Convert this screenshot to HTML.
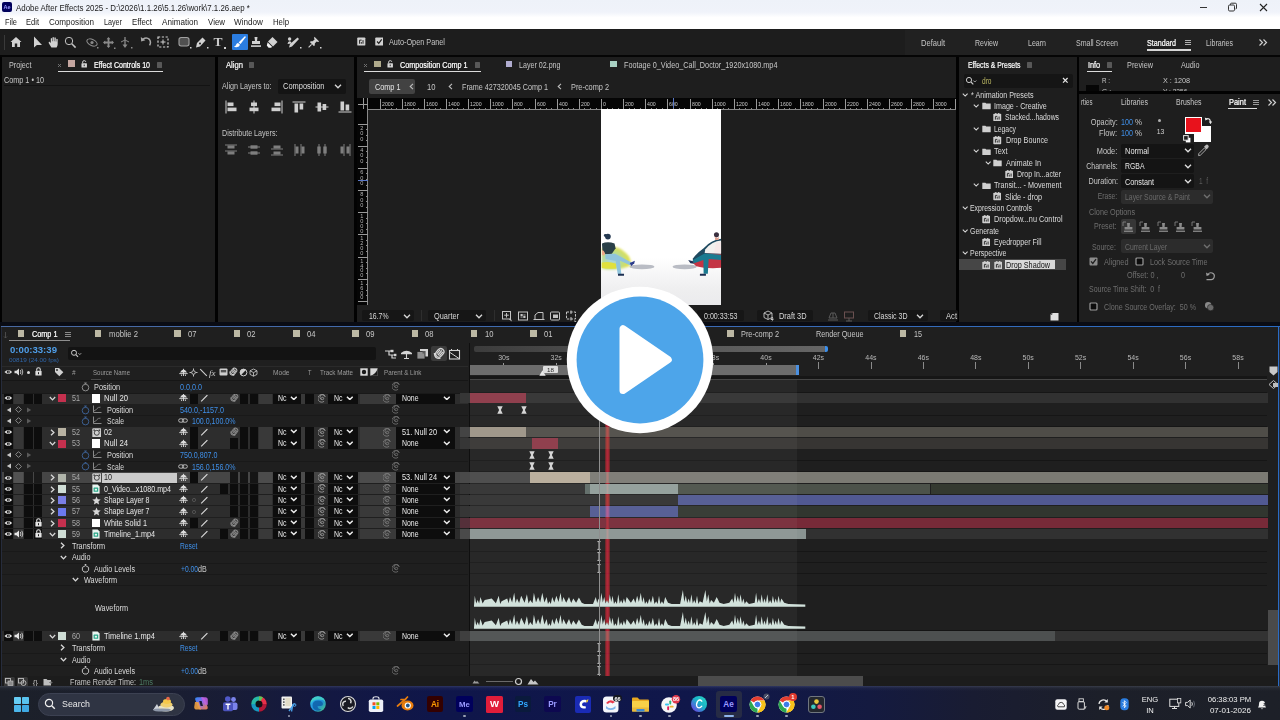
<!DOCTYPE html>
<html lang="en"><head><meta charset="utf-8"><title>Adobe After Effects 2025</title>
<style>
html,body{margin:0;padding:0;}
body{width:1280px;height:720px;overflow:hidden;position:relative;background:#121212;font-family:"Liberation Sans", sans-serif;}
#root{position:absolute;left:0;top:0;width:1280px;height:720px;overflow:hidden;}
#root div,#root svg,#root span{position:absolute;}
#root div{box-sizing:border-box;}
.t{white-space:pre;}

</style></head><body><div id="root">
<div style="left:0px;top:0px;width:1280px;height:29px;background:linear-gradient(#eef2f9 0px,#f0f3fa 12px,#ffffff 17.5px,#ffffff 29px);"></div>
<div style="left:2px;top:2px;width:10px;height:10px;background:#00005b;border-radius:2px;"></div>
<span class="t" style="left:3.48px;top:4px;font-size:5.5px;line-height:7.15px;color:#9999ff;font-weight:700;">Ae</span>
<span class="t" style="left:16px;top:3px;font-size:8.6px;line-height:11.18px;color:#1a1a1a;transform:scaleX(0.919);transform-origin:0 50%;">Adobe After Effects 2025 - D:\2026\1.1.26\5.1.26\work\7.1.26.aep *</span>
<span class="t" style="left:5px;top:17px;font-size:8.6px;line-height:11.18px;color:#1a1a1a;transform:scaleX(0.866);transform-origin:0 50%;">File</span>
<span class="t" style="left:26px;top:17px;font-size:8.6px;line-height:11.18px;color:#1a1a1a;transform:scaleX(0.878);transform-origin:0 50%;">Edit</span>
<span class="t" style="left:49px;top:17px;font-size:8.6px;line-height:11.18px;color:#1a1a1a;transform:scaleX(0.942);transform-origin:0 50%;">Composition</span>
<span class="t" style="left:104px;top:17px;font-size:8.6px;line-height:11.18px;color:#1a1a1a;transform:scaleX(0.837);transform-origin:0 50%;">Layer</span>
<span class="t" style="left:132px;top:17px;font-size:8.6px;line-height:11.18px;color:#1a1a1a;transform:scaleX(0.916);transform-origin:0 50%;">Effect</span>
<span class="t" style="left:162px;top:17px;font-size:8.6px;line-height:11.18px;color:#1a1a1a;transform:scaleX(0.942);transform-origin:0 50%;">Animation</span>
<span class="t" style="left:208px;top:17px;font-size:8.6px;line-height:11.18px;color:#1a1a1a;transform:scaleX(0.920);transform-origin:0 50%;">View</span>
<span class="t" style="left:234px;top:17px;font-size:8.6px;line-height:11.18px;color:#1a1a1a;transform:scaleX(0.948);transform-origin:0 50%;">Window</span>
<span class="t" style="left:273px;top:17px;font-size:8.6px;line-height:11.18px;color:#1a1a1a;transform:scaleX(0.905);transform-origin:0 50%;">Help</span>
<div style="left:1200px;top:7px;width:7px;height:1px;background:#333;"></div>
<svg style="left:1227px;top:2px;" width="11" height="11" viewBox="0 0 11 11"><rect x="1.5" y="3" width="6" height="6" rx="1.2" fill="none" stroke="#333" stroke-width="1"/><path d="M3.5 3 V2.2 Q3.5 1.2 4.5 1.2 H8.3 Q9.5 1.2 9.5 2.4 V6 Q9.5 7 8.6 7" fill="none" stroke="#333" stroke-width="1"/></svg>
<svg style="left:1258px;top:2px;" width="11" height="11" viewBox="0 0 11 11"><path d="M2 2 L9 9 M9 2 L2 9" stroke="#222" stroke-width="1.1" fill="none"/></svg>
<div style="left:0px;top:28.7px;width:1280px;height:27.3px;background:#1d1d1d;"></div>
<div style="left:0px;top:55.2px;width:1280px;height:1.6px;background:#050505;"></div>
<div style="left:905px;top:30px;width:375px;height:25px;background:#212121;"></div>
<div style="left:4px;top:35px;width:1px;height:15px;background:#3a3a3a;"></div>
<svg style="left:10px;top:36px;" width="12" height="12" viewBox="0 0 12 12"><path d="M6 1 L0.5 6 H2 V11 H4.8 V7.5 H7.2 V11 H10 V6 H11.5 Z" fill="#d2d2d2"/></svg>
<svg style="left:32.5px;top:36px;" width="10" height="13" viewBox="0 0 10 13"><path d="M1 0.6 L1 11.6 L3.9 8.9 L9 8.9 Z" fill="#d2d2d2"/></svg>
<svg style="left:48px;top:36px;" width="12" height="12" viewBox="0 0 12 12"><path d="M3.4 11.4 L0.8 7.2 Q0.2 5.6 1.6 5.8 L2.8 7 V2.6 Q3.4 1.6 4 2.6 V5.2 H4.5 V1.4 Q5.2 0.4 5.9 1.4 V5.2 H6.4 V1.8 Q7.1 0.9 7.8 1.9 V5.4 H8.3 V3.2 Q9 2.4 9.7 3.3 V8 Q9.7 10 8.6 11.4 Z" fill="#d2d2d2"/></svg>
<svg style="left:64px;top:36px;" width="13" height="13" viewBox="0 0 13 13"><circle cx="5" cy="5" r="3.7" fill="none" stroke="#c4c4c4" stroke-width="1"/><path d="M7.8 7.8 L11.6 11.6" stroke="#c4c4c4" stroke-width="1.5"/></svg>
<svg style="left:85px;top:36px;" width="14" height="13" viewBox="0 0 14 13"><ellipse cx="7" cy="6.5" rx="5.5" ry="3" fill="none" stroke="#8a8a8a" stroke-width="1.1" transform="rotate(25 7 6.5)"/><circle cx="7" cy="6.5" r="1.6" fill="#8a8a8a"/><rect x="12" y="11" width="1.5" height="1.5" fill="#8a8a8a"/></svg>
<svg style="left:103px;top:36.5px;" width="14" height="13" viewBox="0 0 14 13"><path d="M5.5 1.5 V9.5 M1.5 5.5 H9.5" stroke="#8a8a8a" stroke-width="1.8"/><path d="M5.5 0 L3.6 2.2 H7.4Z M5.5 11 L3.6 8.8 H7.4Z M0 5.5 L2.2 3.6 V7.4Z M11 5.5 L8.8 3.6 V7.4Z" fill="#8a8a8a"/><rect x="11" y="10.5" width="1.5" height="1.5" fill="#8a8a8a"/></svg>
<svg style="left:119px;top:36px;" width="14" height="13" viewBox="0 0 14 13"><path d="M6 1 V10" stroke="#8a8a8a" stroke-width="1.3"/><path d="M6 12 L3.5 8.5 H8.5Z" fill="#8a8a8a"/><path d="M2 6 L6 4 L10 6" stroke="#8a8a8a" fill="none" stroke-width="1"/><rect x="12" y="11" width="1.5" height="1.5" fill="#8a8a8a"/></svg>
<svg style="left:140px;top:36px;" width="13" height="13" viewBox="0 0 13 13"><path d="M3 3.2 Q6.5 0.6 9.4 3.4 Q11.4 6.4 9.6 9.4" fill="none" stroke="#a8a8a8" stroke-width="1.5"/><path d="M0.8 1 L1.2 5.6 L5.4 4.2 Z" fill="#a8a8a8"/></svg>
<svg style="left:157px;top:36px;" width="13" height="13" viewBox="0 0 13 13"><rect x="1" y="1" width="10" height="10" fill="none" stroke="#d2d2d2" stroke-width="1.2" stroke-dasharray="2.2 1.6"/><path d="M6 3.5 V8.5 M3.5 6 H8.5" stroke="#d2d2d2" stroke-width="1"/></svg>
<svg style="left:178px;top:36px;" width="14" height="13" viewBox="0 0 14 13"><rect x="1" y="1.5" width="10" height="8.5" rx="2.2" fill="#505050" stroke="#a2a2a2" stroke-width="1.1"/><rect x="12" y="11" width="1.5" height="1.5" fill="#d2d2d2"/></svg>
<svg style="left:195px;top:36px;" width="14" height="13" viewBox="0 0 14 13"><path d="M1 11.5 L2 7 L7.5 1.5 L10.5 4.5 L5 10.5 Z" fill="#d2d2d2"/><circle cx="5" cy="7.5" r="1" fill="#1d1d1d"/><rect x="12" y="11" width="1.5" height="1.5" fill="#d2d2d2"/></svg>
<span class="t" style="left:213.49px;top:33px;font-size:13.5px;line-height:17.55px;color:#cacaca;font-weight:700;font-family:'Liberation Serif', serif;">T</span>
<div style="left:224px;top:47px;width:1.5px;height:1.5px;background:#d2d2d2;"></div>
<div style="left:232px;top:34px;width:15.5px;height:16px;background:#2b7de0;border-radius:1px;"></div>
<svg style="left:233px;top:35px;" width="14" height="14" viewBox="0 0 14 14"><path d="M11.8 1.2 Q13 1 12.6 2.2 L7.6 9 L5.6 7.4 Z" fill="#fff"/><path d="M5 8 L7 9.7 Q6.6 12 3.5 12.3 Q1.6 12.4 1 11.6 Q3 11 3.2 9.6 Q3.6 8.2 5 8Z" fill="#fff"/></svg>
<svg style="left:250px;top:36px;" width="13" height="13" viewBox="0 0 13 13"><path d="M4.5 1 H7.5 L7 5 H10 V8 H2 V5 H5 Z" fill="#d2d2d2"/><rect x="1" y="9.3" width="10" height="1.6" fill="#d2d2d2"/></svg>
<svg style="left:266px;top:36px;" width="13" height="13" viewBox="0 0 13 13"><path d="M6.5 1 L11.5 6 L7 10.5 L2 5.5 Z" fill="#d2d2d2"/><path d="M1.6 6.2 L6.2 10.9 L4.8 11.8 H2.6 L0.8 9.6Z" fill="#f4f4f4"/></svg>
<svg style="left:287px;top:36px;" width="15" height="13" viewBox="0 0 15 13"><path d="M2 11.5 L3 8 L10.5 1.5 L12 3 L5 10.5Z" fill="#d2d2d2"/><circle cx="2.6" cy="3" r="1.7" fill="#d2d2d2"/><path d="M0.5 8 Q1 5.2 2.6 5.2 Q4.4 5.2 4.6 7.4Z" fill="#d2d2d2"/><rect x="13" y="11" width="1.5" height="1.5" fill="#d2d2d2"/></svg>
<svg style="left:308px;top:36px;" width="14" height="13" viewBox="0 0 14 13"><path d="M6.5 0.8 L11.2 5.5 L10 6 L8.6 5.6 L6.8 7.6 L6.8 9.6 L5.8 10 L2 6.2 L2.6 5.2 L4.6 5.2 L6.6 3.4 L6 2 Z" fill="#d2d2d2"/><path d="M3.6 8.4 L0.6 11.4" stroke="#d2d2d2" stroke-width="1.1"/><rect x="12" y="11" width="1.5" height="1.5" fill="#d2d2d2"/></svg>
<svg style="left:357px;top:37.3px;" width="8.6" height="9" viewBox="0 0 10 10"><rect x="0.3" y="0.3" width="9.4" height="9.4" rx="1" fill="#d2d2d2"/><path d="M3 3.4 V7.6 M5 5.6 V7.6 M7 3.4 V7.6 M3 3.4 H5.4" stroke="#1d1d1d" stroke-width="1.1" fill="none"/></svg>
<svg style="left:374.8px;top:37.3px;" width="8.6" height="9" viewBox="0 0 10 10"><rect x="0.3" y="0.3" width="9.4" height="9.4" rx="1" fill="#d2d2d2"/><path d="M2.4 5 L4.4 7.2 L7.8 2.6" stroke="#1d1d1d" stroke-width="1.4" fill="none"/></svg>
<span class="t" style="left:389px;top:37px;font-size:8.4px;line-height:10.92px;color:#c6c6c6;transform:scaleX(0.871);transform-origin:0 50%;">Auto-Open Panel</span>
<span class="t" style="left:921px;top:38px;font-size:8.4px;line-height:10.92px;color:#c6c6c6;transform:scaleX(0.904);transform-origin:0 50%;">Default</span>
<span class="t" style="left:975px;top:38px;font-size:8.4px;line-height:10.92px;color:#c6c6c6;transform:scaleX(0.837);transform-origin:0 50%;">Review</span>
<span class="t" style="left:1028px;top:38px;font-size:8.4px;line-height:10.92px;color:#c6c6c6;transform:scaleX(0.840);transform-origin:0 50%;">Learn</span>
<span class="t" style="left:1076px;top:38px;font-size:8.4px;line-height:10.92px;color:#c6c6c6;transform:scaleX(0.843);transform-origin:0 50%;">Small Screen</span>
<span class="t" style="left:1147px;top:38px;font-size:8.4px;line-height:10.92px;color:#fffffe;transform:scaleX(0.853);transform-origin:0 50%;-webkit-text-stroke:0.22px #fff;">Standard</span>
<span class="t" style="left:1206px;top:38px;font-size:8.4px;line-height:10.92px;color:#c6c6c6;transform:scaleX(0.840);transform-origin:0 50%;">Libraries</span>
<div style="left:1146.8px;top:49.2px;width:44px;height:1.5px;background:#d8d8d8;"></div>
<div style="left:1185px;top:40.2px;width:5.5px;height:1px;background:#b0b0b0;"></div>
<div style="left:1185px;top:42.300000000000004px;width:5.5px;height:1px;background:#b0b0b0;"></div>
<div style="left:1185px;top:44.400000000000006px;width:5.5px;height:1px;background:#b0b0b0;"></div>
<svg style="left:1258px;top:38px;" width="10" height="9" viewBox="0 0 10 9"><path d="M1.5 1.5 L4.5 4.5 L1.5 7.5 M5.5 1.5 L8.5 4.5 L5.5 7.5" fill="none" stroke="#d0d0d0" stroke-width="1.2"/></svg>
<div style="left:0px;top:56.7px;width:1280px;height:270px;background:#020202;"></div>
<div style="left:2px;top:56.8px;width:213px;height:265.4px;background:#1e1e1e;"></div>
<div style="left:218px;top:56.8px;width:136.2px;height:265.4px;background:#1e1e1e;"></div>
<div style="left:357px;top:56.8px;width:599.1px;height:265.4px;background:#1e1e1e;"></div>
<div style="left:958.8px;top:56.8px;width:118.2px;height:265.4px;background:#1e1e1e;"></div>
<div style="left:1079px;top:56.8px;width:201px;height:34.2px;background:#1e1e1e;"></div>
<div style="left:1079px;top:94px;width:201px;height:228.2px;background:#1e1e1e;"></div>
<span class="t" style="left:8.5px;top:60px;font-size:8.4px;line-height:10.92px;color:#c6c6c6;transform:scaleX(0.863);transform-origin:0 50%;">Project</span>
<svg style="left:57.0px;top:63.0px;" width="5.0" height="5.0" viewBox="0 0 5.0 5.0"><path d="M1 1 L4.0 4.0 M4.0 1 L1 4.0" stroke="#777" stroke-width="0.9"/></svg>
<div style="left:68px;top:60px;width:6.8px;height:6.8px;background:#c4a6a0;"></div>
<svg style="left:81.3px;top:59.9px;" width="6.4" height="8.2" viewBox="0 0 7 9"><rect x="0.5" y="3.6" width="6" height="4.6" rx="0.6" fill="#d8d8d8"/><path d="M1.8 3.6 V2.2 Q1.8 0.7 3.5 0.7 Q5.2 0.7 5.2 2" fill="none" stroke="#d8d8d8" stroke-width="1"/><rect x="3" y="5" width="1" height="1.8" fill="#1e1e1e"/></svg>
<span class="t" style="left:93.5px;top:60px;font-size:8.4px;line-height:10.92px;color:#ffffff;transform:scaleX(0.843);transform-origin:0 50%;-webkit-text-stroke:0.22px #fff;">Effect Controls 10</span>
<div style="left:157px;top:62.3px;width:5.2px;height:5.6px;background:#585858;border-radius:0.5px;"></div>
<div style="left:58px;top:71px;width:105px;height:1.2px;background:#dcdcdc;"></div>
<span class="t" style="left:4px;top:75px;font-size:8.4px;line-height:10.92px;color:#c6c6c6;transform:scaleX(0.865);transform-origin:0 50%;">Comp 1 • 10</span>
<div style="left:4px;top:85px;width:206px;height:1px;background:#131313;"></div>
<span class="t" style="left:226px;top:60px;font-size:8.4px;line-height:10.92px;color:#f0f0f0;transform:scaleX(0.913);transform-origin:0 50%;-webkit-text-stroke:0.22px #fff;">Align</span>
<div style="left:249px;top:62.3px;width:5.2px;height:5.6px;background:#585858;border-radius:0.5px;"></div>
<span class="t" style="left:222px;top:81px;font-size:8.4px;line-height:10.92px;color:#c6c6c6;transform:scaleX(0.857);transform-origin:0 50%;">Align Layers to:</span>
<div style="left:278px;top:79px;width:67.5px;height:14.5px;background:#141414;border-radius:2px;"></div>
<span class="t" style="left:282.5px;top:81px;font-size:8.4px;line-height:10.92px;color:#dedede;transform:scaleX(0.891);transform-origin:0 50%;">Composition</span>
<svg style="left:334.0px;top:84.0px;" width="8.0" height="5.0" viewBox="0 0 8 5"><path d="M1 0.8 L4 3.8 L7 0.8" fill="none" stroke="#d8d8d8" stroke-width="1.3"/></svg>
<svg style="left:224px;top:99.8px;" width="14" height="14" viewBox="0 0 14 14"><rect x="1.5" y="0.5" width="1" height="13" fill="#cfcfcf"/><rect x="3.5" y="2.5" width="6" height="3.6" fill="#cfcfcf"/><rect x="3.5" y="7.6" width="9" height="3.6" fill="#cfcfcf"/></svg>
<svg style="left:246.5px;top:99.8px;" width="14" height="14" viewBox="0 0 14 14"><rect x="6.5" y="0.5" width="1" height="13" fill="#cfcfcf"/><rect x="4" y="2.5" width="6" height="3.6" fill="#cfcfcf"/><rect x="2.5" y="7.6" width="9" height="3.6" fill="#cfcfcf"/></svg>
<svg style="left:269.5px;top:99.8px;" width="14" height="14" viewBox="0 0 14 14"><rect x="11.5" y="0.5" width="1" height="13" fill="#cfcfcf"/><rect x="4.5" y="2.5" width="6" height="3.6" fill="#cfcfcf"/><rect x="1.5" y="7.6" width="9" height="3.6" fill="#cfcfcf"/></svg>
<svg style="left:292px;top:99.8px;" width="14" height="14" viewBox="0 0 14 14"><rect x="0.5" y="1.5" width="13" height="1" fill="#cfcfcf"/><rect x="2.5" y="3.5" width="3.6" height="9" fill="#cfcfcf"/><rect x="7.6" y="3.5" width="3.6" height="6" fill="#cfcfcf"/></svg>
<svg style="left:315px;top:99.8px;" width="14" height="14" viewBox="0 0 14 14"><rect x="0.5" y="6.5" width="13" height="1" fill="#cfcfcf"/><rect x="2.5" y="2.5" width="3.6" height="9" fill="#cfcfcf"/><rect x="7.6" y="4" width="3.6" height="6" fill="#cfcfcf"/></svg>
<svg style="left:338px;top:99.8px;" width="14" height="14" viewBox="0 0 14 14"><rect x="0.5" y="11.5" width="13" height="1" fill="#cfcfcf"/><rect x="2.5" y="1.5" width="3.6" height="9" fill="#cfcfcf"/><rect x="7.6" y="4.5" width="3.6" height="6" fill="#cfcfcf"/></svg>
<span class="t" style="left:222px;top:128px;font-size:8.4px;line-height:10.92px;color:#c6c6c6;transform:scaleX(0.852);transform-origin:0 50%;">Distribute Layers:</span>
<svg style="left:224px;top:143px;" width="14" height="14" viewBox="0 0 14 14"><rect x="1" y="1.5" width="12" height="1" fill="#7e7e7e"/><rect x="3.5" y="2.5" width="7" height="3" fill="#7e7e7e"/><rect x="1" y="7.5" width="12" height="1" fill="#7e7e7e"/><rect x="3.5" y="8.5" width="7" height="3" fill="#7e7e7e"/></svg>
<svg style="left:247px;top:143px;" width="14" height="14" viewBox="0 0 14 14"><rect x="1" y="3.5" width="12" height="1" fill="#7e7e7e"/><rect x="3.5" y="2.3" width="7" height="3.4" fill="#7e7e7e"/><rect x="1" y="9.5" width="12" height="1" fill="#7e7e7e"/><rect x="3.5" y="8.3" width="7" height="3.4" fill="#7e7e7e"/></svg>
<svg style="left:269.5px;top:143px;" width="14" height="14" viewBox="0 0 14 14"><rect x="1" y="5.5" width="12" height="1" fill="#7e7e7e"/><rect x="3.5" y="2.5" width="7" height="3" fill="#7e7e7e"/><rect x="1" y="11.5" width="12" height="1" fill="#7e7e7e"/><rect x="3.5" y="8.5" width="7" height="3" fill="#7e7e7e"/></svg>
<svg style="left:292.5px;top:143px;" width="14" height="14" viewBox="0 0 14 14"><rect x="1.5" y="1" width="1" height="12" fill="#7e7e7e"/><rect x="2.5" y="3.5" width="3" height="7" fill="#7e7e7e"/><rect x="7.5" y="1" width="1" height="12" fill="#7e7e7e"/><rect x="8.5" y="3.5" width="3" height="7" fill="#7e7e7e"/></svg>
<svg style="left:315px;top:143px;" width="14" height="14" viewBox="0 0 14 14"><rect x="3.5" y="1" width="1" height="12" fill="#7e7e7e"/><rect x="2.3" y="3.5" width="3.4" height="7" fill="#7e7e7e"/><rect x="9.5" y="1" width="1" height="12" fill="#7e7e7e"/><rect x="8.3" y="3.5" width="3.4" height="7" fill="#7e7e7e"/></svg>
<svg style="left:338px;top:143px;" width="14" height="14" viewBox="0 0 14 14"><rect x="5.5" y="1" width="1" height="12" fill="#7e7e7e"/><rect x="2.5" y="3.5" width="3" height="7" fill="#7e7e7e"/><rect x="11.5" y="1" width="1" height="12" fill="#7e7e7e"/><rect x="8.5" y="3.5" width="3" height="7" fill="#7e7e7e"/></svg>
<svg style="left:363.0px;top:63.0px;" width="5.0" height="5.0" viewBox="0 0 5.0 5.0"><path d="M1 1 L4.0 4.0 M4.0 1 L1 4.0" stroke="#777" stroke-width="0.9"/></svg>
<div style="left:374px;top:60.5px;width:6.8px;height:6.8px;background:#b0ab8c;"></div>
<svg style="left:387.3px;top:59.9px;" width="6.4" height="8.2" viewBox="0 0 7 9"><rect x="0.5" y="3.6" width="6" height="4.6" rx="0.6" fill="#d8d8d8"/><path d="M1.8 3.6 V2.2 Q1.8 0.7 3.5 0.7 Q5.2 0.7 5.2 2" fill="none" stroke="#d8d8d8" stroke-width="1"/><rect x="3" y="5" width="1" height="1.8" fill="#1e1e1e"/></svg>
<span class="t" style="left:399.5px;top:60px;font-size:8.4px;line-height:10.92px;color:#ffffff;transform:scaleX(0.863);transform-origin:0 50%;-webkit-text-stroke:0.22px #fff;">Composition Comp 1</span>
<div style="left:475px;top:62.3px;width:5.2px;height:5.6px;background:#585858;border-radius:0.5px;"></div>
<div style="left:364px;top:71px;width:117px;height:1.2px;background:#dcdcdc;"></div>
<div style="left:505.5px;top:60.5px;width:6.8px;height:6.8px;background:#b0acd0;"></div>
<span class="t" style="left:518.5px;top:60px;font-size:8.4px;line-height:10.92px;color:#c6c6c6;transform:scaleX(0.849);transform-origin:0 50%;">Layer 02.png</span>
<div style="left:610px;top:60.5px;width:6.8px;height:6.8px;background:#a8d0c2;"></div>
<span class="t" style="left:623.5px;top:60px;font-size:8.4px;line-height:10.92px;color:#c6c6c6;transform:scaleX(0.868);transform-origin:0 50%;">Footage 0_Video_Call_Doctor_1920x1080.mp4</span>
<div style="left:369.3px;top:78.8px;width:46.2px;height:15.2px;background:#424242;border-radius:2px;"></div>
<span class="t" style="left:375px;top:82px;font-size:8.4px;line-height:10.92px;color:#e6e6e6;transform:scaleX(0.869);transform-origin:0 50%;">Comp 1</span>
<svg style="left:408.5px;top:83.0px;" width="5" height="7" viewBox="0 0 5 7"><path d="M4 0.8 L1.2 3.5 L4 6.2" fill="none" stroke="#bdbdbd" stroke-width="1.1"/></svg>
<span class="t" style="left:427px;top:82px;font-size:8.4px;line-height:10.92px;color:#c6c6c6;transform:scaleX(0.911);transform-origin:0 50%;">10</span>
<svg style="left:447.5px;top:83.0px;" width="5" height="7" viewBox="0 0 5 7"><path d="M4 0.8 L1.2 3.5 L4 6.2" fill="none" stroke="#bdbdbd" stroke-width="1.1"/></svg>
<span class="t" style="left:462px;top:82px;font-size:8.4px;line-height:10.92px;color:#c6c6c6;transform:scaleX(0.859);transform-origin:0 50%;">Frame 427320045 Comp 1</span>
<svg style="left:557.0px;top:83.0px;" width="5" height="7" viewBox="0 0 5 7"><path d="M4 0.8 L1.2 3.5 L4 6.2" fill="none" stroke="#bdbdbd" stroke-width="1.1"/></svg>
<span class="t" style="left:570.5px;top:82px;font-size:8.4px;line-height:10.92px;color:#c6c6c6;transform:scaleX(0.878);transform-origin:0 50%;">Pre-comp 2</span>
<div style="left:357px;top:98px;width:599.1px;height:11.5px;background:#050505;"></div>
<div style="left:357px;top:98px;width:11px;height:207px;background:#050505;"></div>
<div style="left:379.5px;top:99px;width:0.9px;height:10px;background:#9a9a9a;"></div>
<div style="left:385.0px;top:107.5px;width:0.8px;height:1.8px;background:#8a8a8a;"></div>
<div style="left:390.6px;top:107.5px;width:0.8px;height:1.8px;background:#8a8a8a;"></div>
<div style="left:396.1px;top:107.5px;width:0.8px;height:1.8px;background:#8a8a8a;"></div>
<span class="t" style="left:381.5px;top:100px;font-size:6.2px;line-height:8.06px;color:#c8c8c8;transform:scaleX(0.843);transform-origin:0 50%;">2000</span>
<div style="left:401.6px;top:99px;width:0.9px;height:10px;background:#9a9a9a;"></div>
<div style="left:407.2px;top:107.5px;width:0.8px;height:1.8px;background:#8a8a8a;"></div>
<div style="left:412.7px;top:107.5px;width:0.8px;height:1.8px;background:#8a8a8a;"></div>
<div style="left:418.3px;top:107.5px;width:0.8px;height:1.8px;background:#8a8a8a;"></div>
<span class="t" style="left:403.6px;top:100px;font-size:6.2px;line-height:8.06px;color:#c8c8c8;transform:scaleX(0.843);transform-origin:0 50%;">1800</span>
<div style="left:423.8px;top:99px;width:0.9px;height:10px;background:#9a9a9a;"></div>
<div style="left:429.3px;top:107.5px;width:0.8px;height:1.8px;background:#8a8a8a;"></div>
<div style="left:434.9px;top:107.5px;width:0.8px;height:1.8px;background:#8a8a8a;"></div>
<div style="left:440.4px;top:107.5px;width:0.8px;height:1.8px;background:#8a8a8a;"></div>
<span class="t" style="left:425.8px;top:100px;font-size:6.2px;line-height:8.06px;color:#c8c8c8;transform:scaleX(0.843);transform-origin:0 50%;">1600</span>
<div style="left:446.0px;top:99px;width:0.9px;height:10px;background:#9a9a9a;"></div>
<div style="left:451.5px;top:107.5px;width:0.8px;height:1.8px;background:#8a8a8a;"></div>
<div style="left:457.0px;top:107.5px;width:0.8px;height:1.8px;background:#8a8a8a;"></div>
<div style="left:462.6px;top:107.5px;width:0.8px;height:1.8px;background:#8a8a8a;"></div>
<span class="t" style="left:448.0px;top:100px;font-size:6.2px;line-height:8.06px;color:#c8c8c8;transform:scaleX(0.843);transform-origin:0 50%;">1400</span>
<div style="left:468.1px;top:99px;width:0.9px;height:10px;background:#9a9a9a;"></div>
<div style="left:473.6px;top:107.5px;width:0.8px;height:1.8px;background:#8a8a8a;"></div>
<div style="left:479.2px;top:107.5px;width:0.8px;height:1.8px;background:#8a8a8a;"></div>
<div style="left:484.7px;top:107.5px;width:0.8px;height:1.8px;background:#8a8a8a;"></div>
<span class="t" style="left:470.1px;top:100px;font-size:6.2px;line-height:8.06px;color:#c8c8c8;transform:scaleX(0.843);transform-origin:0 50%;">1200</span>
<div style="left:490.2px;top:99px;width:0.9px;height:10px;background:#9a9a9a;"></div>
<div style="left:495.8px;top:107.5px;width:0.8px;height:1.8px;background:#8a8a8a;"></div>
<div style="left:501.3px;top:107.5px;width:0.8px;height:1.8px;background:#8a8a8a;"></div>
<div style="left:506.9px;top:107.5px;width:0.8px;height:1.8px;background:#8a8a8a;"></div>
<span class="t" style="left:492.2px;top:100px;font-size:6.2px;line-height:8.06px;color:#c8c8c8;transform:scaleX(0.843);transform-origin:0 50%;">1000</span>
<div style="left:512.4px;top:99px;width:0.9px;height:10px;background:#9a9a9a;"></div>
<div style="left:517.9px;top:107.5px;width:0.8px;height:1.8px;background:#8a8a8a;"></div>
<div style="left:523.5px;top:107.5px;width:0.8px;height:1.8px;background:#8a8a8a;"></div>
<div style="left:529.0px;top:107.5px;width:0.8px;height:1.8px;background:#8a8a8a;"></div>
<span class="t" style="left:514.4px;top:100px;font-size:6.2px;line-height:8.06px;color:#c8c8c8;transform:scaleX(0.842);transform-origin:0 50%;">800</span>
<div style="left:534.6px;top:99px;width:0.9px;height:10px;background:#9a9a9a;"></div>
<div style="left:540.1px;top:107.5px;width:0.8px;height:1.8px;background:#8a8a8a;"></div>
<div style="left:545.6px;top:107.5px;width:0.8px;height:1.8px;background:#8a8a8a;"></div>
<div style="left:551.2px;top:107.5px;width:0.8px;height:1.8px;background:#8a8a8a;"></div>
<span class="t" style="left:536.6px;top:100px;font-size:6.2px;line-height:8.06px;color:#c8c8c8;transform:scaleX(0.842);transform-origin:0 50%;">600</span>
<div style="left:556.7px;top:99px;width:0.9px;height:10px;background:#9a9a9a;"></div>
<div style="left:562.2px;top:107.5px;width:0.8px;height:1.8px;background:#8a8a8a;"></div>
<div style="left:567.8px;top:107.5px;width:0.8px;height:1.8px;background:#8a8a8a;"></div>
<div style="left:573.3px;top:107.5px;width:0.8px;height:1.8px;background:#8a8a8a;"></div>
<span class="t" style="left:558.7px;top:100px;font-size:6.2px;line-height:8.06px;color:#c8c8c8;transform:scaleX(0.842);transform-origin:0 50%;">400</span>
<div style="left:578.9px;top:99px;width:0.9px;height:10px;background:#9a9a9a;"></div>
<div style="left:584.4px;top:107.5px;width:0.8px;height:1.8px;background:#8a8a8a;"></div>
<div style="left:589.9px;top:107.5px;width:0.8px;height:1.8px;background:#8a8a8a;"></div>
<div style="left:595.5px;top:107.5px;width:0.8px;height:1.8px;background:#8a8a8a;"></div>
<span class="t" style="left:580.9px;top:100px;font-size:6.2px;line-height:8.06px;color:#c8c8c8;transform:scaleX(0.842);transform-origin:0 50%;">200</span>
<div style="left:601.0px;top:99px;width:0.9px;height:10px;background:#9a9a9a;"></div>
<div style="left:606.5px;top:107.5px;width:0.8px;height:1.8px;background:#8a8a8a;"></div>
<div style="left:612.1px;top:107.5px;width:0.8px;height:1.8px;background:#8a8a8a;"></div>
<div style="left:617.6px;top:107.5px;width:0.8px;height:1.8px;background:#8a8a8a;"></div>
<span class="t" style="left:603.0px;top:100px;font-size:6.2px;line-height:8.06px;color:#c8c8c8;transform:scaleX(0.840);transform-origin:0 50%;">0</span>
<div style="left:623.1px;top:99px;width:0.9px;height:10px;background:#9a9a9a;"></div>
<div style="left:628.7px;top:107.5px;width:0.8px;height:1.8px;background:#8a8a8a;"></div>
<div style="left:634.2px;top:107.5px;width:0.8px;height:1.8px;background:#8a8a8a;"></div>
<div style="left:639.8px;top:107.5px;width:0.8px;height:1.8px;background:#8a8a8a;"></div>
<span class="t" style="left:625.1px;top:100px;font-size:6.2px;line-height:8.06px;color:#c8c8c8;transform:scaleX(0.842);transform-origin:0 50%;">200</span>
<div style="left:645.3px;top:99px;width:0.9px;height:10px;background:#9a9a9a;"></div>
<div style="left:650.8px;top:107.5px;width:0.8px;height:1.8px;background:#8a8a8a;"></div>
<div style="left:656.4px;top:107.5px;width:0.8px;height:1.8px;background:#8a8a8a;"></div>
<div style="left:661.9px;top:107.5px;width:0.8px;height:1.8px;background:#8a8a8a;"></div>
<span class="t" style="left:647.3px;top:100px;font-size:6.2px;line-height:8.06px;color:#c8c8c8;transform:scaleX(0.842);transform-origin:0 50%;">400</span>
<div style="left:667.4px;top:99px;width:0.9px;height:10px;background:#9a9a9a;"></div>
<div style="left:673.0px;top:107.5px;width:0.8px;height:1.8px;background:#8a8a8a;"></div>
<div style="left:678.5px;top:107.5px;width:0.8px;height:1.8px;background:#8a8a8a;"></div>
<div style="left:684.1px;top:107.5px;width:0.8px;height:1.8px;background:#8a8a8a;"></div>
<span class="t" style="left:669.4px;top:100px;font-size:6.2px;line-height:8.06px;color:#c8c8c8;transform:scaleX(0.842);transform-origin:0 50%;">600</span>
<div style="left:689.6px;top:99px;width:0.9px;height:10px;background:#9a9a9a;"></div>
<div style="left:695.1px;top:107.5px;width:0.8px;height:1.8px;background:#8a8a8a;"></div>
<div style="left:700.7px;top:107.5px;width:0.8px;height:1.8px;background:#8a8a8a;"></div>
<div style="left:706.2px;top:107.5px;width:0.8px;height:1.8px;background:#8a8a8a;"></div>
<span class="t" style="left:691.6px;top:100px;font-size:6.2px;line-height:8.06px;color:#c8c8c8;transform:scaleX(0.842);transform-origin:0 50%;">800</span>
<div style="left:711.8px;top:99px;width:0.9px;height:10px;background:#9a9a9a;"></div>
<div style="left:717.3px;top:107.5px;width:0.8px;height:1.8px;background:#8a8a8a;"></div>
<div style="left:722.8px;top:107.5px;width:0.8px;height:1.8px;background:#8a8a8a;"></div>
<div style="left:728.4px;top:107.5px;width:0.8px;height:1.8px;background:#8a8a8a;"></div>
<span class="t" style="left:713.8px;top:100px;font-size:6.2px;line-height:8.06px;color:#c8c8c8;transform:scaleX(0.843);transform-origin:0 50%;">1000</span>
<div style="left:733.9px;top:99px;width:0.9px;height:10px;background:#9a9a9a;"></div>
<div style="left:739.4px;top:107.5px;width:0.8px;height:1.8px;background:#8a8a8a;"></div>
<div style="left:745.0px;top:107.5px;width:0.8px;height:1.8px;background:#8a8a8a;"></div>
<div style="left:750.5px;top:107.5px;width:0.8px;height:1.8px;background:#8a8a8a;"></div>
<span class="t" style="left:735.9px;top:100px;font-size:6.2px;line-height:8.06px;color:#c8c8c8;transform:scaleX(0.843);transform-origin:0 50%;">1200</span>
<div style="left:756.0px;top:99px;width:0.9px;height:10px;background:#9a9a9a;"></div>
<div style="left:761.6px;top:107.5px;width:0.8px;height:1.8px;background:#8a8a8a;"></div>
<div style="left:767.1px;top:107.5px;width:0.8px;height:1.8px;background:#8a8a8a;"></div>
<div style="left:772.7px;top:107.5px;width:0.8px;height:1.8px;background:#8a8a8a;"></div>
<span class="t" style="left:758.0px;top:100px;font-size:6.2px;line-height:8.06px;color:#c8c8c8;transform:scaleX(0.843);transform-origin:0 50%;">1400</span>
<div style="left:778.2px;top:99px;width:0.9px;height:10px;background:#9a9a9a;"></div>
<div style="left:783.7px;top:107.5px;width:0.8px;height:1.8px;background:#8a8a8a;"></div>
<div style="left:789.3px;top:107.5px;width:0.8px;height:1.8px;background:#8a8a8a;"></div>
<div style="left:794.8px;top:107.5px;width:0.8px;height:1.8px;background:#8a8a8a;"></div>
<span class="t" style="left:780.2px;top:100px;font-size:6.2px;line-height:8.06px;color:#c8c8c8;transform:scaleX(0.843);transform-origin:0 50%;">1600</span>
<div style="left:800.4px;top:99px;width:0.9px;height:10px;background:#9a9a9a;"></div>
<div style="left:805.9px;top:107.5px;width:0.8px;height:1.8px;background:#8a8a8a;"></div>
<div style="left:811.4px;top:107.5px;width:0.8px;height:1.8px;background:#8a8a8a;"></div>
<div style="left:817.0px;top:107.5px;width:0.8px;height:1.8px;background:#8a8a8a;"></div>
<span class="t" style="left:802.4px;top:100px;font-size:6.2px;line-height:8.06px;color:#c8c8c8;transform:scaleX(0.843);transform-origin:0 50%;">1800</span>
<div style="left:822.5px;top:99px;width:0.9px;height:10px;background:#9a9a9a;"></div>
<div style="left:828.0px;top:107.5px;width:0.8px;height:1.8px;background:#8a8a8a;"></div>
<div style="left:833.6px;top:107.5px;width:0.8px;height:1.8px;background:#8a8a8a;"></div>
<div style="left:839.1px;top:107.5px;width:0.8px;height:1.8px;background:#8a8a8a;"></div>
<span class="t" style="left:824.5px;top:100px;font-size:6.2px;line-height:8.06px;color:#c8c8c8;transform:scaleX(0.843);transform-origin:0 50%;">2000</span>
<div style="left:844.6px;top:99px;width:0.9px;height:10px;background:#9a9a9a;"></div>
<div style="left:850.2px;top:107.5px;width:0.8px;height:1.8px;background:#8a8a8a;"></div>
<div style="left:855.7px;top:107.5px;width:0.8px;height:1.8px;background:#8a8a8a;"></div>
<div style="left:861.3px;top:107.5px;width:0.8px;height:1.8px;background:#8a8a8a;"></div>
<span class="t" style="left:846.6px;top:100px;font-size:6.2px;line-height:8.06px;color:#c8c8c8;transform:scaleX(0.843);transform-origin:0 50%;">2200</span>
<div style="left:866.8px;top:99px;width:0.9px;height:10px;background:#9a9a9a;"></div>
<div style="left:872.3px;top:107.5px;width:0.8px;height:1.8px;background:#8a8a8a;"></div>
<div style="left:877.9px;top:107.5px;width:0.8px;height:1.8px;background:#8a8a8a;"></div>
<div style="left:883.4px;top:107.5px;width:0.8px;height:1.8px;background:#8a8a8a;"></div>
<span class="t" style="left:868.8px;top:100px;font-size:6.2px;line-height:8.06px;color:#c8c8c8;transform:scaleX(0.843);transform-origin:0 50%;">2400</span>
<div style="left:888.9px;top:99px;width:0.9px;height:10px;background:#9a9a9a;"></div>
<div style="left:894.5px;top:107.5px;width:0.8px;height:1.8px;background:#8a8a8a;"></div>
<div style="left:900.0px;top:107.5px;width:0.8px;height:1.8px;background:#8a8a8a;"></div>
<div style="left:905.6px;top:107.5px;width:0.8px;height:1.8px;background:#8a8a8a;"></div>
<span class="t" style="left:890.9px;top:100px;font-size:6.2px;line-height:8.06px;color:#c8c8c8;transform:scaleX(0.843);transform-origin:0 50%;">2600</span>
<div style="left:911.1px;top:99px;width:0.9px;height:10px;background:#9a9a9a;"></div>
<div style="left:916.6px;top:107.5px;width:0.8px;height:1.8px;background:#8a8a8a;"></div>
<div style="left:922.2px;top:107.5px;width:0.8px;height:1.8px;background:#8a8a8a;"></div>
<div style="left:927.7px;top:107.5px;width:0.8px;height:1.8px;background:#8a8a8a;"></div>
<span class="t" style="left:913.1px;top:100px;font-size:6.2px;line-height:8.06px;color:#c8c8c8;transform:scaleX(0.843);transform-origin:0 50%;">2800</span>
<div style="left:933.2px;top:99px;width:0.9px;height:10px;background:#9a9a9a;"></div>
<div style="left:938.8px;top:107.5px;width:0.8px;height:1.8px;background:#8a8a8a;"></div>
<div style="left:944.3px;top:107.5px;width:0.8px;height:1.8px;background:#8a8a8a;"></div>
<div style="left:949.9px;top:107.5px;width:0.8px;height:1.8px;background:#8a8a8a;"></div>
<span class="t" style="left:935.2px;top:100px;font-size:6.2px;line-height:8.06px;color:#c8c8c8;transform:scaleX(0.843);transform-origin:0 50%;">3000</span>
<div style="left:955.4px;top:99px;width:0.9px;height:10px;background:#9a9a9a;"></div>
<div style="left:368px;top:108.6px;width:588px;height:0.8px;background:#8a8a8a;"></div>
<div style="left:367.2px;top:98px;width:0.8px;height:207px;background:#8a8a8a;"></div>
<div style="left:362.5px;top:98px;width:0.8px;height:11px;background:#9a9a9a;"></div>
<div style="left:358px;top:103.5px;width:10px;height:0.8px;background:#9a9a9a;"></div>
<div style="left:358px;top:123.6px;width:10px;height:0.9px;background:#9a9a9a;"></div>
<span class="t" style="left:360.24px;top:125px;font-size:5.6px;line-height:7.28px;color:#b4b4b4;">2</span>
<span class="t" style="left:360.24px;top:130px;font-size:5.6px;line-height:7.28px;color:#b4b4b4;">0</span>
<span class="t" style="left:360.24px;top:136px;font-size:5.6px;line-height:7.28px;color:#b4b4b4;">0</span>
<div style="left:366px;top:129.1px;width:1.8px;height:0.8px;background:#8a8a8a;"></div>
<div style="left:366px;top:134.7px;width:1.8px;height:0.8px;background:#8a8a8a;"></div>
<div style="left:366px;top:140.2px;width:1.8px;height:0.8px;background:#8a8a8a;"></div>
<div style="left:358px;top:145.8px;width:10px;height:0.9px;background:#9a9a9a;"></div>
<span class="t" style="left:360.24px;top:147px;font-size:5.6px;line-height:7.28px;color:#b4b4b4;">4</span>
<span class="t" style="left:360.24px;top:152px;font-size:5.6px;line-height:7.28px;color:#b4b4b4;">0</span>
<span class="t" style="left:360.24px;top:158px;font-size:5.6px;line-height:7.28px;color:#b4b4b4;">0</span>
<div style="left:366px;top:151.3px;width:1.8px;height:0.8px;background:#8a8a8a;"></div>
<div style="left:366px;top:156.8px;width:1.8px;height:0.8px;background:#8a8a8a;"></div>
<div style="left:366px;top:162.4px;width:1.8px;height:0.8px;background:#8a8a8a;"></div>
<div style="left:358px;top:167.9px;width:10px;height:0.9px;background:#9a9a9a;"></div>
<span class="t" style="left:360.24px;top:169px;font-size:5.6px;line-height:7.28px;color:#b4b4b4;">6</span>
<span class="t" style="left:360.24px;top:175px;font-size:5.6px;line-height:7.28px;color:#b4b4b4;">0</span>
<span class="t" style="left:360.24px;top:180px;font-size:5.6px;line-height:7.28px;color:#b4b4b4;">0</span>
<div style="left:366px;top:173.4px;width:1.8px;height:0.8px;background:#8a8a8a;"></div>
<div style="left:366px;top:179.0px;width:1.8px;height:0.8px;background:#8a8a8a;"></div>
<div style="left:366px;top:184.5px;width:1.8px;height:0.8px;background:#8a8a8a;"></div>
<div style="left:358px;top:190.0px;width:10px;height:0.9px;background:#9a9a9a;"></div>
<span class="t" style="left:360.24px;top:191px;font-size:5.6px;line-height:7.28px;color:#b4b4b4;">8</span>
<span class="t" style="left:360.24px;top:197px;font-size:5.6px;line-height:7.28px;color:#b4b4b4;">0</span>
<span class="t" style="left:360.24px;top:202px;font-size:5.6px;line-height:7.28px;color:#b4b4b4;">0</span>
<div style="left:366px;top:195.6px;width:1.8px;height:0.8px;background:#8a8a8a;"></div>
<div style="left:366px;top:201.1px;width:1.8px;height:0.8px;background:#8a8a8a;"></div>
<div style="left:366px;top:206.7px;width:1.8px;height:0.8px;background:#8a8a8a;"></div>
<div style="left:358px;top:212.2px;width:10px;height:0.9px;background:#9a9a9a;"></div>
<span class="t" style="left:360.24px;top:213px;font-size:5.6px;line-height:7.28px;color:#b4b4b4;">1</span>
<span class="t" style="left:360.24px;top:218px;font-size:5.6px;line-height:7.28px;color:#b4b4b4;">0</span>
<span class="t" style="left:360.24px;top:223px;font-size:5.6px;line-height:7.28px;color:#b4b4b4;">0</span>
<span class="t" style="left:360.24px;top:228px;font-size:5.6px;line-height:7.28px;color:#b4b4b4;">0</span>
<div style="left:366px;top:217.7px;width:1.8px;height:0.8px;background:#8a8a8a;"></div>
<div style="left:366px;top:223.3px;width:1.8px;height:0.8px;background:#8a8a8a;"></div>
<div style="left:366px;top:228.8px;width:1.8px;height:0.8px;background:#8a8a8a;"></div>
<div style="left:358px;top:234.3px;width:10px;height:0.9px;background:#9a9a9a;"></div>
<span class="t" style="left:360.24px;top:235px;font-size:5.6px;line-height:7.28px;color:#b4b4b4;">1</span>
<span class="t" style="left:360.24px;top:240px;font-size:5.6px;line-height:7.28px;color:#b4b4b4;">2</span>
<span class="t" style="left:360.24px;top:245px;font-size:5.6px;line-height:7.28px;color:#b4b4b4;">0</span>
<span class="t" style="left:360.24px;top:250px;font-size:5.6px;line-height:7.28px;color:#b4b4b4;">0</span>
<div style="left:366px;top:239.9px;width:1.8px;height:0.8px;background:#8a8a8a;"></div>
<div style="left:366px;top:245.4px;width:1.8px;height:0.8px;background:#8a8a8a;"></div>
<div style="left:366px;top:251.0px;width:1.8px;height:0.8px;background:#8a8a8a;"></div>
<div style="left:358px;top:256.5px;width:10px;height:0.9px;background:#9a9a9a;"></div>
<span class="t" style="left:360.24px;top:258px;font-size:5.6px;line-height:7.28px;color:#b4b4b4;">1</span>
<span class="t" style="left:360.24px;top:263px;font-size:5.6px;line-height:7.28px;color:#b4b4b4;">4</span>
<span class="t" style="left:360.24px;top:267px;font-size:5.6px;line-height:7.28px;color:#b4b4b4;">0</span>
<span class="t" style="left:360.24px;top:272px;font-size:5.6px;line-height:7.28px;color:#b4b4b4;">0</span>
<div style="left:366px;top:262.0px;width:1.8px;height:0.8px;background:#8a8a8a;"></div>
<div style="left:366px;top:267.6px;width:1.8px;height:0.8px;background:#8a8a8a;"></div>
<div style="left:366px;top:273.1px;width:1.8px;height:0.8px;background:#8a8a8a;"></div>
<div style="left:358px;top:278.6px;width:10px;height:0.9px;background:#9a9a9a;"></div>
<span class="t" style="left:360.24px;top:280px;font-size:5.6px;line-height:7.28px;color:#b4b4b4;">1</span>
<span class="t" style="left:360.24px;top:285px;font-size:5.6px;line-height:7.28px;color:#b4b4b4;">6</span>
<span class="t" style="left:360.24px;top:290px;font-size:5.6px;line-height:7.28px;color:#b4b4b4;">0</span>
<span class="t" style="left:360.24px;top:294px;font-size:5.6px;line-height:7.28px;color:#b4b4b4;">0</span>
<div style="left:366px;top:284.2px;width:1.8px;height:0.8px;background:#8a8a8a;"></div>
<div style="left:366px;top:289.7px;width:1.8px;height:0.8px;background:#8a8a8a;"></div>
<div style="left:366px;top:295.3px;width:1.8px;height:0.8px;background:#8a8a8a;"></div>
<div style="left:358px;top:300.8px;width:10px;height:0.9px;background:#9a9a9a;"></div>
<div style="left:672.5px;top:98px;width:0.9px;height:10px;background:#5a78c8;"></div>
<div style="left:358px;top:179.5px;width:10px;height:0.9px;background:#5a78c8;"></div>
<div style="left:601.3px;top:109.3px;width:120px;height:195.5px;background:#ffffff;"></div>
<div style="left:601.3px;top:258px;width:120px;height:46.8px;background:linear-gradient(#ffffff,#f6f6f7 35%,#eeeeef 70%,#ebebed);"></div>
<div style="left:357px;top:305px;width:599.1px;height:17.2px;background:#1e1e1e;"></div>
<div style="left:420.5px;top:310px;width:0.8px;height:11px;background:#2e2e2e;"></div>
<div style="left:493.5px;top:310px;width:0.8px;height:11px;background:#2e2e2e;"></div>
<div style="left:362px;top:309.8px;width:52px;height:11.6px;background:#161616;border-radius:2px;"></div>
<span class="t" style="left:369px;top:312px;font-size:8.2px;line-height:10.66px;color:#d8d8d8;transform:scaleX(0.840);transform-origin:0 50%;">16.7%</span>
<svg style="left:402.5px;top:313.8px;" width="8.0" height="5.0" viewBox="0 0 8 5"><path d="M1 0.8 L4 3.8 L7 0.8" fill="none" stroke="#d8d8d8" stroke-width="1.3"/></svg>
<div style="left:428px;top:309.8px;width:58px;height:11.6px;background:#161616;border-radius:2px;"></div>
<span class="t" style="left:434px;top:312px;font-size:8.2px;line-height:10.66px;color:#d8d8d8;transform:scaleX(0.900);transform-origin:0 50%;">Quarter</span>
<svg style="left:474.5px;top:313.8px;" width="8.0" height="5.0" viewBox="0 0 8 5"><path d="M1 0.8 L4 3.8 L7 0.8" fill="none" stroke="#d8d8d8" stroke-width="1.3"/></svg>
<svg style="left:500.5px;top:310px;" width="12" height="12" viewBox="0 0 12 12"><rect x="1.5" y="1.5" width="8" height="7.5" fill="none" stroke="#c4c4c4" stroke-width="1"/><path d="M5.5 3 V7.5 M3.2 5.2 H7.8" stroke="#c4c4c4" stroke-width="1"/><path d="M8 9.5 L11 11.5 L9.5 8Z" fill="#c4c4c4"/></svg>
<svg style="left:516.5px;top:310px;" width="12" height="12" viewBox="0 0 12 12"><rect x="1.5" y="2" width="9" height="8" fill="none" stroke="#c4c4c4" stroke-width="1"/><rect x="3.5" y="4" width="2.2" height="2" fill="#c4c4c4"/><rect x="6.3" y="6" width="2.2" height="2" fill="#c4c4c4"/><rect x="6.3" y="4" width="2.2" height="2" fill="#666"/><rect x="3.5" y="6" width="2.2" height="2" fill="#666"/></svg>
<svg style="left:532.5px;top:310px;" width="12" height="12" viewBox="0 0 12 12"><path d="M2 9.5 V5 L5 2.5 H10 V9.5 Z" fill="none" stroke="#c4c4c4" stroke-width="1"/><path d="M0.5 9.5 H11.5" stroke="#c4c4c4" stroke-width="1"/></svg>
<svg style="left:548.5px;top:310px;" width="12" height="12" viewBox="0 0 12 12"><rect x="1.5" y="2" width="9" height="8" rx="1" fill="none" stroke="#c4c4c4" stroke-width="1"/><rect x="4" y="4.5" width="5" height="3.5" fill="#c4c4c4"/></svg>
<svg style="left:564.5px;top:310px;" width="12" height="12" viewBox="0 0 12 12"><rect x="1.5" y="2" width="9" height="7" fill="none" stroke="#c4c4c4" stroke-width="1" stroke-dasharray="2.5 1.2"/><path d="M6 0.5 V4 M6 7 V10.5" stroke="#c4c4c4" stroke-width="1"/><path d="M9.5 10 L11.5 12 H9.5Z" fill="#c4c4c4"/></svg>
<div style="left:697px;top:309.8px;width:47px;height:11.6px;background:#161616;border-radius:2px;"></div>
<span class="t" style="left:704px;top:312px;font-size:8.2px;line-height:10.66px;color:#d8d8d8;transform:scaleX(0.866);transform-origin:0 50%;">0:00:33:53</span>
<div style="left:757px;top:309.8px;width:56px;height:11.6px;background:#161616;border-radius:2px;"></div>
<svg style="left:763px;top:310px;" width="12" height="12" viewBox="0 0 12 12"><path d="M5 1 L9 3 V7.5 L5 9.5 L1 7.5 V3 Z M1 3 L5 5 L9 3 M5 5 V9.5" fill="none" stroke="#c4c4c4" stroke-width="0.9"/><path d="M9 7 L7.5 10 H9.3 L8.6 12 L11 8.8 H9.4 L10.2 7Z" fill="#c4c4c4"/></svg>
<span class="t" style="left:778.5px;top:312px;font-size:8.2px;line-height:10.66px;color:#d8d8d8;transform:scaleX(0.902);transform-origin:0 50%;">Draft 3D</span>
<svg style="left:827px;top:310px;" width="12" height="12" viewBox="0 0 12 12"><path d="M2 8 L4 3 H8 L10 8 Z M1 10 H11 M6 3 V8" fill="none" stroke="#5a5a5a" stroke-width="1"/></svg>
<svg style="left:843px;top:310px;" width="12" height="12" viewBox="0 0 12 12"><rect x="1.5" y="2" width="9" height="6" fill="none" stroke="#6a5050" stroke-width="1"/><path d="M6 8 V11 M3 11 H9" stroke="#5a5a5a" stroke-width="1"/></svg>
<div style="left:868px;top:309.8px;width:60px;height:11.6px;background:#161616;border-radius:2px;"></div>
<span class="t" style="left:874px;top:312px;font-size:8.2px;line-height:10.66px;color:#d8d8d8;transform:scaleX(0.856);transform-origin:0 50%;">Classic 3D</span>
<svg style="left:915.5px;top:313.8px;" width="8.0" height="5.0" viewBox="0 0 8 5"><path d="M1 0.8 L4 3.8 L7 0.8" fill="none" stroke="#d8d8d8" stroke-width="1.3"/></svg>
<div style="left:940px;top:309.8px;width:18px;height:11.6px;background:#161616;border-radius:2px;"></div>
<span class="t" style="left:946px;top:312px;font-size:8.2px;line-height:10.66px;color:#d8d8d8;transform:scaleX(0.929);transform-origin:0 50%;">Act</span>
<span class="t" style="left:967.5px;top:60px;font-size:8.4px;line-height:10.92px;color:#f0f0f0;transform:scaleX(0.819);transform-origin:0 50%;-webkit-text-stroke:0.22px #fff;">Effects &amp; Presets</span>
<div style="left:1027px;top:62.3px;width:5.2px;height:5.6px;background:#585858;border-radius:0.5px;"></div>
<div style="left:963.5px;top:74px;width:109px;height:13.5px;background:#151515;border-radius:2px;"></div>
<svg style="left:965px;top:76px;" width="12" height="10" viewBox="0 0 12 10"><circle cx="4" cy="4" r="2.6" fill="none" stroke="#c8c8c8" stroke-width="1"/><path d="M6 6 L8.3 8.3" stroke="#c8c8c8" stroke-width="1.2"/><path d="M8.3 4.5 L9.8 6 L11.3 4.5" fill="none" stroke="#c8c8c8" stroke-width="0.8"/></svg>
<span class="t" style="left:981.5px;top:76px;font-size:8.4px;line-height:10.92px;color:#b9b562;transform:scaleX(0.785);transform-origin:0 50%;">dro</span>
<svg style="left:1062.2px;top:76.9px;" width="6.6" height="6.6" viewBox="0 0 6.6 6.6"><path d="M1 1 L5.6 5.6 M5.6 1 L1 5.6" stroke="#e6e6e6" stroke-width="1.2"/></svg>
<svg style="left:962.3px;top:92.99999999999999px;" width="6.4" height="4.0" viewBox="0 0 8 5"><path d="M1 0.8 L4 3.8 L7 0.8" fill="none" stroke="#d8d8d8" stroke-width="1.4"/></svg>
<span class="t" style="left:970.5px;top:90px;font-size:8.4px;line-height:10.92px;color:#dcdcdc;transform:scaleX(0.855);transform-origin:0 50%;">* Animation Presets</span>
<svg style="left:973.3px;top:103.99999999999999px;" width="6.4" height="4.0" viewBox="0 0 8 5"><path d="M1 0.8 L4 3.8 L7 0.8" fill="none" stroke="#d8d8d8" stroke-width="1.4"/></svg>
<svg style="left:981.5px;top:102.19999999999999px;" width="9" height="7.5" viewBox="0 0 9 7.5"><path d="M0.3 0.8 H3.4 L4.2 1.6 H8.7 V7.2 H0.3 Z" fill="#cfcfcf"/></svg>
<span class="t" style="left:994px;top:101px;font-size:8.4px;line-height:10.92px;color:#dcdcdc;transform:scaleX(0.851);transform-origin:0 50%;">Image - Creative</span>
<svg style="left:993.1px;top:112.89999999999999px;" width="8.5" height="8.5" viewBox="0 0 8.5 8.5"><rect x="0.3" y="0.8" width="7.9" height="7.4" rx="0.8" fill="#cfcfcf"/><rect x="2.2" y="0" width="1.2" height="1.6" fill="#cfcfcf"/><rect x="5.1" y="0" width="1.2" height="1.6" fill="#cfcfcf"/><path d="M2.4 3.5 V6.6 M4.25 4.6 V6.6 M6.1 3.5 V6.6 M2.4 3.4 H4.3" stroke="#1e1e1e" stroke-width="0.9" fill="none"/></svg>
<span class="t" style="left:1005.4px;top:112px;font-size:8.4px;line-height:10.92px;color:#dcdcdc;transform:scaleX(0.817);transform-origin:0 50%;">Stacked...hadows</span>
<svg style="left:973.3px;top:127.0px;" width="6.4" height="4.0" viewBox="0 0 8 5"><path d="M1 0.8 L4 3.8 L7 0.8" fill="none" stroke="#d8d8d8" stroke-width="1.4"/></svg>
<svg style="left:981.5px;top:125.19999999999999px;" width="9" height="7.5" viewBox="0 0 9 7.5"><path d="M0.3 0.8 H3.4 L4.2 1.6 H8.7 V7.2 H0.3 Z" fill="#cfcfcf"/></svg>
<span class="t" style="left:994px;top:124px;font-size:8.4px;line-height:10.92px;color:#dcdcdc;transform:scaleX(0.814);transform-origin:0 50%;">Legacy</span>
<svg style="left:993.2px;top:136.0px;" width="8.5" height="8.5" viewBox="0 0 8.5 8.5"><rect x="0.3" y="0.8" width="7.9" height="7.4" rx="0.8" fill="#cfcfcf"/><rect x="2.2" y="0" width="1.2" height="1.6" fill="#cfcfcf"/><rect x="5.1" y="0" width="1.2" height="1.6" fill="#cfcfcf"/><path d="M2.4 3.5 V6.6 M4.25 4.6 V6.6 M6.1 3.5 V6.6 M2.4 3.4 H4.3" stroke="#1e1e1e" stroke-width="0.9" fill="none"/></svg>
<span class="t" style="left:1005.5px;top:135px;font-size:8.4px;line-height:10.92px;color:#dcdcdc;transform:scaleX(0.859);transform-origin:0 50%;">Drop Bounce</span>
<svg style="left:973.3px;top:149.4px;" width="6.4" height="4.0" viewBox="0 0 8 5"><path d="M1 0.8 L4 3.8 L7 0.8" fill="none" stroke="#d8d8d8" stroke-width="1.4"/></svg>
<svg style="left:981.5px;top:147.6px;" width="9" height="7.5" viewBox="0 0 9 7.5"><path d="M0.3 0.8 H3.4 L4.2 1.6 H8.7 V7.2 H0.3 Z" fill="#cfcfcf"/></svg>
<span class="t" style="left:994px;top:146px;font-size:8.4px;line-height:10.92px;color:#dcdcdc;transform:scaleX(0.879);transform-origin:0 50%;">Text</span>
<svg style="left:984.8px;top:160.8px;" width="6.4" height="4.0" viewBox="0 0 8 5"><path d="M1 0.8 L4 3.8 L7 0.8" fill="none" stroke="#d8d8d8" stroke-width="1.4"/></svg>
<svg style="left:993.0px;top:159.0px;" width="9" height="7.5" viewBox="0 0 9 7.5"><path d="M0.3 0.8 H3.4 L4.2 1.6 H8.7 V7.2 H0.3 Z" fill="#cfcfcf"/></svg>
<span class="t" style="left:1005.5px;top:158px;font-size:8.4px;line-height:10.92px;color:#dcdcdc;transform:scaleX(0.874);transform-origin:0 50%;">Animate In</span>
<svg style="left:1004.7px;top:169.79999999999998px;" width="8.5" height="8.5" viewBox="0 0 8.5 8.5"><rect x="0.3" y="0.8" width="7.9" height="7.4" rx="0.8" fill="#cfcfcf"/><rect x="2.2" y="0" width="1.2" height="1.6" fill="#cfcfcf"/><rect x="5.1" y="0" width="1.2" height="1.6" fill="#cfcfcf"/><path d="M2.4 3.5 V6.6 M4.25 4.6 V6.6 M6.1 3.5 V6.6 M2.4 3.4 H4.3" stroke="#1e1e1e" stroke-width="0.9" fill="none"/></svg>
<span class="t" style="left:1017px;top:169px;font-size:8.4px;line-height:10.92px;color:#dcdcdc;transform:scaleX(0.829);transform-origin:0 50%;">Drop In...acter</span>
<svg style="left:973.3px;top:183.3px;" width="6.4" height="4.0" viewBox="0 0 8 5"><path d="M1 0.8 L4 3.8 L7 0.8" fill="none" stroke="#d8d8d8" stroke-width="1.4"/></svg>
<svg style="left:981.5px;top:181.5px;" width="9" height="7.5" viewBox="0 0 9 7.5"><path d="M0.3 0.8 H3.4 L4.2 1.6 H8.7 V7.2 H0.3 Z" fill="#cfcfcf"/></svg>
<span class="t" style="left:994px;top:180px;font-size:8.4px;line-height:10.92px;color:#dcdcdc;transform:scaleX(0.856);transform-origin:0 50%;">Transit... - Movement</span>
<svg style="left:992.7px;top:192.4px;" width="8.5" height="8.5" viewBox="0 0 8.5 8.5"><rect x="0.3" y="0.8" width="7.9" height="7.4" rx="0.8" fill="#cfcfcf"/><rect x="2.2" y="0" width="1.2" height="1.6" fill="#cfcfcf"/><rect x="5.1" y="0" width="1.2" height="1.6" fill="#cfcfcf"/><path d="M2.4 3.5 V6.6 M4.25 4.6 V6.6 M6.1 3.5 V6.6 M2.4 3.4 H4.3" stroke="#1e1e1e" stroke-width="0.9" fill="none"/></svg>
<span class="t" style="left:1005px;top:192px;font-size:8.4px;line-height:10.92px;color:#dcdcdc;transform:scaleX(0.864);transform-origin:0 50%;">Slide - drop</span>
<svg style="left:962.3px;top:205.9px;" width="6.4" height="4.0" viewBox="0 0 8 5"><path d="M1 0.8 L4 3.8 L7 0.8" fill="none" stroke="#d8d8d8" stroke-width="1.4"/></svg>
<span class="t" style="left:969.5px;top:203px;font-size:8.4px;line-height:10.92px;color:#dcdcdc;transform:scaleX(0.827);transform-origin:0 50%;">Expression Controls</span>
<svg style="left:981.7px;top:215.0px;" width="8.5" height="8.5" viewBox="0 0 8.5 8.5"><rect x="0.3" y="0.8" width="7.9" height="7.4" rx="0.8" fill="#cfcfcf"/><rect x="2.2" y="0" width="1.2" height="1.6" fill="#cfcfcf"/><rect x="5.1" y="0" width="1.2" height="1.6" fill="#cfcfcf"/><path d="M2.4 3.5 V6.6 M4.25 4.6 V6.6 M6.1 3.5 V6.6 M2.4 3.4 H4.3" stroke="#1e1e1e" stroke-width="0.9" fill="none"/></svg>
<span class="t" style="left:994px;top:214px;font-size:8.4px;line-height:10.92px;color:#dcdcdc;transform:scaleX(0.871);transform-origin:0 50%;">Dropdow...nu Control</span>
<svg style="left:962.3px;top:228.6px;" width="6.4" height="4.0" viewBox="0 0 8 5"><path d="M1 0.8 L4 3.8 L7 0.8" fill="none" stroke="#d8d8d8" stroke-width="1.4"/></svg>
<span class="t" style="left:969.5px;top:226px;font-size:8.4px;line-height:10.92px;color:#dcdcdc;transform:scaleX(0.830);transform-origin:0 50%;">Generate</span>
<svg style="left:981.7px;top:237.6px;" width="8.5" height="8.5" viewBox="0 0 8.5 8.5"><rect x="0.3" y="0.8" width="7.9" height="7.4" rx="0.8" fill="#cfcfcf"/><rect x="2.2" y="0" width="1.2" height="1.6" fill="#cfcfcf"/><rect x="5.1" y="0" width="1.2" height="1.6" fill="#cfcfcf"/><path d="M2.4 3.5 V6.6 M4.25 4.6 V6.6 M6.1 3.5 V6.6 M2.4 3.4 H4.3" stroke="#1e1e1e" stroke-width="0.9" fill="none"/></svg>
<span class="t" style="left:994px;top:237px;font-size:8.4px;line-height:10.92px;color:#dcdcdc;transform:scaleX(0.843);transform-origin:0 50%;">Eyedropper Fill</span>
<svg style="left:962.3px;top:251.3px;" width="6.4" height="4.0" viewBox="0 0 8 5"><path d="M1 0.8 L4 3.8 L7 0.8" fill="none" stroke="#d8d8d8" stroke-width="1.4"/></svg>
<span class="t" style="left:969.5px;top:248px;font-size:8.4px;line-height:10.92px;color:#dcdcdc;transform:scaleX(0.834);transform-origin:0 50%;">Perspective</span>
<div style="left:959px;top:258.5px;width:107px;height:11.5px;background:#464646;"></div>
<svg style="left:981.5px;top:260.5px;" width="8.5" height="8.5" viewBox="0 0 8.5 8.5"><rect x="0.3" y="0.8" width="7.9" height="7.4" rx="0.8" fill="#cfcfcf"/><rect x="2.2" y="0" width="1.2" height="1.6" fill="#cfcfcf"/><rect x="5.1" y="0" width="1.2" height="1.6" fill="#cfcfcf"/><path d="M2.4 3.5 V6.6 M4.25 4.6 V6.6 M6.1 3.5 V6.6 M2.4 3.4 H4.3" stroke="#1e1e1e" stroke-width="0.9" fill="none"/></svg>
<svg style="left:993.5px;top:260.5px;" width="8.5" height="8.5" viewBox="0 0 8.5 8.5"><rect x="0.3" y="0.8" width="7.9" height="7.4" rx="0.8" fill="#cfcfcf"/><rect x="2.2" y="0" width="1.2" height="1.6" fill="#cfcfcf"/><rect x="5.1" y="0" width="1.2" height="1.6" fill="#cfcfcf"/><path d="M2.4 3.5 V6.6 M4.25 4.6 V6.6 M6.1 3.5 V6.6 M2.4 3.4 H4.3" stroke="#1e1e1e" stroke-width="0.9" fill="none"/></svg>
<div style="left:1004.5px;top:259.5px;width:50px;height:9.5px;background:#d9d9d9;"></div>
<span class="t" style="left:1006px;top:260px;font-size:8.4px;line-height:10.92px;color:#111111;transform:scaleX(0.867);transform-origin:0 50%;">Drop Shadow</span>
<svg style="left:1050px;top:311.5px;" width="9" height="9" viewBox="0 0 9 9"><path d="M2 1 H8.5 V8.5 H0.5 V2.5 Z" fill="#e0e0e0"/><path d="M0.5 2.5 H2 V1" fill="none" stroke="#1e1e1e" stroke-width="0.6"/></svg>
<span class="t" style="left:1087.8px;top:60px;font-size:8.4px;line-height:10.92px;color:#ffffff;transform:scaleX(0.872);transform-origin:0 50%;-webkit-text-stroke:0.22px #fff;">Info</span>
<div style="left:1106.5px;top:62.3px;width:5.2px;height:5.6px;background:#585858;border-radius:0.5px;"></div>
<div style="left:1086.5px;top:70.7px;width:25.5px;height:1.2px;background:#dcdcdc;"></div>
<span class="t" style="left:1127px;top:60px;font-size:8.4px;line-height:10.92px;color:#c6c6c6;transform:scaleX(0.873);transform-origin:0 50%;">Preview</span>
<span class="t" style="left:1181px;top:60px;font-size:8.4px;line-height:10.92px;color:#c6c6c6;transform:scaleX(0.864);transform-origin:0 50%;">Audio</span>
<div style="left:1085.5px;top:84.5px;width:13px;height:6.5px;background:#060606;"></div>
<span class="t" style="left:1102px;top:76px;font-size:8px;line-height:10.4px;color:#c6c6c6;transform:scaleX(0.782);transform-origin:0 50%;">R :</span>
<span class="t" style="left:1162.5px;top:76px;font-size:8px;line-height:10.4px;color:#c6c6c6;transform:scaleX(0.906);transform-origin:0 50%;">X : 1208</span>
<div style="left:1081px;top:57px;width:199px;height:34px;overflow:hidden;background:none;"><span class="t" style="left:21px;top:29.6px;font-size:8px;line-height:10px;color:#c6c6c6;transform:scaleX(.85);transform-origin:0 50%;">G :</span><span class="t" style="left:81.5px;top:29.6px;font-size:8px;line-height:10px;color:#c6c6c6;transform:scaleX(.82);transform-origin:0 50%;">Y : 2256</span></div>
<span class="t" style="left:1081px;top:97px;font-size:8.4px;line-height:10.92px;color:#c6c6c6;transform:scaleX(0.727);transform-origin:0 50%;">rties</span>
<span class="t" style="left:1120.5px;top:97px;font-size:8.4px;line-height:10.92px;color:#c6c6c6;transform:scaleX(0.840);transform-origin:0 50%;">Libraries</span>
<span class="t" style="left:1176px;top:97px;font-size:8.4px;line-height:10.92px;color:#c6c6c6;transform:scaleX(0.830);transform-origin:0 50%;">Brushes</span>
<span class="t" style="left:1229px;top:97px;font-size:8.4px;line-height:10.92px;color:#ffffff;transform:scaleX(0.890);transform-origin:0 50%;-webkit-text-stroke:0.22px #fff;">Paint</span>
<div style="left:1253px;top:99.7px;width:5.5px;height:1.2px;background:#9a9a9a;"></div>
<div style="left:1253px;top:101.7px;width:5.5px;height:1.2px;background:#9a9a9a;"></div>
<div style="left:1253px;top:103.7px;width:5.5px;height:1.2px;background:#9a9a9a;"></div>
<div style="left:1228px;top:108px;width:29px;height:1.2px;background:#dcdcdc;"></div>
<svg style="left:1267px;top:98px;" width="10" height="9" viewBox="0 0 10 9"><path d="M1.5 1.5 L4.5 4.5 L1.5 7.5 M5.5 1.5 L8.5 4.5 L5.5 7.5" fill="none" stroke="#d0d0d0" stroke-width="1.2"/></svg>
<span class="t" style="left:1086.77px;top:117px;font-size:8.4px;line-height:10.92px;color:#c6c6c6;transform:scaleX(0.878);transform-origin:100% 50%;">Opacity:</span>
<span class="t" style="left:1097.48px;top:128px;font-size:8.4px;line-height:10.92px;color:#c6c6c6;transform:scaleX(0.899);transform-origin:100% 50%;">Flow:</span>
<span class="t" style="left:1121px;top:117px;font-size:8.4px;line-height:10.92px;color:#3f8fe8;transform:scaleX(0.858);transform-origin:0 50%;">100</span>
<span class="t" style="left:1134.5px;top:117px;font-size:8.4px;line-height:10.92px;color:#c6c6c6;transform:scaleX(0.939);transform-origin:0 50%;">%</span>
<span class="t" style="left:1121px;top:128px;font-size:8.4px;line-height:10.92px;color:#3f8fe8;transform:scaleX(0.858);transform-origin:0 50%;">100</span>
<span class="t" style="left:1134.5px;top:128px;font-size:8.4px;line-height:10.92px;color:#c6c6c6;transform:scaleX(0.939);transform-origin:0 50%;">%</span>
<div style="left:1158px;top:118.5px;width:3px;height:3px;background:#b0b0b0;border-radius:50%;"></div>
<span class="t" style="left:1156.72px;top:128px;font-size:6.8px;line-height:8.84px;color:#d0d0d0;">13</span>
<div style="left:1194px;top:125.5px;width:16.5px;height:16px;background:#ffffff;"></div>
<div style="left:1184.5px;top:116.5px;width:17.5px;height:17px;background:#ffffff;"></div>
<div style="left:1185.8px;top:117.8px;width:15px;height:14.5px;background:#e8121c;"></div>
<svg style="left:1203.5px;top:115.5px;" width="9" height="9" viewBox="0 0 9 9"><path d="M2 3 Q6 1.5 6.5 6" fill="none" stroke="#e6e6e6" stroke-width="1.2"/><path d="M0.8 1.6 L1.4 4.6 L4 3Z M4.8 5.6 L8.2 5.6 L6.5 8.2Z" fill="#e6e6e6"/></svg>
<svg style="left:1183px;top:134.5px;" width="8" height="8" viewBox="0 0 8 8"><rect x="2.8" y="2.8" width="4.6" height="4.6" fill="#fff"/><rect x="0.6" y="0.6" width="4.6" height="4.6" fill="#1e1e1e" stroke="#e6e6e6" stroke-width="1"/></svg>
<span class="t" style="left:1094.22px;top:146px;font-size:8.4px;line-height:10.92px;color:#c6c6c6;transform:scaleX(0.881);transform-origin:100% 50%;">Mode:</span>
<div style="left:1121px;top:143.5px;width:73px;height:14px;background:#141414;border-radius:2px;"></div>
<span class="t" style="left:1125px;top:146px;font-size:8.4px;line-height:10.92px;color:#e6e6e6;transform:scaleX(0.889);transform-origin:0 50%;">Normal</span>
<svg style="left:1183.5px;top:148.0px;" width="8.0" height="5.0" viewBox="0 0 8 5"><path d="M1 0.8 L4 3.8 L7 0.8" fill="none" stroke="#e0e0e0" stroke-width="1.3"/></svg>
<svg style="left:1197px;top:144px;" width="13" height="13" viewBox="0 0 13 13"><path d="M8.6 1.2 Q10 0 11.2 1.2 Q12.4 2.6 11.2 3.8 L9.6 5.4 L7 2.8Z" fill="#b8b8b8"/><path d="M7.4 4 L9 5.6 L3.4 11.2 L1.6 11.6 L1.8 9.6Z" fill="none" stroke="#b8b8b8" stroke-width="0.9"/></svg>
<span class="t" style="left:1079.78px;top:161px;font-size:8.4px;line-height:10.92px;color:#c6c6c6;transform:scaleX(0.835);transform-origin:100% 50%;">Channels:</span>
<div style="left:1121px;top:159px;width:73px;height:14px;background:#141414;border-radius:2px;"></div>
<span class="t" style="left:1125px;top:161px;font-size:8.4px;line-height:10.92px;color:#e6e6e6;transform:scaleX(0.821);transform-origin:0 50%;">RGBA</span>
<svg style="left:1183.5px;top:163.5px;" width="8.0" height="5.0" viewBox="0 0 8 5"><path d="M1 0.8 L4 3.8 L7 0.8" fill="none" stroke="#e0e0e0" stroke-width="1.3"/></svg>
<span class="t" style="left:1083.52px;top:176px;font-size:8.4px;line-height:10.92px;color:#c6c6c6;transform:scaleX(0.868);transform-origin:100% 50%;">Duration:</span>
<div style="left:1121px;top:174.2px;width:73px;height:14px;background:#141414;border-radius:2px;"></div>
<span class="t" style="left:1125px;top:177px;font-size:8.4px;line-height:10.92px;color:#e6e6e6;transform:scaleX(0.865);transform-origin:0 50%;">Constant</span>
<svg style="left:1183.5px;top:178.7px;" width="8.0" height="5.0" viewBox="0 0 8 5"><path d="M1 0.8 L4 3.8 L7 0.8" fill="none" stroke="#e0e0e0" stroke-width="1.3"/></svg>
<span class="t" style="left:1198.5px;top:176px;font-size:8.4px;line-height:10.92px;color:#5a5a5a;transform:scaleX(0.773);transform-origin:0 50%;">1  f</span>
<span class="t" style="left:1092.78px;top:191px;font-size:8.4px;line-height:10.92px;color:#6e6e6e;transform:scaleX(0.805);transform-origin:100% 50%;">Erase:</span>
<div style="left:1121px;top:189.5px;width:92px;height:14px;background:#2c2c2c;border-radius:2px;"></div>
<span class="t" style="left:1125px;top:192px;font-size:8.4px;line-height:10.92px;color:#6a6a6a;transform:scaleX(0.821);transform-origin:0 50%;">Layer Source &amp; Paint</span>
<svg style="left:1202.5px;top:194.0px;" width="8.0" height="5.0" viewBox="0 0 8 5"><path d="M1 0.8 L4 3.8 L7 0.8" fill="none" stroke="#707070" stroke-width="1.3"/></svg>
<span class="t" style="left:1089px;top:207px;font-size:8.4px;line-height:10.92px;color:#6e6e6e;transform:scaleX(0.867);transform-origin:0 50%;">Clone Options</span>
<span class="t" style="left:1089.95px;top:221px;font-size:8.4px;line-height:10.92px;color:#6e6e6e;transform:scaleX(0.848);transform-origin:100% 50%;">Preset:</span>
<div style="left:1120.5px;top:218.5px;width:15px;height:15px;background:#363636;border-radius:2px;"></div>
<svg style="left:1122px;top:220.5px;" width="12" height="12" viewBox="0 0 12 12"><path d="M5 2 H8 L7.6 6 H10.4 V8.6 H2.6 V6 H5.4 Z" fill="#8a8a8a"/><rect x="2" y="9.6" width="9" height="1.3" fill="#8a8a8a"/><path d="M1 1 V5 M1 1 H4" stroke="#8a8a8a" stroke-width="0.8" fill="none"/></svg>
<svg style="left:1139px;top:220.5px;" width="12" height="12" viewBox="0 0 12 12"><path d="M5 2 H8 L7.6 6 H10.4 V8.6 H2.6 V6 H5.4 Z" fill="#8a8a8a"/><rect x="2" y="9.6" width="9" height="1.3" fill="#8a8a8a"/><path d="M1 1 V5 M1 1 H4" stroke="#8a8a8a" stroke-width="0.8" fill="none"/></svg>
<svg style="left:1156.5px;top:220.5px;" width="12" height="12" viewBox="0 0 12 12"><path d="M5 2 H8 L7.6 6 H10.4 V8.6 H2.6 V6 H5.4 Z" fill="#8a8a8a"/><rect x="2" y="9.6" width="9" height="1.3" fill="#8a8a8a"/><path d="M1 1 V5 M1 1 H4" stroke="#8a8a8a" stroke-width="0.8" fill="none"/></svg>
<svg style="left:1173.5px;top:220.5px;" width="12" height="12" viewBox="0 0 12 12"><path d="M5 2 H8 L7.6 6 H10.4 V8.6 H2.6 V6 H5.4 Z" fill="#8a8a8a"/><rect x="2" y="9.6" width="9" height="1.3" fill="#8a8a8a"/><path d="M1 1 V5 M1 1 H4" stroke="#8a8a8a" stroke-width="0.8" fill="none"/></svg>
<svg style="left:1190.5px;top:220.5px;" width="12" height="12" viewBox="0 0 12 12"><path d="M5 2 H8 L7.6 6 H10.4 V8.6 H2.6 V6 H5.4 Z" fill="#8a8a8a"/><rect x="2" y="9.6" width="9" height="1.3" fill="#8a8a8a"/><path d="M1 1 V5 M1 1 H4" stroke="#8a8a8a" stroke-width="0.8" fill="none"/></svg>
<span class="t" style="left:1086.62px;top:242px;font-size:8.4px;line-height:10.92px;color:#6e6e6e;transform:scaleX(0.831);transform-origin:100% 50%;">Source:</span>
<div style="left:1121px;top:239.3px;width:92px;height:14px;background:#2c2c2c;border-radius:2px;"></div>
<span class="t" style="left:1125px;top:242px;font-size:8.4px;line-height:10.92px;color:#6a6a6a;transform:scaleX(0.820);transform-origin:0 50%;">Current Layer</span>
<svg style="left:1202.5px;top:243.8px;" width="8.0" height="5.0" viewBox="0 0 8 5"><path d="M1 0.8 L4 3.8 L7 0.8" fill="none" stroke="#707070" stroke-width="1.3"/></svg>
<svg style="left:1088.5px;top:256.5px;" width="9" height="9" viewBox="0 0 9 9"><rect x="0.5" y="0.5" width="8" height="8" rx="1" fill="#8c8c8c"/><path d="M2 4.4 L3.8 6.4 L7 2.2" stroke="#1e1e1e" stroke-width="1.3" fill="none"/></svg>
<span class="t" style="left:1103.5px;top:257px;font-size:8.4px;line-height:10.92px;color:#6e6e6e;transform:scaleX(0.876);transform-origin:0 50%;">Aligned</span>
<svg style="left:1135.0px;top:256.5px;" width="9" height="9" viewBox="0 0 9 9"><rect x="1" y="1" width="7" height="7" rx="1" fill="#0c0c0c" stroke="#9c9c9c" stroke-width="1.2"/></svg>
<span class="t" style="left:1150px;top:257px;font-size:8.4px;line-height:10.92px;color:#6e6e6e;transform:scaleX(0.858);transform-origin:0 50%;">Lock Source Time</span>
<span class="t" style="left:1127px;top:270px;font-size:8.4px;line-height:10.92px;color:#6e6e6e;transform:scaleX(0.871);transform-origin:0 50%;">Offset: 0 ,</span>
<span class="t" style="left:1181px;top:270px;font-size:8.4px;line-height:10.92px;color:#6e6e6e;transform:scaleX(0.856);transform-origin:0 50%;">0</span>
<svg style="left:1205px;top:270.5px;" width="11" height="10" viewBox="0 0 11 10"><path d="M3 3.5 A3.4 3.4 0 1 1 5.5 8.6 H1.5" fill="none" stroke="#a0a0a0" stroke-width="1.1"/><path d="M1 1.6 L1.6 5 L4.8 3.8Z" fill="#a0a0a0"/></svg>
<span class="t" style="left:1089px;top:284px;font-size:8.4px;line-height:10.92px;color:#6e6e6e;transform:scaleX(0.838);transform-origin:0 50%;">Source Time Shift:  0  f</span>
<svg style="left:1088.5px;top:302.0px;" width="9" height="9" viewBox="0 0 9 9"><rect x="1" y="1" width="7" height="7" rx="1" fill="#0c0c0c" stroke="#9c9c9c" stroke-width="1.2"/></svg>
<span class="t" style="left:1103.5px;top:302px;font-size:8.4px;line-height:10.92px;color:#6e6e6e;transform:scaleX(0.852);transform-origin:0 50%;">Clone Source Overlay:  50 %</span>
<svg style="left:1203.5px;top:301px;" width="11" height="11" viewBox="0 0 11 11"><circle cx="4.2" cy="4.2" r="3.2" fill="#8a8a8a"/><circle cx="6.6" cy="6.6" r="3.2" fill="#6a6a6a" stroke="#1e1e1e" stroke-width="0.6"/></svg>
<div style="left:0px;top:324px;width:1280px;height:364px;background:#111111;"></div>
<div style="left:0px;top:322.2px;width:1280px;height:4px;background:#0a0c14;"></div>
<div style="left:1px;top:326.1px;width:1278.5px;height:361.9px;background:#262c3c;"></div>
<div style="left:1px;top:326.1px;width:1278.5px;height:1.1px;background:linear-gradient(90deg,#4a6aa2,#3a6cb8 60%,#2a6cc4);"></div>
<div style="left:1278.2px;top:326.1px;width:1.3px;height:361px;background:#2a6cc4;"></div>
<div style="left:2px;top:327.2px;width:1276.2px;height:360.8px;background:#1f1f1f;"></div>
<svg style="left:3px;top:331px;" width="5" height="8" viewBox="0 0 5 8"><path d="M2.5 1 V7 M1 5.5 L2.5 7 L4 5.5" stroke="#555" fill="none" stroke-width="0.8"/></svg>
<div style="left:17.7px;top:330px;width:6.8px;height:7px;background:#bcb8a4;"></div>
<span class="t" style="left:32px;top:329px;font-size:8.4px;line-height:10.92px;color:#ffffff;transform:scaleX(0.869);transform-origin:0 50%;-webkit-text-stroke:0.22px #fff;">Comp 1</span>
<div style="left:65px;top:331.8px;width:5.5px;height:1.2px;background:#8a8a8a;"></div>
<div style="left:65px;top:333.8px;width:5.5px;height:1.2px;background:#8a8a8a;"></div>
<div style="left:65px;top:335.8px;width:5.5px;height:1.2px;background:#8a8a8a;"></div>
<div style="left:9px;top:340.3px;width:61px;height:1.2px;background:#8e8e8e;"></div>
<div style="left:94.7px;top:330px;width:6.8px;height:7px;background:#bcb8a4;"></div>
<span class="t" style="left:109px;top:329px;font-size:8.4px;line-height:10.92px;color:#c6c6c6;transform:scaleX(0.916);transform-origin:0 50%;">moblie 2</span>
<div style="left:174.2px;top:330px;width:6.8px;height:7px;background:#bcb8a4;"></div>
<span class="t" style="left:188px;top:329px;font-size:8.4px;line-height:10.92px;color:#c6c6c6;transform:scaleX(0.911);transform-origin:0 50%;">07</span>
<div style="left:233.7px;top:330px;width:6.8px;height:7px;background:#bcb8a4;"></div>
<span class="t" style="left:247px;top:329px;font-size:8.4px;line-height:10.92px;color:#c6c6c6;transform:scaleX(0.911);transform-origin:0 50%;">02</span>
<div style="left:293.2px;top:330px;width:6.8px;height:7px;background:#bcb8a4;"></div>
<span class="t" style="left:306.5px;top:329px;font-size:8.4px;line-height:10.92px;color:#c6c6c6;transform:scaleX(0.911);transform-origin:0 50%;">04</span>
<div style="left:352.2px;top:330px;width:6.8px;height:7px;background:#bcb8a4;"></div>
<span class="t" style="left:366px;top:329px;font-size:8.4px;line-height:10.92px;color:#c6c6c6;transform:scaleX(0.911);transform-origin:0 50%;">09</span>
<div style="left:411.7px;top:330px;width:6.8px;height:7px;background:#bcb8a4;"></div>
<span class="t" style="left:425px;top:329px;font-size:8.4px;line-height:10.92px;color:#c6c6c6;transform:scaleX(0.911);transform-origin:0 50%;">08</span>
<div style="left:470.7px;top:330px;width:6.8px;height:7px;background:#bcb8a4;"></div>
<span class="t" style="left:485px;top:329px;font-size:8.4px;line-height:10.92px;color:#c6c6c6;transform:scaleX(0.911);transform-origin:0 50%;">10</span>
<div style="left:530.2px;top:330px;width:6.8px;height:7px;background:#bcb8a4;"></div>
<span class="t" style="left:544px;top:329px;font-size:8.4px;line-height:10.92px;color:#c6c6c6;transform:scaleX(0.911);transform-origin:0 50%;">01</span>
<div style="left:727.2px;top:330px;width:6.8px;height:7px;background:#bcb8a4;"></div>
<span class="t" style="left:741px;top:329px;font-size:8.4px;line-height:10.92px;color:#c6c6c6;transform:scaleX(0.878);transform-origin:0 50%;">Pre-comp 2</span>
<span class="t" style="left:816px;top:329px;font-size:8.4px;line-height:10.92px;color:#c6c6c6;transform:scaleX(0.864);transform-origin:0 50%;">Render Queue</span>
<div style="left:899.7px;top:330px;width:6.8px;height:7px;background:#bcb8a4;"></div>
<span class="t" style="left:914px;top:329px;font-size:8.4px;line-height:10.92px;color:#c6c6c6;transform:scaleX(0.858);transform-origin:0 50%;">15</span>
<span class="t" style="left:9.8px;top:344px;font-size:9.4px;line-height:12.22px;color:#4f9fea;font-weight:700;transform:scaleX(1.025);transform-origin:0 50%;">0:00:33:39</span>
<span class="t" style="left:9px;top:357px;font-size:5.8px;line-height:7.54px;color:#2f65a8;transform:scaleX(1.100);transform-origin:0 50%;">00819 (24.00 fps)</span>
<div style="left:68px;top:346.5px;width:308px;height:13px;background:#131313;border-radius:2px;"></div>
<svg style="left:70px;top:349px;" width="13" height="9" viewBox="0 0 13 9"><circle cx="4" cy="3.8" r="2.5" fill="none" stroke="#c8c8c8" stroke-width="1"/><path d="M5.9 5.7 L8 7.8" stroke="#c8c8c8" stroke-width="1.1"/><path d="M8.4 4.2 L9.8 5.6 L11.2 4.2" fill="none" stroke="#c8c8c8" stroke-width="0.8"/></svg>
<svg style="left:384px;top:347.5px;" width="13" height="12" viewBox="0 0 13 12"><path d="M1 3 H7 M5 3 V7 H11 M8 7 V10 H12" stroke="#d4d4d4" fill="none" stroke-width="1.2"/><rect x="6.5" y="1.8" width="3" height="2.4" fill="#d4d4d4"/><rect x="10" y="5.8" width="2.4" height="2.4" fill="#d4d4d4"/></svg>
<svg style="left:400px;top:347.5px;" width="13" height="12" viewBox="0 0 13 12"><path d="M1 5 Q6.5 0.5 12 5 Z" fill="#d4d4d4"/><path d="M1 5.6 H12 M6.5 5 V10.5 M4 10.5 H9" stroke="#d4d4d4" stroke-width="1.1" fill="none"/></svg>
<svg style="left:416px;top:347.5px;" width="13" height="12" viewBox="0 0 13 12"><rect x="4" y="1" width="8" height="7.5" fill="#d4d4d4"/><rect x="1" y="3.5" width="8" height="7.5" fill="#8f8f8f" stroke="#1f1f1f" stroke-width="0.8"/><rect x="6.5" y="3" width="2.5" height="2.5" fill="#5a5a5a"/></svg>
<div style="left:431px;top:346px;width:15.5px;height:15px;background:#3a3a3a;border-radius:2px;"></div>
<svg style="left:431.8px;top:346.6px;" width="13.799999999999999" height="13.799999999999999" viewBox="0 0 12 12"><g transform="rotate(40 6 6)" fill="none" stroke="#d6d6d6" stroke-width="1.1"><rect x="3.2" y="0.8" width="5.6" height="8" rx="2.8"/><path d="M4.5 2.5 V7 M6 2 V7.5 M7.5 2.5 V7"/><path d="M2.5 8 Q6 12 9.5 8"/></g></svg>
<svg style="left:448px;top:347.5px;" width="13" height="12" viewBox="0 0 13 12"><rect x="1.5" y="2.5" width="10" height="8.5" fill="none" stroke="#d4d4d4" stroke-width="1.1"/><path d="M3.5 1 V3 M9.5 1 V3 M2 4.5 L11 10.5" stroke="#d4d4d4" stroke-width="1" fill="none"/></svg>
<div style="left:2px;top:365.5px;width:466px;height:0.8px;background:#2a2a2a;"></div>
<div style="left:2px;top:379.5px;width:466px;height:1.2px;background:#161616;"></div>
<svg style="left:4.2px;top:369.3px;" width="8.6" height="6" viewBox="0 0 10 7"><path d="M0.5 3.5 Q5 -1 9.5 3.5 Q5 8 0.5 3.5Z" fill="#dcdcdc"/><circle cx="5" cy="3.5" r="1.7" fill="#1a1a1a"/><circle cx="5" cy="3.5" r="0.7" fill="#dcdcdc"/></svg>
<svg style="left:13.5px;top:368.3px;" width="10" height="8" viewBox="0 0 10 8"><path d="M0.5 2.8 H2.4 L5 0.6 V7.4 L2.4 5.2 H0.5Z" fill="#dcdcdc"/><path d="M6.3 2 Q7.6 4 6.3 6 M7.8 0.8 Q9.8 4 7.8 7.2" fill="none" stroke="#dcdcdc" stroke-width="0.8"/></svg>
<div style="left:26.5px;top:370.5px;width:3.6px;height:3.6px;background:#dcdcdc;border-radius:50%;"></div>
<svg style="left:35.0px;top:367.2px;" width="7" height="9" viewBox="0 0 7 9"><rect x="0.4" y="3.8" width="6.2" height="4.8" rx="0.6" fill="#dcdcdc"/><path d="M1.7 3.8 V2.6 Q1.7 0.8 3.5 0.8 Q5.3 0.8 5.3 2.6 V3.8" fill="none" stroke="#dcdcdc" stroke-width="1.1"/><rect x="3" y="5.2" width="1" height="2" fill="#1a1a1a"/></svg>
<svg style="left:54px;top:367.3px;" width="10" height="10" viewBox="0 0 10 10"><path d="M1 1 H5 L9.3 5.3 L5.3 9.3 L1 5Z" fill="#d0d0d0"/><circle cx="3" cy="3" r="0.9" fill="#1f1f1f"/></svg>
<span class="t" style="left:72px;top:368px;font-size:7.5px;line-height:9.75px;color:#9c9c9c;transform:scaleX(0.839);transform-origin:0 50%;font-style:italic;">#</span>
<span class="t" style="left:93px;top:368px;font-size:7.8px;line-height:10.14px;color:#9c9c9c;transform:scaleX(0.776);transform-origin:0 50%;">Source Name</span>
<div style="left:91px;top:378.6px;width:10px;height:1px;background:#4a4a4a;"></div>
<div style="left:56px;top:378.6px;width:10px;height:1px;background:#3a3a3a;"></div>
<svg style="left:179.0px;top:367.8px;" width="9" height="9" viewBox="0 0 9 9"><path d="M1 4.6 Q4.5 -1.5 8 4.6 Z" fill="#dcdcdc"/><path d="M0.3 5.6 H8.7 M4.5 0.8 V8 M2.6 6.5 V8 M6.4 6.5 V8" stroke="#dcdcdc" stroke-width="0.9" fill="none"/></svg>
<svg style="left:189px;top:367.8px;" width="9" height="9" viewBox="0 0 9 9"><circle cx="4.5" cy="4.5" r="1.8" fill="none" stroke="#cfcfcf" stroke-width="0.9"/><path d="M4.5 0.5 V2.4 M4.5 6.6 V8.5 M0.5 4.5 H2.4 M6.6 4.5 H8.5" stroke="#cfcfcf" stroke-width="0.9"/></svg>
<svg style="left:199px;top:367.8px;" width="9" height="9" viewBox="0 0 9 9"><path d="M1.2 1.2 L7.8 7.8" stroke="#cfcfcf" stroke-width="1.1"/></svg>
<span class="t" style="left:209px;top:368px;font-size:8.6px;line-height:11.18px;color:#cfcfcf;font-family:'Liberation Serif', serif;transform:scaleX(1.046);transform-origin:0 50%;font-style:italic;">fx</span>
<svg style="left:219px;top:368.3px;" width="9" height="8" viewBox="0 0 9 8"><rect x="0.5" y="0.5" width="8" height="7" rx="1" fill="#cfcfcf"/><rect x="1.8" y="2" width="5.4" height="2.4" fill="#555"/></svg>
<svg style="left:228.4px;top:367.2px;" width="10.2" height="10.2" viewBox="0 0 12 12"><g transform="rotate(40 6 6)" fill="none" stroke="#cfcfcf" stroke-width="1.1"><rect x="3.2" y="0.8" width="5.6" height="8" rx="2.8"/><path d="M4.5 2.5 V7 M6 2 V7.5 M7.5 2.5 V7"/><path d="M2.5 8 Q6 12 9.5 8"/></g></svg>
<svg style="left:239px;top:368.3px;" width="9" height="9" viewBox="0 0 9 9"><circle cx="4.5" cy="4.5" r="3.4" fill="none" stroke="#cfcfcf" stroke-width="1"/><path d="M4.5 1.1 A3.4 3.4 0 0 0 4.5 7.9 Z" fill="#cfcfcf" transform="rotate(45 4.5 4.5)"/></svg>
<svg style="left:249px;top:367.8px;" width="9" height="9" viewBox="0 0 9 9"><path d="M4.5 1 L8 2.8 V6.4 L4.5 8.2 L1 6.4 V2.8Z M1 2.8 L4.5 4.6 L8 2.8 M4.5 4.6 V8.2" fill="none" stroke="#cfcfcf" stroke-width="0.8"/></svg>
<span class="t" style="left:273px;top:368px;font-size:7.8px;line-height:10.14px;color:#9c9c9c;transform:scaleX(0.845);transform-origin:0 50%;">Mode</span>
<span class="t" style="left:308px;top:368px;font-size:7.8px;line-height:10.14px;color:#9c9c9c;transform:scaleX(0.734);transform-origin:0 50%;">T</span>
<span class="t" style="left:319.5px;top:368px;font-size:7.8px;line-height:10.14px;color:#9c9c9c;transform:scaleX(0.807);transform-origin:0 50%;">Track Matte</span>
<svg style="left:360px;top:368.3px;" width="8" height="8" viewBox="0 0 8 8"><rect x="0.3" y="0.3" width="7.4" height="7.4" fill="#d8d8d8"/><circle cx="4" cy="4" r="2.2" fill="#1a1a1a"/></svg>
<svg style="left:370px;top:368.3px;" width="8" height="8" viewBox="0 0 8 8"><rect x="0.3" y="0.3" width="7.4" height="7.4" fill="#d8d8d8"/><path d="M7.7 0.3 V7.7 H0.3 Q6 6.5 7.7 0.3Z" fill="#1a1a1a"/></svg>
<span class="t" style="left:384px;top:368px;font-size:7.8px;line-height:10.14px;color:#9c9c9c;transform:scaleX(0.801);transform-origin:0 50%;">Parent &amp; Link</span>
<svg style="left:81.2px;top:381.9px;" width="9" height="10" viewBox="0 0 9 10"><circle cx="4.5" cy="5.6" r="3.3" fill="none" stroke="#8a8a8a" stroke-width="1"/><path d="M3.2 1 H5.8 M4.5 1 V2.4" stroke="#8a8a8a" stroke-width="1"/></svg>
<span class="t" style="left:94px;top:382px;font-size:8.4px;line-height:10.92px;color:#dcdcdc;transform:scaleX(0.873);transform-origin:0 50%;">Position</span>
<span class="t" style="left:180px;top:382px;font-size:8.4px;line-height:10.92px;color:#3f8fe8;transform:scaleX(0.859);transform-origin:0 50%;">0.0,0.0</span>
<svg style="left:392.0px;top:382.4px;" width="9" height="9" viewBox="0 0 9 9"><path d="M4.5 4.5 m-1.2 0 a1.2 1.2 0 1 1 1.4 1.2 a2.6 2.6 0 1 1 2.4 -3 a3.8 3.8 0 1 0 -1 4.6" fill="none" stroke="#727272" stroke-width="0.9"/></svg>
<div style="left:2px;top:392.93px;width:466px;height:10.6px;background:#2d2d2d;"></div>
<div style="left:3.8px;top:392.93px;width:9.4px;height:10.6px;background:#0d0d0d;"></div>
<div style="left:14.2px;top:392.93px;width:9.2px;height:10.6px;background:#363636;"></div>
<div style="left:24.3px;top:392.93px;width:8.6px;height:10.6px;background:#0d0d0d;"></div>
<div style="left:33.9px;top:392.93px;width:8.6px;height:10.6px;background:#0d0d0d;"></div>
<svg style="left:4.2px;top:395.22999999999996px;" width="8.6" height="6" viewBox="0 0 10 7"><path d="M0.5 3.5 Q5 -1 9.5 3.5 Q5 8 0.5 3.5Z" fill="#e6e6e6"/><circle cx="5" cy="3.5" r="1.7" fill="#1a1a1a"/><circle cx="5" cy="3.5" r="0.7" fill="#e6e6e6"/></svg>
<svg style="left:48.5px;top:395.92999999999995px;" width="7" height="5" viewBox="0 0 7 5"><path d="M0.8 1 L3.5 3.9 L6.2 1" fill="none" stroke="#d8d8d8" stroke-width="1.3"/></svg>
<div style="left:57.8px;top:394.23px;width:8.2px;height:8.2px;background:#c4304e;"></div>
<span class="t" style="left:72.3px;top:393px;font-size:8.3px;line-height:10.79px;color:#a8a8a8;transform:scaleX(0.866);transform-origin:0 50%;">51</span>
<div style="left:92px;top:394.13px;width:8.4px;height:8.4px;background:#ffffff;"></div>
<span class="t" style="left:104px;top:393px;font-size:8.4px;line-height:10.92px;color:#e6e6e6;transform:scaleX(0.920);transform-origin:0 50%;">Null 20</span>
<svg style="left:179.2px;top:393.42999999999995px;" width="9" height="9" viewBox="0 0 9 9"><path d="M1 4.6 Q4.5 -1.5 8 4.6 Z" fill="#dcdcdc"/><path d="M0.3 5.6 H8.7 M4.5 0.8 V8 M2.6 6.5 V8 M6.4 6.5 V8" stroke="#dcdcdc" stroke-width="0.9" fill="none"/></svg>
<div style="left:190.2px;top:392.93px;width:8px;height:10.6px;background:#0d0d0d;"></div>
<svg style="left:199.5px;top:393.92999999999995px;" width="8.6" height="8.6" viewBox="0 0 8.6 8.6"><path d="M1.2 7.4 L7.4 1.2" stroke="#e0e0e0" stroke-width="1.1"/></svg>
<div style="left:230.4px;top:392.93px;width:7.6px;height:10.6px;background:#0d0d0d;"></div>
<div style="left:240.2px;top:392.93px;width:7.6px;height:10.6px;background:#0d0d0d;"></div>
<div style="left:250.0px;top:392.93px;width:7.6px;height:10.6px;background:#0d0d0d;"></div>
<div style="left:230.4px;top:392.93px;width:7.6px;height:10.6px;background:#2d2d2d;"></div>
<svg style="left:228.70000000000002px;top:393.12999999999994px;" width="10.2" height="10.2" viewBox="0 0 12 12"><g transform="rotate(40 6 6)" fill="none" stroke="#8e8e8e" stroke-width="1.1"><rect x="3.2" y="0.8" width="5.6" height="8" rx="2.8"/><path d="M4.5 2.5 V7 M6 2 V7.5 M7.5 2.5 V7"/><path d="M2.5 8 Q6 12 9.5 8"/></g></svg>
<div style="left:258.5px;top:392.93px;width:13px;height:10.6px;background:#393939;"></div>
<div style="left:272.5px;top:392.93px;width:28.7px;height:10.6px;background:#0d0d0d;"></div>
<span class="t" style="left:277.5px;top:393px;font-size:8.4px;line-height:10.92px;color:#ececec;transform:scaleX(0.829);transform-origin:0 50%;">Nc</span>
<svg style="left:289.5px;top:395.50499999999994px;" width="7.6" height="4.75" viewBox="0 0 8 5"><path d="M1 0.8 L4 3.8 L7 0.8" fill="none" stroke="#ececec" stroke-width="1.5"/></svg>
<div style="left:301.2px;top:392.93px;width:4.2px;height:10.6px;background:#393939;"></div>
<div style="left:305.4px;top:392.93px;width:8.6px;height:10.6px;background:#0d0d0d;"></div>
<svg style="left:317.5px;top:393.72999999999996px;" width="9" height="9" viewBox="0 0 9 9"><path d="M4.5 4.5 m-1.2 0 a1.2 1.2 0 1 1 1.4 1.2 a2.6 2.6 0 1 1 2.4 -3 a3.8 3.8 0 1 0 -1 4.6" fill="none" stroke="#9a9a9a" stroke-width="0.9"/></svg>
<div style="left:327.5px;top:392.93px;width:30px;height:10.6px;background:#0d0d0d;"></div>
<span class="t" style="left:333.5px;top:393px;font-size:8.4px;line-height:10.92px;color:#ececec;transform:scaleX(0.829);transform-origin:0 50%;">Nc</span>
<svg style="left:345.5px;top:395.50499999999994px;" width="7.6" height="4.75" viewBox="0 0 8 5"><path d="M1 0.8 L4 3.8 L7 0.8" fill="none" stroke="#ececec" stroke-width="1.5"/></svg>
<div style="left:359.5px;top:392.93px;width:36px;height:10.6px;background:#393939;"></div>
<svg style="left:383.2px;top:393.72999999999996px;" width="9" height="9" viewBox="0 0 9 9"><path d="M4.5 4.5 m-1.2 0 a1.2 1.2 0 1 1 1.4 1.2 a2.6 2.6 0 1 1 2.4 -3 a3.8 3.8 0 1 0 -1 4.6" fill="none" stroke="#7c7c7c" stroke-width="0.9"/></svg>
<div style="left:396px;top:392.93px;width:59px;height:10.6px;background:#0d0d0d;"></div>
<span class="t" style="left:401.5px;top:393px;font-size:8.4px;line-height:10.92px;color:#ececec;transform:scaleX(0.824);transform-origin:0 50%;">None</span>
<svg style="left:442.9px;top:395.50499999999994px;" width="7.6" height="4.75" viewBox="0 0 8 5"><path d="M1 0.8 L4 3.8 L7 0.8" fill="none" stroke="#ececec" stroke-width="1.5"/></svg>
<svg style="left:5.5px;top:406.56px;" width="6" height="6" viewBox="0 0 6 6"><path d="M5 0.5 V5.5 L0.8 3Z" fill="#c8c8c8"/></svg>
<svg style="left:15px;top:406.06px;" width="7" height="7" viewBox="0 0 7 7"><path d="M3.5 0.6 L6.4 3.5 L3.5 6.4 L0.6 3.5Z" fill="none" stroke="#8a8a8a" stroke-width="1"/></svg>
<svg style="left:25.5px;top:406.56px;" width="6" height="6" viewBox="0 0 6 6"><path d="M1 0.5 V5.5 L5.2 3Z" fill="#5a5a5a"/></svg>
<svg style="left:81.2px;top:404.56px;" width="9" height="10" viewBox="0 0 9 10"><circle cx="4.5" cy="5.6" r="3.3" fill="none" stroke="#3b5e8f" stroke-width="1"/><path d="M3.2 1 H5.8 M4.5 1 V2.4" stroke="#3b5e8f" stroke-width="1"/></svg>
<svg style="left:92px;top:405.06px;" width="10" height="9" viewBox="0 0 10 9"><path d="M1.5 0.5 V7.5 H9.5" fill="none" stroke="#8a8a8a" stroke-width="1"/><path d="M1.5 6 Q4 5.5 5 3.5 Q6 2 8.5 2.2" fill="none" stroke="#8a8a8a" stroke-width="0.8"/></svg>
<span class="t" style="left:107px;top:405px;font-size:8.4px;line-height:10.92px;color:#dcdcdc;transform:scaleX(0.873);transform-origin:0 50%;">Position</span>
<span class="t" style="left:180px;top:405px;font-size:8.4px;line-height:10.92px;color:#3f8fe8;transform:scaleX(0.861);transform-origin:0 50%;">540.0,-1157.0</span>
<svg style="left:392.0px;top:405.06px;" width="9" height="9" viewBox="0 0 9 9"><path d="M4.5 4.5 m-1.2 0 a1.2 1.2 0 1 1 1.4 1.2 a2.6 2.6 0 1 1 2.4 -3 a3.8 3.8 0 1 0 -1 4.6" fill="none" stroke="#727272" stroke-width="0.9"/></svg>
<svg style="left:5.5px;top:417.89px;" width="6" height="6" viewBox="0 0 6 6"><path d="M5 0.5 V5.5 L0.8 3Z" fill="#c8c8c8"/></svg>
<svg style="left:15px;top:417.39px;" width="7" height="7" viewBox="0 0 7 7"><path d="M3.5 0.6 L6.4 3.5 L3.5 6.4 L0.6 3.5Z" fill="none" stroke="#8a8a8a" stroke-width="1"/></svg>
<svg style="left:25.5px;top:417.89px;" width="6" height="6" viewBox="0 0 6 6"><path d="M1 0.5 V5.5 L5.2 3Z" fill="#5a5a5a"/></svg>
<svg style="left:81.2px;top:415.89px;" width="9" height="10" viewBox="0 0 9 10"><circle cx="4.5" cy="5.6" r="3.3" fill="none" stroke="#3b5e8f" stroke-width="1"/><path d="M3.2 1 H5.8 M4.5 1 V2.4" stroke="#3b5e8f" stroke-width="1"/></svg>
<svg style="left:92px;top:416.39px;" width="10" height="9" viewBox="0 0 10 9"><path d="M1.5 0.5 V7.5 H9.5" fill="none" stroke="#8a8a8a" stroke-width="1"/><path d="M1.5 6 Q4 5.5 5 3.5 Q6 2 8.5 2.2" fill="none" stroke="#8a8a8a" stroke-width="0.8"/></svg>
<span class="t" style="left:106.5px;top:416px;font-size:8.4px;line-height:10.92px;color:#dcdcdc;transform:scaleX(0.811);transform-origin:0 50%;">Scale</span>
<svg style="left:178px;top:418.28999999999996px;" width="10" height="5.2" viewBox="0 0 10 5.2"><rect x="0.6" y="0.8" width="5" height="3.4" rx="1.7" fill="none" stroke="#c8c8c8" stroke-width="0.9"/><rect x="4.4" y="0.8" width="5" height="3.4" rx="1.7" fill="none" stroke="#c8c8c8" stroke-width="0.9"/></svg>
<span class="t" style="left:191.6px;top:416px;font-size:8.4px;line-height:10.92px;color:#3f8fe8;transform:scaleX(0.841);transform-origin:0 50%;">100.0,100.0%</span>
<svg style="left:392.0px;top:416.39px;" width="9" height="9" viewBox="0 0 9 9"><path d="M4.5 4.5 m-1.2 0 a1.2 1.2 0 1 1 1.4 1.2 a2.6 2.6 0 1 1 2.4 -3 a3.8 3.8 0 1 0 -1 4.6" fill="none" stroke="#727272" stroke-width="0.9"/></svg>
<div style="left:2px;top:426.92px;width:466px;height:10.6px;background:#2d2d2d;"></div>
<div style="left:3.8px;top:426.92px;width:9.4px;height:10.6px;background:#0d0d0d;"></div>
<div style="left:14.2px;top:426.92px;width:9.2px;height:10.6px;background:#363636;"></div>
<div style="left:24.3px;top:426.92px;width:8.6px;height:10.6px;background:#0d0d0d;"></div>
<div style="left:33.9px;top:426.92px;width:8.6px;height:10.6px;background:#0d0d0d;"></div>
<svg style="left:4.2px;top:429.21999999999997px;" width="8.6" height="6" viewBox="0 0 10 7"><path d="M0.5 3.5 Q5 -1 9.5 3.5 Q5 8 0.5 3.5Z" fill="#e6e6e6"/><circle cx="5" cy="3.5" r="1.7" fill="#1a1a1a"/><circle cx="5" cy="3.5" r="0.7" fill="#e6e6e6"/></svg>
<svg style="left:49.5px;top:428.91999999999996px;" width="5" height="7" viewBox="0 0 5 7"><path d="M1 0.8 L3.9 3.5 L1 6.2" fill="none" stroke="#d8d8d8" stroke-width="1.3"/></svg>
<div style="left:57.8px;top:428.22px;width:8.2px;height:8.2px;background:#b8b2a2;"></div>
<span class="t" style="left:72.3px;top:427px;font-size:8.3px;line-height:10.79px;color:#a8a8a8;transform:scaleX(0.866);transform-origin:0 50%;">52</span>
<svg style="left:91.5px;top:427.62px;" width="9.6" height="9.6" viewBox="0 0 9.6 9.6"><rect x="0.3" y="0.3" width="9" height="9" rx="1" fill="#cfcfcf"/><circle cx="4.8" cy="4.8" r="2.5" fill="none" stroke="#333" stroke-width="0.9"/><rect x="1.5" y="1.5" width="1.4" height="1.4" fill="#333"/><rect x="6.7" y="1.5" width="1.4" height="1.4" fill="#333"/></svg>
<span class="t" style="left:104px;top:427px;font-size:8.4px;line-height:10.92px;color:#e6e6e6;transform:scaleX(0.858);transform-origin:0 50%;">02</span>
<svg style="left:179.2px;top:427.41999999999996px;" width="9" height="9" viewBox="0 0 9 9"><path d="M1 4.6 Q4.5 -1.5 8 4.6 Z" fill="#dcdcdc"/><path d="M0.3 5.6 H8.7 M4.5 0.8 V8 M2.6 6.5 V8 M6.4 6.5 V8" stroke="#dcdcdc" stroke-width="0.9" fill="none"/></svg>
<div style="left:190.2px;top:426.92px;width:8px;height:10.6px;background:#0d0d0d;"></div>
<svg style="left:199.5px;top:427.91999999999996px;" width="8.6" height="8.6" viewBox="0 0 8.6 8.6"><path d="M1.2 7.4 L7.4 1.2" stroke="#e0e0e0" stroke-width="1.1"/></svg>
<div style="left:230.4px;top:426.92px;width:7.6px;height:10.6px;background:#0d0d0d;"></div>
<div style="left:240.2px;top:426.92px;width:7.6px;height:10.6px;background:#0d0d0d;"></div>
<div style="left:250.0px;top:426.92px;width:7.6px;height:10.6px;background:#0d0d0d;"></div>
<div style="left:230.4px;top:426.92px;width:7.6px;height:10.6px;background:#2d2d2d;"></div>
<svg style="left:228.70000000000002px;top:427.11999999999995px;" width="10.2" height="10.2" viewBox="0 0 12 12"><g transform="rotate(40 6 6)" fill="none" stroke="#8e8e8e" stroke-width="1.1"><rect x="3.2" y="0.8" width="5.6" height="8" rx="2.8"/><path d="M4.5 2.5 V7 M6 2 V7.5 M7.5 2.5 V7"/><path d="M2.5 8 Q6 12 9.5 8"/></g></svg>
<div style="left:258.5px;top:426.92px;width:13px;height:10.6px;background:#393939;"></div>
<div style="left:272.5px;top:426.92px;width:28.7px;height:10.6px;background:#0d0d0d;"></div>
<span class="t" style="left:277.5px;top:427px;font-size:8.4px;line-height:10.92px;color:#ececec;transform:scaleX(0.829);transform-origin:0 50%;">Nc</span>
<svg style="left:289.5px;top:429.49499999999995px;" width="7.6" height="4.75" viewBox="0 0 8 5"><path d="M1 0.8 L4 3.8 L7 0.8" fill="none" stroke="#ececec" stroke-width="1.5"/></svg>
<div style="left:301.2px;top:426.92px;width:4.2px;height:10.6px;background:#393939;"></div>
<div style="left:305.4px;top:426.92px;width:8.6px;height:10.6px;background:#0d0d0d;"></div>
<svg style="left:317.5px;top:427.71999999999997px;" width="9" height="9" viewBox="0 0 9 9"><path d="M4.5 4.5 m-1.2 0 a1.2 1.2 0 1 1 1.4 1.2 a2.6 2.6 0 1 1 2.4 -3 a3.8 3.8 0 1 0 -1 4.6" fill="none" stroke="#9a9a9a" stroke-width="0.9"/></svg>
<div style="left:327.5px;top:426.92px;width:30px;height:10.6px;background:#0d0d0d;"></div>
<span class="t" style="left:333.5px;top:427px;font-size:8.4px;line-height:10.92px;color:#ececec;transform:scaleX(0.829);transform-origin:0 50%;">Nc</span>
<svg style="left:345.5px;top:429.49499999999995px;" width="7.6" height="4.75" viewBox="0 0 8 5"><path d="M1 0.8 L4 3.8 L7 0.8" fill="none" stroke="#ececec" stroke-width="1.5"/></svg>
<div style="left:359.5px;top:426.92px;width:36px;height:10.6px;background:#393939;"></div>
<svg style="left:383.2px;top:427.71999999999997px;" width="9" height="9" viewBox="0 0 9 9"><path d="M4.5 4.5 m-1.2 0 a1.2 1.2 0 1 1 1.4 1.2 a2.6 2.6 0 1 1 2.4 -3 a3.8 3.8 0 1 0 -1 4.6" fill="none" stroke="#7c7c7c" stroke-width="0.9"/></svg>
<div style="left:396px;top:426.92px;width:59px;height:10.6px;background:#0d0d0d;"></div>
<span class="t" style="left:401.5px;top:427px;font-size:8.4px;line-height:10.92px;color:#ececec;transform:scaleX(0.874);transform-origin:0 50%;">51. Null 20</span>
<svg style="left:442.9px;top:429.49499999999995px;" width="7.6" height="4.75" viewBox="0 0 8 5"><path d="M1 0.8 L4 3.8 L7 0.8" fill="none" stroke="#ececec" stroke-width="1.5"/></svg>
<div style="left:2px;top:438.25px;width:466px;height:10.6px;background:#2d2d2d;"></div>
<div style="left:3.8px;top:438.25px;width:9.4px;height:10.6px;background:#0d0d0d;"></div>
<div style="left:14.2px;top:438.25px;width:9.2px;height:10.6px;background:#363636;"></div>
<div style="left:24.3px;top:438.25px;width:8.6px;height:10.6px;background:#0d0d0d;"></div>
<div style="left:33.9px;top:438.25px;width:8.6px;height:10.6px;background:#0d0d0d;"></div>
<svg style="left:4.2px;top:440.54999999999995px;" width="8.6" height="6" viewBox="0 0 10 7"><path d="M0.5 3.5 Q5 -1 9.5 3.5 Q5 8 0.5 3.5Z" fill="#e6e6e6"/><circle cx="5" cy="3.5" r="1.7" fill="#1a1a1a"/><circle cx="5" cy="3.5" r="0.7" fill="#e6e6e6"/></svg>
<svg style="left:48.5px;top:441.24999999999994px;" width="7" height="5" viewBox="0 0 7 5"><path d="M0.8 1 L3.5 3.9 L6.2 1" fill="none" stroke="#d8d8d8" stroke-width="1.3"/></svg>
<div style="left:57.8px;top:439.55px;width:8.2px;height:8.2px;background:#c4304e;"></div>
<span class="t" style="left:72.3px;top:438px;font-size:8.3px;line-height:10.79px;color:#a8a8a8;transform:scaleX(0.866);transform-origin:0 50%;">53</span>
<div style="left:92px;top:439.45px;width:8.4px;height:8.4px;background:#ffffff;"></div>
<span class="t" style="left:104px;top:438px;font-size:8.4px;line-height:10.92px;color:#e6e6e6;transform:scaleX(0.920);transform-origin:0 50%;">Null 24</span>
<svg style="left:179.2px;top:438.74999999999994px;" width="9" height="9" viewBox="0 0 9 9"><path d="M1 4.6 Q4.5 -1.5 8 4.6 Z" fill="#dcdcdc"/><path d="M0.3 5.6 H8.7 M4.5 0.8 V8 M2.6 6.5 V8 M6.4 6.5 V8" stroke="#dcdcdc" stroke-width="0.9" fill="none"/></svg>
<div style="left:190.2px;top:438.25px;width:8px;height:10.6px;background:#0d0d0d;"></div>
<svg style="left:199.5px;top:439.24999999999994px;" width="8.6" height="8.6" viewBox="0 0 8.6 8.6"><path d="M1.2 7.4 L7.4 1.2" stroke="#e0e0e0" stroke-width="1.1"/></svg>
<div style="left:230.4px;top:438.25px;width:7.6px;height:10.6px;background:#0d0d0d;"></div>
<div style="left:240.2px;top:438.25px;width:7.6px;height:10.6px;background:#0d0d0d;"></div>
<div style="left:250.0px;top:438.25px;width:7.6px;height:10.6px;background:#0d0d0d;"></div>
<div style="left:258.5px;top:438.25px;width:13px;height:10.6px;background:#393939;"></div>
<div style="left:272.5px;top:438.25px;width:28.7px;height:10.6px;background:#0d0d0d;"></div>
<span class="t" style="left:277.5px;top:438px;font-size:8.4px;line-height:10.92px;color:#ececec;transform:scaleX(0.829);transform-origin:0 50%;">Nc</span>
<svg style="left:289.5px;top:440.82499999999993px;" width="7.6" height="4.75" viewBox="0 0 8 5"><path d="M1 0.8 L4 3.8 L7 0.8" fill="none" stroke="#ececec" stroke-width="1.5"/></svg>
<div style="left:301.2px;top:438.25px;width:4.2px;height:10.6px;background:#393939;"></div>
<div style="left:305.4px;top:438.25px;width:8.6px;height:10.6px;background:#0d0d0d;"></div>
<svg style="left:317.5px;top:439.04999999999995px;" width="9" height="9" viewBox="0 0 9 9"><path d="M4.5 4.5 m-1.2 0 a1.2 1.2 0 1 1 1.4 1.2 a2.6 2.6 0 1 1 2.4 -3 a3.8 3.8 0 1 0 -1 4.6" fill="none" stroke="#9a9a9a" stroke-width="0.9"/></svg>
<div style="left:327.5px;top:438.25px;width:30px;height:10.6px;background:#0d0d0d;"></div>
<span class="t" style="left:333.5px;top:438px;font-size:8.4px;line-height:10.92px;color:#ececec;transform:scaleX(0.829);transform-origin:0 50%;">Nc</span>
<svg style="left:345.5px;top:440.82499999999993px;" width="7.6" height="4.75" viewBox="0 0 8 5"><path d="M1 0.8 L4 3.8 L7 0.8" fill="none" stroke="#ececec" stroke-width="1.5"/></svg>
<div style="left:359.5px;top:438.25px;width:36px;height:10.6px;background:#393939;"></div>
<svg style="left:383.2px;top:439.04999999999995px;" width="9" height="9" viewBox="0 0 9 9"><path d="M4.5 4.5 m-1.2 0 a1.2 1.2 0 1 1 1.4 1.2 a2.6 2.6 0 1 1 2.4 -3 a3.8 3.8 0 1 0 -1 4.6" fill="none" stroke="#7c7c7c" stroke-width="0.9"/></svg>
<div style="left:396px;top:438.25px;width:59px;height:10.6px;background:#0d0d0d;"></div>
<span class="t" style="left:401.5px;top:438px;font-size:8.4px;line-height:10.92px;color:#ececec;transform:scaleX(0.824);transform-origin:0 50%;">None</span>
<svg style="left:442.9px;top:440.82499999999993px;" width="7.6" height="4.75" viewBox="0 0 8 5"><path d="M1 0.8 L4 3.8 L7 0.8" fill="none" stroke="#ececec" stroke-width="1.5"/></svg>
<svg style="left:5.5px;top:451.88px;" width="6" height="6" viewBox="0 0 6 6"><path d="M5 0.5 V5.5 L0.8 3Z" fill="#c8c8c8"/></svg>
<svg style="left:15px;top:451.38px;" width="7" height="7" viewBox="0 0 7 7"><path d="M3.5 0.6 L6.4 3.5 L3.5 6.4 L0.6 3.5Z" fill="none" stroke="#8a8a8a" stroke-width="1"/></svg>
<svg style="left:25.5px;top:451.88px;" width="6" height="6" viewBox="0 0 6 6"><path d="M1 0.5 V5.5 L5.2 3Z" fill="#5a5a5a"/></svg>
<svg style="left:81.2px;top:449.88px;" width="9" height="10" viewBox="0 0 9 10"><circle cx="4.5" cy="5.6" r="3.3" fill="none" stroke="#3b5e8f" stroke-width="1"/><path d="M3.2 1 H5.8 M4.5 1 V2.4" stroke="#3b5e8f" stroke-width="1"/></svg>
<svg style="left:92px;top:450.38px;" width="10" height="9" viewBox="0 0 10 9"><path d="M1.5 0.5 V7.5 H9.5" fill="none" stroke="#8a8a8a" stroke-width="1"/><path d="M1.5 6 Q4 5.5 5 3.5 Q6 2 8.5 2.2" fill="none" stroke="#8a8a8a" stroke-width="0.8"/></svg>
<span class="t" style="left:107px;top:450px;font-size:8.4px;line-height:10.92px;color:#dcdcdc;transform:scaleX(0.873);transform-origin:0 50%;">Position</span>
<span class="t" style="left:180px;top:450px;font-size:8.4px;line-height:10.92px;color:#3f8fe8;transform:scaleX(0.847);transform-origin:0 50%;">750.0,807.0</span>
<svg style="left:392.0px;top:450.38px;" width="9" height="9" viewBox="0 0 9 9"><path d="M4.5 4.5 m-1.2 0 a1.2 1.2 0 1 1 1.4 1.2 a2.6 2.6 0 1 1 2.4 -3 a3.8 3.8 0 1 0 -1 4.6" fill="none" stroke="#727272" stroke-width="0.9"/></svg>
<svg style="left:5.5px;top:463.21px;" width="6" height="6" viewBox="0 0 6 6"><path d="M5 0.5 V5.5 L0.8 3Z" fill="#c8c8c8"/></svg>
<svg style="left:15px;top:462.71px;" width="7" height="7" viewBox="0 0 7 7"><path d="M3.5 0.6 L6.4 3.5 L3.5 6.4 L0.6 3.5Z" fill="none" stroke="#8a8a8a" stroke-width="1"/></svg>
<svg style="left:25.5px;top:463.21px;" width="6" height="6" viewBox="0 0 6 6"><path d="M1 0.5 V5.5 L5.2 3Z" fill="#5a5a5a"/></svg>
<svg style="left:81.2px;top:461.21px;" width="9" height="10" viewBox="0 0 9 10"><circle cx="4.5" cy="5.6" r="3.3" fill="none" stroke="#3b5e8f" stroke-width="1"/><path d="M3.2 1 H5.8 M4.5 1 V2.4" stroke="#3b5e8f" stroke-width="1"/></svg>
<svg style="left:92px;top:461.71px;" width="10" height="9" viewBox="0 0 10 9"><path d="M1.5 0.5 V7.5 H9.5" fill="none" stroke="#8a8a8a" stroke-width="1"/><path d="M1.5 6 Q4 5.5 5 3.5 Q6 2 8.5 2.2" fill="none" stroke="#8a8a8a" stroke-width="0.8"/></svg>
<span class="t" style="left:106.5px;top:462px;font-size:8.4px;line-height:10.92px;color:#dcdcdc;transform:scaleX(0.811);transform-origin:0 50%;">Scale</span>
<svg style="left:178px;top:463.60999999999996px;" width="10" height="5.2" viewBox="0 0 10 5.2"><rect x="0.6" y="0.8" width="5" height="3.4" rx="1.7" fill="none" stroke="#c8c8c8" stroke-width="0.9"/><rect x="4.4" y="0.8" width="5" height="3.4" rx="1.7" fill="none" stroke="#c8c8c8" stroke-width="0.9"/></svg>
<span class="t" style="left:191.6px;top:462px;font-size:8.4px;line-height:10.92px;color:#3f8fe8;transform:scaleX(0.841);transform-origin:0 50%;">156.0,156.0%</span>
<svg style="left:392.0px;top:461.71px;" width="9" height="9" viewBox="0 0 9 9"><path d="M4.5 4.5 m-1.2 0 a1.2 1.2 0 1 1 1.4 1.2 a2.6 2.6 0 1 1 2.4 -3 a3.8 3.8 0 1 0 -1 4.6" fill="none" stroke="#727272" stroke-width="0.9"/></svg>
<div style="left:2px;top:472.24px;width:466px;height:10.6px;background:#464646;"></div>
<div style="left:3.8px;top:472.24px;width:9.4px;height:10.6px;background:#1a1a1a;"></div>
<div style="left:14.2px;top:472.24px;width:9.2px;height:10.6px;background:#525252;"></div>
<div style="left:24.3px;top:472.24px;width:8.6px;height:10.6px;background:#1a1a1a;"></div>
<div style="left:33.9px;top:472.24px;width:8.6px;height:10.6px;background:#1a1a1a;"></div>
<svg style="left:4.2px;top:474.53999999999996px;" width="8.6" height="6" viewBox="0 0 10 7"><path d="M0.5 3.5 Q5 -1 9.5 3.5 Q5 8 0.5 3.5Z" fill="#e6e6e6"/><circle cx="5" cy="3.5" r="1.7" fill="#1a1a1a"/><circle cx="5" cy="3.5" r="0.7" fill="#e6e6e6"/></svg>
<svg style="left:49.5px;top:474.23999999999995px;" width="5" height="7" viewBox="0 0 5 7"><path d="M1 0.8 L3.9 3.5 L1 6.2" fill="none" stroke="#d8d8d8" stroke-width="1.3"/></svg>
<div style="left:57.8px;top:473.54px;width:8.2px;height:8.2px;background:#b1b5ab;"></div>
<span class="t" style="left:72.3px;top:472px;font-size:8.3px;line-height:10.79px;color:#a8a8a8;transform:scaleX(0.866);transform-origin:0 50%;">54</span>
<svg style="left:91.5px;top:472.94px;" width="9.6" height="9.6" viewBox="0 0 9.6 9.6"><rect x="0.3" y="0.3" width="9" height="9" rx="1" fill="#cfcfcf"/><circle cx="4.8" cy="4.8" r="2.5" fill="none" stroke="#333" stroke-width="0.9"/><rect x="1.5" y="1.5" width="1.4" height="1.4" fill="#333"/><rect x="6.7" y="1.5" width="1.4" height="1.4" fill="#333"/></svg>
<div style="left:102px;top:472.54px;width:74.5px;height:10.0px;background:#cbcbcb;"></div>
<span class="t" style="left:104.3px;top:472px;font-size:8.4px;line-height:10.92px;color:#222222;transform:scaleX(0.858);transform-origin:0 50%;">10</span>
<svg style="left:179.2px;top:472.73999999999995px;" width="9" height="9" viewBox="0 0 9 9"><path d="M1 4.6 Q4.5 -1.5 8 4.6 Z" fill="#dcdcdc"/><path d="M0.3 5.6 H8.7 M4.5 0.8 V8 M2.6 6.5 V8 M6.4 6.5 V8" stroke="#dcdcdc" stroke-width="0.9" fill="none"/></svg>
<div style="left:190.2px;top:472.24px;width:8px;height:10.6px;background:#0d0d0d;"></div>
<svg style="left:199.5px;top:473.23999999999995px;" width="8.6" height="8.6" viewBox="0 0 8.6 8.6"><path d="M1.2 7.4 L7.4 1.2" stroke="#e0e0e0" stroke-width="1.1"/></svg>
<div style="left:230.4px;top:472.24px;width:7.6px;height:10.6px;background:#151515;"></div>
<div style="left:240.2px;top:472.24px;width:7.6px;height:10.6px;background:#151515;"></div>
<div style="left:250.0px;top:472.24px;width:7.6px;height:10.6px;background:#151515;"></div>
<div style="left:258.5px;top:472.24px;width:13px;height:10.6px;background:#4c4c4c;"></div>
<div style="left:272.5px;top:472.24px;width:28.7px;height:10.6px;background:#0d0d0d;"></div>
<span class="t" style="left:277.5px;top:472px;font-size:8.4px;line-height:10.92px;color:#ececec;transform:scaleX(0.829);transform-origin:0 50%;">Nc</span>
<svg style="left:289.5px;top:474.81499999999994px;" width="7.6" height="4.75" viewBox="0 0 8 5"><path d="M1 0.8 L4 3.8 L7 0.8" fill="none" stroke="#ececec" stroke-width="1.5"/></svg>
<div style="left:301.2px;top:472.24px;width:4.2px;height:10.6px;background:#4c4c4c;"></div>
<div style="left:305.4px;top:472.24px;width:8.6px;height:10.6px;background:#0d0d0d;"></div>
<svg style="left:317.5px;top:473.03999999999996px;" width="9" height="9" viewBox="0 0 9 9"><path d="M4.5 4.5 m-1.2 0 a1.2 1.2 0 1 1 1.4 1.2 a2.6 2.6 0 1 1 2.4 -3 a3.8 3.8 0 1 0 -1 4.6" fill="none" stroke="#9a9a9a" stroke-width="0.9"/></svg>
<div style="left:327.5px;top:472.24px;width:30px;height:10.6px;background:#0d0d0d;"></div>
<span class="t" style="left:333.5px;top:472px;font-size:8.4px;line-height:10.92px;color:#ececec;transform:scaleX(0.829);transform-origin:0 50%;">Nc</span>
<svg style="left:345.5px;top:474.81499999999994px;" width="7.6" height="4.75" viewBox="0 0 8 5"><path d="M1 0.8 L4 3.8 L7 0.8" fill="none" stroke="#ececec" stroke-width="1.5"/></svg>
<div style="left:359.5px;top:472.24px;width:36px;height:10.6px;background:#4c4c4c;"></div>
<svg style="left:383.2px;top:473.03999999999996px;" width="9" height="9" viewBox="0 0 9 9"><path d="M4.5 4.5 m-1.2 0 a1.2 1.2 0 1 1 1.4 1.2 a2.6 2.6 0 1 1 2.4 -3 a3.8 3.8 0 1 0 -1 4.6" fill="none" stroke="#7c7c7c" stroke-width="0.9"/></svg>
<div style="left:396px;top:472.24px;width:59px;height:10.6px;background:#0d0d0d;"></div>
<span class="t" style="left:401.5px;top:472px;font-size:8.4px;line-height:10.92px;color:#ececec;transform:scaleX(0.874);transform-origin:0 50%;">53. Null 24</span>
<svg style="left:442.9px;top:474.81499999999994px;" width="7.6" height="4.75" viewBox="0 0 8 5"><path d="M1 0.8 L4 3.8 L7 0.8" fill="none" stroke="#ececec" stroke-width="1.5"/></svg>
<div style="left:2px;top:483.57px;width:466px;height:10.6px;background:#2d2d2d;"></div>
<div style="left:3.8px;top:483.57px;width:9.4px;height:10.6px;background:#0d0d0d;"></div>
<div style="left:14.2px;top:483.57px;width:9.2px;height:10.6px;background:#363636;"></div>
<div style="left:24.3px;top:483.57px;width:8.6px;height:10.6px;background:#0d0d0d;"></div>
<div style="left:33.9px;top:483.57px;width:8.6px;height:10.6px;background:#0d0d0d;"></div>
<svg style="left:4.2px;top:485.87px;" width="8.6" height="6" viewBox="0 0 10 7"><path d="M0.5 3.5 Q5 -1 9.5 3.5 Q5 8 0.5 3.5Z" fill="#e6e6e6"/><circle cx="5" cy="3.5" r="1.7" fill="#1a1a1a"/><circle cx="5" cy="3.5" r="0.7" fill="#e6e6e6"/></svg>
<svg style="left:49.5px;top:485.57px;" width="5" height="7" viewBox="0 0 5 7"><path d="M1 0.8 L3.9 3.5 L1 6.2" fill="none" stroke="#d8d8d8" stroke-width="1.3"/></svg>
<div style="left:57.8px;top:484.87px;width:8.2px;height:8.2px;background:#cfddd5;"></div>
<span class="t" style="left:72.3px;top:484px;font-size:8.3px;line-height:10.79px;color:#a8a8a8;transform:scaleX(0.866);transform-origin:0 50%;">55</span>
<svg style="left:92.3px;top:484.17px;" width="8" height="9.8" viewBox="0 0 8 9.8"><path d="M0.4 0.4 H5.6 L7.6 2.4 V9.4 H0.4Z" fill="#e8f4f0"/><rect x="1.6" y="3.6" width="4.6" height="4.2" rx="0.6" fill="#2aa889"/><rect x="2.8" y="4.8" width="2.2" height="1.8" fill="#e8f4f0"/></svg>
<span class="t" style="left:104px;top:484px;font-size:8.4px;line-height:10.92px;color:#e6e6e6;transform:scaleX(0.848);transform-origin:0 50%;">0_Video...x1080.mp4</span>
<svg style="left:179.2px;top:484.07px;" width="9" height="9" viewBox="0 0 9 9"><path d="M1 4.6 Q4.5 -1.5 8 4.6 Z" fill="#dcdcdc"/><path d="M0.3 5.6 H8.7 M4.5 0.8 V8 M2.6 6.5 V8 M6.4 6.5 V8" stroke="#dcdcdc" stroke-width="0.9" fill="none"/></svg>
<svg style="left:199.5px;top:484.57px;" width="8.6" height="8.6" viewBox="0 0 8.6 8.6"><path d="M1.2 7.4 L7.4 1.2" stroke="#e0e0e0" stroke-width="1.1"/></svg>
<div style="left:220.3px;top:483.57px;width:7.6px;height:10.6px;background:#0d0d0d;"></div>
<div style="left:230.4px;top:483.57px;width:7.6px;height:10.6px;background:#0d0d0d;"></div>
<div style="left:240.2px;top:483.57px;width:7.6px;height:10.6px;background:#0d0d0d;"></div>
<div style="left:250.0px;top:483.57px;width:7.6px;height:10.6px;background:#0d0d0d;"></div>
<div style="left:258.5px;top:483.57px;width:13px;height:10.6px;background:#393939;"></div>
<div style="left:272.5px;top:483.57px;width:28.7px;height:10.6px;background:#0d0d0d;"></div>
<span class="t" style="left:277.5px;top:484px;font-size:8.4px;line-height:10.92px;color:#ececec;transform:scaleX(0.829);transform-origin:0 50%;">Nc</span>
<svg style="left:289.5px;top:486.145px;" width="7.6" height="4.75" viewBox="0 0 8 5"><path d="M1 0.8 L4 3.8 L7 0.8" fill="none" stroke="#ececec" stroke-width="1.5"/></svg>
<div style="left:301.2px;top:483.57px;width:4.2px;height:10.6px;background:#393939;"></div>
<div style="left:305.4px;top:483.57px;width:8.6px;height:10.6px;background:#0d0d0d;"></div>
<svg style="left:317.5px;top:484.37px;" width="9" height="9" viewBox="0 0 9 9"><path d="M4.5 4.5 m-1.2 0 a1.2 1.2 0 1 1 1.4 1.2 a2.6 2.6 0 1 1 2.4 -3 a3.8 3.8 0 1 0 -1 4.6" fill="none" stroke="#9a9a9a" stroke-width="0.9"/></svg>
<div style="left:327.5px;top:483.57px;width:30px;height:10.6px;background:#0d0d0d;"></div>
<span class="t" style="left:333.5px;top:484px;font-size:8.4px;line-height:10.92px;color:#ececec;transform:scaleX(0.829);transform-origin:0 50%;">Nc</span>
<svg style="left:345.5px;top:486.145px;" width="7.6" height="4.75" viewBox="0 0 8 5"><path d="M1 0.8 L4 3.8 L7 0.8" fill="none" stroke="#ececec" stroke-width="1.5"/></svg>
<div style="left:359.5px;top:483.57px;width:36px;height:10.6px;background:#393939;"></div>
<svg style="left:383.2px;top:484.37px;" width="9" height="9" viewBox="0 0 9 9"><path d="M4.5 4.5 m-1.2 0 a1.2 1.2 0 1 1 1.4 1.2 a2.6 2.6 0 1 1 2.4 -3 a3.8 3.8 0 1 0 -1 4.6" fill="none" stroke="#7c7c7c" stroke-width="0.9"/></svg>
<div style="left:396px;top:483.57px;width:59px;height:10.6px;background:#0d0d0d;"></div>
<span class="t" style="left:401.5px;top:484px;font-size:8.4px;line-height:10.92px;color:#ececec;transform:scaleX(0.824);transform-origin:0 50%;">None</span>
<svg style="left:442.9px;top:486.145px;" width="7.6" height="4.75" viewBox="0 0 8 5"><path d="M1 0.8 L4 3.8 L7 0.8" fill="none" stroke="#ececec" stroke-width="1.5"/></svg>
<div style="left:2px;top:494.9px;width:466px;height:10.6px;background:#2d2d2d;"></div>
<div style="left:3.8px;top:494.9px;width:9.4px;height:10.6px;background:#0d0d0d;"></div>
<div style="left:14.2px;top:494.9px;width:9.2px;height:10.6px;background:#363636;"></div>
<div style="left:24.3px;top:494.9px;width:8.6px;height:10.6px;background:#0d0d0d;"></div>
<div style="left:33.9px;top:494.9px;width:8.6px;height:10.6px;background:#0d0d0d;"></div>
<svg style="left:4.2px;top:497.2px;" width="8.6" height="6" viewBox="0 0 10 7"><path d="M0.5 3.5 Q5 -1 9.5 3.5 Q5 8 0.5 3.5Z" fill="#e6e6e6"/><circle cx="5" cy="3.5" r="1.7" fill="#1a1a1a"/><circle cx="5" cy="3.5" r="0.7" fill="#e6e6e6"/></svg>
<svg style="left:49.5px;top:496.9px;" width="5" height="7" viewBox="0 0 5 7"><path d="M1 0.8 L3.9 3.5 L1 6.2" fill="none" stroke="#d8d8d8" stroke-width="1.3"/></svg>
<div style="left:57.8px;top:496.2px;width:8.2px;height:8.2px;background:#7a7fe6;"></div>
<span class="t" style="left:72.3px;top:495px;font-size:8.3px;line-height:10.79px;color:#a8a8a8;transform:scaleX(0.866);transform-origin:0 50%;">56</span>
<svg style="left:91.8px;top:495.79999999999995px;" width="9" height="9" viewBox="0 0 9 9"><path d="M4.5 0.4 L5.7 3.2 L8.7 3.5 L6.4 5.5 L7.1 8.5 L4.5 6.9 L1.9 8.5 L2.6 5.5 L0.3 3.5 L3.3 3.2Z" fill="#d6d6d6"/></svg>
<span class="t" style="left:104px;top:495px;font-size:8.4px;line-height:10.92px;color:#e6e6e6;transform:scaleX(0.835);transform-origin:0 50%;">Shape Layer 8</span>
<svg style="left:179.2px;top:495.4px;" width="9" height="9" viewBox="0 0 9 9"><path d="M1 4.6 Q4.5 -1.5 8 4.6 Z" fill="#dcdcdc"/><path d="M0.3 5.6 H8.7 M4.5 0.8 V8 M2.6 6.5 V8 M6.4 6.5 V8" stroke="#dcdcdc" stroke-width="0.9" fill="none"/></svg>
<svg style="left:191.2px;top:497.2px;" width="6" height="6" viewBox="0 0 6 6"><circle cx="3" cy="3" r="1.6" fill="none" stroke="#5a5a5a" stroke-width="0.8"/></svg>
<svg style="left:199.5px;top:495.9px;" width="8.6" height="8.6" viewBox="0 0 8.6 8.6"><path d="M1.2 7.4 L7.4 1.2" stroke="#e0e0e0" stroke-width="1.1"/></svg>
<div style="left:230.4px;top:494.9px;width:7.6px;height:10.6px;background:#0d0d0d;"></div>
<div style="left:240.2px;top:494.9px;width:7.6px;height:10.6px;background:#0d0d0d;"></div>
<div style="left:250.0px;top:494.9px;width:7.6px;height:10.6px;background:#0d0d0d;"></div>
<div style="left:258.5px;top:494.9px;width:13px;height:10.6px;background:#393939;"></div>
<div style="left:272.5px;top:494.9px;width:28.7px;height:10.6px;background:#0d0d0d;"></div>
<span class="t" style="left:277.5px;top:495px;font-size:8.4px;line-height:10.92px;color:#ececec;transform:scaleX(0.829);transform-origin:0 50%;">Nc</span>
<svg style="left:289.5px;top:497.47499999999997px;" width="7.6" height="4.75" viewBox="0 0 8 5"><path d="M1 0.8 L4 3.8 L7 0.8" fill="none" stroke="#ececec" stroke-width="1.5"/></svg>
<div style="left:301.2px;top:494.9px;width:4.2px;height:10.6px;background:#393939;"></div>
<div style="left:305.4px;top:494.9px;width:8.6px;height:10.6px;background:#0d0d0d;"></div>
<svg style="left:317.5px;top:495.7px;" width="9" height="9" viewBox="0 0 9 9"><path d="M4.5 4.5 m-1.2 0 a1.2 1.2 0 1 1 1.4 1.2 a2.6 2.6 0 1 1 2.4 -3 a3.8 3.8 0 1 0 -1 4.6" fill="none" stroke="#9a9a9a" stroke-width="0.9"/></svg>
<div style="left:327.5px;top:494.9px;width:30px;height:10.6px;background:#0d0d0d;"></div>
<span class="t" style="left:333.5px;top:495px;font-size:8.4px;line-height:10.92px;color:#ececec;transform:scaleX(0.829);transform-origin:0 50%;">Nc</span>
<svg style="left:345.5px;top:497.47499999999997px;" width="7.6" height="4.75" viewBox="0 0 8 5"><path d="M1 0.8 L4 3.8 L7 0.8" fill="none" stroke="#ececec" stroke-width="1.5"/></svg>
<div style="left:359.5px;top:494.9px;width:36px;height:10.6px;background:#393939;"></div>
<svg style="left:383.2px;top:495.7px;" width="9" height="9" viewBox="0 0 9 9"><path d="M4.5 4.5 m-1.2 0 a1.2 1.2 0 1 1 1.4 1.2 a2.6 2.6 0 1 1 2.4 -3 a3.8 3.8 0 1 0 -1 4.6" fill="none" stroke="#7c7c7c" stroke-width="0.9"/></svg>
<div style="left:396px;top:494.9px;width:59px;height:10.6px;background:#0d0d0d;"></div>
<span class="t" style="left:401.5px;top:495px;font-size:8.4px;line-height:10.92px;color:#ececec;transform:scaleX(0.824);transform-origin:0 50%;">None</span>
<svg style="left:442.9px;top:497.47499999999997px;" width="7.6" height="4.75" viewBox="0 0 8 5"><path d="M1 0.8 L4 3.8 L7 0.8" fill="none" stroke="#ececec" stroke-width="1.5"/></svg>
<div style="left:2px;top:506.23px;width:466px;height:10.6px;background:#2d2d2d;"></div>
<div style="left:3.8px;top:506.23px;width:9.4px;height:10.6px;background:#0d0d0d;"></div>
<div style="left:14.2px;top:506.23px;width:9.2px;height:10.6px;background:#363636;"></div>
<div style="left:24.3px;top:506.23px;width:8.6px;height:10.6px;background:#0d0d0d;"></div>
<div style="left:33.9px;top:506.23px;width:8.6px;height:10.6px;background:#0d0d0d;"></div>
<svg style="left:4.2px;top:508.53px;" width="8.6" height="6" viewBox="0 0 10 7"><path d="M0.5 3.5 Q5 -1 9.5 3.5 Q5 8 0.5 3.5Z" fill="#e6e6e6"/><circle cx="5" cy="3.5" r="1.7" fill="#1a1a1a"/><circle cx="5" cy="3.5" r="0.7" fill="#e6e6e6"/></svg>
<svg style="left:49.5px;top:508.22999999999996px;" width="5" height="7" viewBox="0 0 5 7"><path d="M1 0.8 L3.9 3.5 L1 6.2" fill="none" stroke="#d8d8d8" stroke-width="1.3"/></svg>
<div style="left:57.8px;top:507.53000000000003px;width:8.2px;height:8.2px;background:#6b79ee;"></div>
<span class="t" style="left:72.3px;top:506px;font-size:8.3px;line-height:10.79px;color:#a8a8a8;transform:scaleX(0.866);transform-origin:0 50%;">57</span>
<svg style="left:91.8px;top:507.13px;" width="9" height="9" viewBox="0 0 9 9"><path d="M4.5 0.4 L5.7 3.2 L8.7 3.5 L6.4 5.5 L7.1 8.5 L4.5 6.9 L1.9 8.5 L2.6 5.5 L0.3 3.5 L3.3 3.2Z" fill="#d6d6d6"/></svg>
<span class="t" style="left:104px;top:506px;font-size:8.4px;line-height:10.92px;color:#e6e6e6;transform:scaleX(0.835);transform-origin:0 50%;">Shape Layer 7</span>
<svg style="left:179.2px;top:506.72999999999996px;" width="9" height="9" viewBox="0 0 9 9"><path d="M1 4.6 Q4.5 -1.5 8 4.6 Z" fill="#dcdcdc"/><path d="M0.3 5.6 H8.7 M4.5 0.8 V8 M2.6 6.5 V8 M6.4 6.5 V8" stroke="#dcdcdc" stroke-width="0.9" fill="none"/></svg>
<svg style="left:191.2px;top:508.53px;" width="6" height="6" viewBox="0 0 6 6"><circle cx="3" cy="3" r="1.6" fill="none" stroke="#5a5a5a" stroke-width="0.8"/></svg>
<svg style="left:199.5px;top:507.22999999999996px;" width="8.6" height="8.6" viewBox="0 0 8.6 8.6"><path d="M1.2 7.4 L7.4 1.2" stroke="#e0e0e0" stroke-width="1.1"/></svg>
<div style="left:230.4px;top:506.23px;width:7.6px;height:10.6px;background:#0d0d0d;"></div>
<div style="left:240.2px;top:506.23px;width:7.6px;height:10.6px;background:#0d0d0d;"></div>
<div style="left:250.0px;top:506.23px;width:7.6px;height:10.6px;background:#0d0d0d;"></div>
<div style="left:258.5px;top:506.23px;width:13px;height:10.6px;background:#393939;"></div>
<div style="left:272.5px;top:506.23px;width:28.7px;height:10.6px;background:#0d0d0d;"></div>
<span class="t" style="left:277.5px;top:506px;font-size:8.4px;line-height:10.92px;color:#ececec;transform:scaleX(0.829);transform-origin:0 50%;">Nc</span>
<svg style="left:289.5px;top:508.80499999999995px;" width="7.6" height="4.75" viewBox="0 0 8 5"><path d="M1 0.8 L4 3.8 L7 0.8" fill="none" stroke="#ececec" stroke-width="1.5"/></svg>
<div style="left:301.2px;top:506.23px;width:4.2px;height:10.6px;background:#393939;"></div>
<div style="left:305.4px;top:506.23px;width:8.6px;height:10.6px;background:#0d0d0d;"></div>
<svg style="left:317.5px;top:507.03px;" width="9" height="9" viewBox="0 0 9 9"><path d="M4.5 4.5 m-1.2 0 a1.2 1.2 0 1 1 1.4 1.2 a2.6 2.6 0 1 1 2.4 -3 a3.8 3.8 0 1 0 -1 4.6" fill="none" stroke="#9a9a9a" stroke-width="0.9"/></svg>
<div style="left:327.5px;top:506.23px;width:30px;height:10.6px;background:#0d0d0d;"></div>
<span class="t" style="left:333.5px;top:506px;font-size:8.4px;line-height:10.92px;color:#ececec;transform:scaleX(0.829);transform-origin:0 50%;">Nc</span>
<svg style="left:345.5px;top:508.80499999999995px;" width="7.6" height="4.75" viewBox="0 0 8 5"><path d="M1 0.8 L4 3.8 L7 0.8" fill="none" stroke="#ececec" stroke-width="1.5"/></svg>
<div style="left:359.5px;top:506.23px;width:36px;height:10.6px;background:#393939;"></div>
<svg style="left:383.2px;top:507.03px;" width="9" height="9" viewBox="0 0 9 9"><path d="M4.5 4.5 m-1.2 0 a1.2 1.2 0 1 1 1.4 1.2 a2.6 2.6 0 1 1 2.4 -3 a3.8 3.8 0 1 0 -1 4.6" fill="none" stroke="#7c7c7c" stroke-width="0.9"/></svg>
<div style="left:396px;top:506.23px;width:59px;height:10.6px;background:#0d0d0d;"></div>
<span class="t" style="left:401.5px;top:506px;font-size:8.4px;line-height:10.92px;color:#ececec;transform:scaleX(0.824);transform-origin:0 50%;">None</span>
<svg style="left:442.9px;top:508.80499999999995px;" width="7.6" height="4.75" viewBox="0 0 8 5"><path d="M1 0.8 L4 3.8 L7 0.8" fill="none" stroke="#ececec" stroke-width="1.5"/></svg>
<div style="left:2px;top:517.56px;width:466px;height:10.6px;background:#2d2d2d;"></div>
<div style="left:3.8px;top:517.56px;width:9.4px;height:10.6px;background:#0d0d0d;"></div>
<div style="left:14.2px;top:517.56px;width:9.2px;height:10.6px;background:#363636;"></div>
<div style="left:24.3px;top:517.56px;width:8.6px;height:10.6px;background:#0d0d0d;"></div>
<div style="left:33.9px;top:517.56px;width:8.6px;height:10.6px;background:#0d0d0d;"></div>
<svg style="left:4.2px;top:519.86px;" width="8.6" height="6" viewBox="0 0 10 7"><path d="M0.5 3.5 Q5 -1 9.5 3.5 Q5 8 0.5 3.5Z" fill="#e6e6e6"/><circle cx="5" cy="3.5" r="1.7" fill="#1a1a1a"/><circle cx="5" cy="3.5" r="0.7" fill="#e6e6e6"/></svg>
<svg style="left:34.8px;top:518.0600000000001px;" width="7" height="9" viewBox="0 0 7 9"><rect x="0.4" y="3.8" width="6.2" height="4.8" rx="0.6" fill="#e6e6e6"/><path d="M1.7 3.8 V2.6 Q1.7 0.8 3.5 0.8 Q5.3 0.8 5.3 2.6 V3.8" fill="none" stroke="#e6e6e6" stroke-width="1.1"/><rect x="3" y="5.2" width="1" height="2" fill="#1a1a1a"/></svg>
<svg style="left:49.5px;top:519.5600000000001px;" width="5" height="7" viewBox="0 0 5 7"><path d="M1 0.8 L3.9 3.5 L1 6.2" fill="none" stroke="#d8d8d8" stroke-width="1.3"/></svg>
<div style="left:57.8px;top:518.8599999999999px;width:8.2px;height:8.2px;background:#c4304e;"></div>
<span class="t" style="left:72.3px;top:518px;font-size:8.3px;line-height:10.79px;color:#a8a8a8;transform:scaleX(0.866);transform-origin:0 50%;">58</span>
<div style="left:92px;top:518.76px;width:8.4px;height:8.4px;background:#ffffff;"></div>
<span class="t" style="left:104px;top:518px;font-size:8.4px;line-height:10.92px;color:#e6e6e6;transform:scaleX(0.871);transform-origin:0 50%;">White Solid 1</span>
<svg style="left:179.2px;top:518.0600000000001px;" width="9" height="9" viewBox="0 0 9 9"><path d="M1 4.6 Q4.5 -1.5 8 4.6 Z" fill="#dcdcdc"/><path d="M0.3 5.6 H8.7 M4.5 0.8 V8 M2.6 6.5 V8 M6.4 6.5 V8" stroke="#dcdcdc" stroke-width="0.9" fill="none"/></svg>
<div style="left:190.2px;top:517.56px;width:8px;height:10.6px;background:#0d0d0d;"></div>
<svg style="left:199.5px;top:518.5600000000001px;" width="8.6" height="8.6" viewBox="0 0 8.6 8.6"><path d="M1.2 7.4 L7.4 1.2" stroke="#e0e0e0" stroke-width="1.1"/></svg>
<div style="left:230.4px;top:517.56px;width:7.6px;height:10.6px;background:#0d0d0d;"></div>
<div style="left:240.2px;top:517.56px;width:7.6px;height:10.6px;background:#0d0d0d;"></div>
<div style="left:250.0px;top:517.56px;width:7.6px;height:10.6px;background:#0d0d0d;"></div>
<div style="left:230.4px;top:517.56px;width:7.6px;height:10.6px;background:#2d2d2d;"></div>
<svg style="left:228.70000000000002px;top:517.76px;" width="10.2" height="10.2" viewBox="0 0 12 12"><g transform="rotate(40 6 6)" fill="none" stroke="#8e8e8e" stroke-width="1.1"><rect x="3.2" y="0.8" width="5.6" height="8" rx="2.8"/><path d="M4.5 2.5 V7 M6 2 V7.5 M7.5 2.5 V7"/><path d="M2.5 8 Q6 12 9.5 8"/></g></svg>
<div style="left:258.5px;top:517.56px;width:13px;height:10.6px;background:#393939;"></div>
<div style="left:272.5px;top:517.56px;width:28.7px;height:10.6px;background:#0d0d0d;"></div>
<span class="t" style="left:277.5px;top:518px;font-size:8.4px;line-height:10.92px;color:#ececec;transform:scaleX(0.829);transform-origin:0 50%;">Nc</span>
<svg style="left:289.5px;top:520.135px;" width="7.6" height="4.75" viewBox="0 0 8 5"><path d="M1 0.8 L4 3.8 L7 0.8" fill="none" stroke="#ececec" stroke-width="1.5"/></svg>
<div style="left:301.2px;top:517.56px;width:4.2px;height:10.6px;background:#393939;"></div>
<div style="left:305.4px;top:517.56px;width:8.6px;height:10.6px;background:#0d0d0d;"></div>
<svg style="left:317.5px;top:518.36px;" width="9" height="9" viewBox="0 0 9 9"><path d="M4.5 4.5 m-1.2 0 a1.2 1.2 0 1 1 1.4 1.2 a2.6 2.6 0 1 1 2.4 -3 a3.8 3.8 0 1 0 -1 4.6" fill="none" stroke="#9a9a9a" stroke-width="0.9"/></svg>
<div style="left:327.5px;top:517.56px;width:30px;height:10.6px;background:#0d0d0d;"></div>
<span class="t" style="left:333.5px;top:518px;font-size:8.4px;line-height:10.92px;color:#ececec;transform:scaleX(0.829);transform-origin:0 50%;">Nc</span>
<svg style="left:345.5px;top:520.135px;" width="7.6" height="4.75" viewBox="0 0 8 5"><path d="M1 0.8 L4 3.8 L7 0.8" fill="none" stroke="#ececec" stroke-width="1.5"/></svg>
<div style="left:359.5px;top:517.56px;width:36px;height:10.6px;background:#393939;"></div>
<svg style="left:383.2px;top:518.36px;" width="9" height="9" viewBox="0 0 9 9"><path d="M4.5 4.5 m-1.2 0 a1.2 1.2 0 1 1 1.4 1.2 a2.6 2.6 0 1 1 2.4 -3 a3.8 3.8 0 1 0 -1 4.6" fill="none" stroke="#7c7c7c" stroke-width="0.9"/></svg>
<div style="left:396px;top:517.56px;width:59px;height:10.6px;background:#0d0d0d;"></div>
<span class="t" style="left:401.5px;top:518px;font-size:8.4px;line-height:10.92px;color:#ececec;transform:scaleX(0.824);transform-origin:0 50%;">None</span>
<svg style="left:442.9px;top:520.135px;" width="7.6" height="4.75" viewBox="0 0 8 5"><path d="M1 0.8 L4 3.8 L7 0.8" fill="none" stroke="#ececec" stroke-width="1.5"/></svg>
<div style="left:2px;top:528.89px;width:466px;height:10.6px;background:#2d2d2d;"></div>
<div style="left:3.8px;top:528.89px;width:9.4px;height:10.6px;background:#0d0d0d;"></div>
<div style="left:14.2px;top:528.89px;width:9.2px;height:10.6px;background:#363636;"></div>
<div style="left:24.3px;top:528.89px;width:8.6px;height:10.6px;background:#0d0d0d;"></div>
<div style="left:33.9px;top:528.89px;width:8.6px;height:10.6px;background:#0d0d0d;"></div>
<svg style="left:4.2px;top:531.1899999999999px;" width="8.6" height="6" viewBox="0 0 10 7"><path d="M0.5 3.5 Q5 -1 9.5 3.5 Q5 8 0.5 3.5Z" fill="#e6e6e6"/><circle cx="5" cy="3.5" r="1.7" fill="#1a1a1a"/><circle cx="5" cy="3.5" r="0.7" fill="#e6e6e6"/></svg>
<svg style="left:13.5px;top:530.1899999999999px;" width="10" height="8" viewBox="0 0 10 8"><path d="M0.5 2.8 H2.4 L5 0.6 V7.4 L2.4 5.2 H0.5Z" fill="#e6e6e6"/><path d="M6.3 2 Q7.6 4 6.3 6 M7.8 0.8 Q9.8 4 7.8 7.2" fill="none" stroke="#e6e6e6" stroke-width="0.8"/></svg>
<svg style="left:34.8px;top:529.39px;" width="7" height="9" viewBox="0 0 7 9"><rect x="0.4" y="3.8" width="6.2" height="4.8" rx="0.6" fill="#e6e6e6"/><path d="M1.7 3.8 V2.6 Q1.7 0.8 3.5 0.8 Q5.3 0.8 5.3 2.6 V3.8" fill="none" stroke="#e6e6e6" stroke-width="1.1"/><rect x="3" y="5.2" width="1" height="2" fill="#1a1a1a"/></svg>
<svg style="left:48.5px;top:531.89px;" width="7" height="5" viewBox="0 0 7 5"><path d="M0.8 1 L3.5 3.9 L6.2 1" fill="none" stroke="#d8d8d8" stroke-width="1.3"/></svg>
<div style="left:57.8px;top:530.1899999999999px;width:8.2px;height:8.2px;background:#cfddd5;"></div>
<span class="t" style="left:72.3px;top:529px;font-size:8.3px;line-height:10.79px;color:#a8a8a8;transform:scaleX(0.866);transform-origin:0 50%;">59</span>
<svg style="left:92.3px;top:529.49px;" width="8" height="9.8" viewBox="0 0 8 9.8"><path d="M0.4 0.4 H5.6 L7.6 2.4 V9.4 H0.4Z" fill="#e8f4f0"/><rect x="1.6" y="3.6" width="4.6" height="4.2" rx="0.6" fill="#2aa889"/><rect x="2.8" y="4.8" width="2.2" height="1.8" fill="#e8f4f0"/></svg>
<span class="t" style="left:104px;top:529px;font-size:8.4px;line-height:10.92px;color:#e6e6e6;transform:scaleX(0.860);transform-origin:0 50%;">Timeline_1.mp4</span>
<svg style="left:179.2px;top:529.39px;" width="9" height="9" viewBox="0 0 9 9"><path d="M1 4.6 Q4.5 -1.5 8 4.6 Z" fill="#dcdcdc"/><path d="M0.3 5.6 H8.7 M4.5 0.8 V8 M2.6 6.5 V8 M6.4 6.5 V8" stroke="#dcdcdc" stroke-width="0.9" fill="none"/></svg>
<svg style="left:199.5px;top:529.89px;" width="8.6" height="8.6" viewBox="0 0 8.6 8.6"><path d="M1.2 7.4 L7.4 1.2" stroke="#e0e0e0" stroke-width="1.1"/></svg>
<div style="left:220.3px;top:528.89px;width:7.6px;height:10.6px;background:#0d0d0d;"></div>
<div style="left:230.4px;top:528.89px;width:7.6px;height:10.6px;background:#0d0d0d;"></div>
<div style="left:240.2px;top:528.89px;width:7.6px;height:10.6px;background:#0d0d0d;"></div>
<div style="left:250.0px;top:528.89px;width:7.6px;height:10.6px;background:#0d0d0d;"></div>
<div style="left:230.4px;top:528.89px;width:7.6px;height:10.6px;background:#2d2d2d;"></div>
<svg style="left:228.70000000000002px;top:529.0899999999999px;" width="10.2" height="10.2" viewBox="0 0 12 12"><g transform="rotate(40 6 6)" fill="none" stroke="#8e8e8e" stroke-width="1.1"><rect x="3.2" y="0.8" width="5.6" height="8" rx="2.8"/><path d="M4.5 2.5 V7 M6 2 V7.5 M7.5 2.5 V7"/><path d="M2.5 8 Q6 12 9.5 8"/></g></svg>
<div style="left:258.5px;top:528.89px;width:13px;height:10.6px;background:#393939;"></div>
<div style="left:272.5px;top:528.89px;width:28.7px;height:10.6px;background:#0d0d0d;"></div>
<span class="t" style="left:277.5px;top:529px;font-size:8.4px;line-height:10.92px;color:#ececec;transform:scaleX(0.829);transform-origin:0 50%;">Nc</span>
<svg style="left:289.5px;top:531.4649999999999px;" width="7.6" height="4.75" viewBox="0 0 8 5"><path d="M1 0.8 L4 3.8 L7 0.8" fill="none" stroke="#ececec" stroke-width="1.5"/></svg>
<div style="left:301.2px;top:528.89px;width:4.2px;height:10.6px;background:#393939;"></div>
<div style="left:305.4px;top:528.89px;width:8.6px;height:10.6px;background:#0d0d0d;"></div>
<svg style="left:317.5px;top:529.6899999999999px;" width="9" height="9" viewBox="0 0 9 9"><path d="M4.5 4.5 m-1.2 0 a1.2 1.2 0 1 1 1.4 1.2 a2.6 2.6 0 1 1 2.4 -3 a3.8 3.8 0 1 0 -1 4.6" fill="none" stroke="#9a9a9a" stroke-width="0.9"/></svg>
<div style="left:327.5px;top:528.89px;width:30px;height:10.6px;background:#0d0d0d;"></div>
<span class="t" style="left:333.5px;top:529px;font-size:8.4px;line-height:10.92px;color:#ececec;transform:scaleX(0.829);transform-origin:0 50%;">Nc</span>
<svg style="left:345.5px;top:531.4649999999999px;" width="7.6" height="4.75" viewBox="0 0 8 5"><path d="M1 0.8 L4 3.8 L7 0.8" fill="none" stroke="#ececec" stroke-width="1.5"/></svg>
<div style="left:359.5px;top:528.89px;width:36px;height:10.6px;background:#393939;"></div>
<svg style="left:383.2px;top:529.6899999999999px;" width="9" height="9" viewBox="0 0 9 9"><path d="M4.5 4.5 m-1.2 0 a1.2 1.2 0 1 1 1.4 1.2 a2.6 2.6 0 1 1 2.4 -3 a3.8 3.8 0 1 0 -1 4.6" fill="none" stroke="#7c7c7c" stroke-width="0.9"/></svg>
<div style="left:396px;top:528.89px;width:59px;height:10.6px;background:#0d0d0d;"></div>
<span class="t" style="left:401.5px;top:529px;font-size:8.4px;line-height:10.92px;color:#ececec;transform:scaleX(0.824);transform-origin:0 50%;">None</span>
<svg style="left:442.9px;top:531.4649999999999px;" width="7.6" height="4.75" viewBox="0 0 8 5"><path d="M1 0.8 L4 3.8 L7 0.8" fill="none" stroke="#ececec" stroke-width="1.5"/></svg>
<svg style="left:60.3px;top:542.22px;" width="5" height="7" viewBox="0 0 5 7"><path d="M1 0.8 L3.9 3.5 L1 6.2" fill="none" stroke="#d8d8d8" stroke-width="1.3"/></svg>
<span class="t" style="left:72.2px;top:541px;font-size:8.4px;line-height:10.92px;color:#dcdcdc;transform:scaleX(0.872);transform-origin:0 50%;">Transform</span>
<span class="t" style="left:179.6px;top:541px;font-size:8.4px;line-height:10.92px;color:#3f8fe8;transform:scaleX(0.799);transform-origin:0 50%;">Reset</span>
<svg style="left:60.3px;top:554.5500000000001px;" width="7" height="5" viewBox="0 0 7 5"><path d="M0.8 1 L3.5 3.9 L6.2 1" fill="none" stroke="#d8d8d8" stroke-width="1.3"/></svg>
<span class="t" style="left:72.2px;top:552px;font-size:8.4px;line-height:10.92px;color:#dcdcdc;transform:scaleX(0.864);transform-origin:0 50%;">Audio</span>
<svg style="left:80.9px;top:563.18px;" width="9" height="10" viewBox="0 0 9 10"><path d="M4.5 2.6 L7.6 4.4 V7.2 L6 9 H3 L1.4 7.2 V4.4 Z" fill="none" stroke="#cfcfcf" stroke-width="0.9"/><path d="M3.2 0.9 H5.8 M4.5 0.9 V2.4" stroke="#cfcfcf" stroke-width="0.9"/></svg>
<span class="t" style="left:94.2px;top:564px;font-size:8.4px;line-height:10.92px;color:#dcdcdc;transform:scaleX(0.855);transform-origin:0 50%;">Audio Levels</span>
<span class="t" style="left:180.8px;top:564px;font-size:8.4px;line-height:10.92px;color:#3f8fe8;transform:scaleX(0.802);transform-origin:0 50%;">+0.00</span>
<span class="t" style="left:198px;top:564px;font-size:8.4px;line-height:10.92px;color:#c8c8c8;transform:scaleX(0.849);transform-origin:0 50%;">dB</span>
<svg style="left:392.0px;top:563.68px;" width="9" height="9" viewBox="0 0 9 9"><path d="M4.5 4.5 m-1.2 0 a1.2 1.2 0 1 1 1.4 1.2 a2.6 2.6 0 1 1 2.4 -3 a3.8 3.8 0 1 0 -1 4.6" fill="none" stroke="#727272" stroke-width="0.9"/></svg>
<svg style="left:71.9px;top:577.21px;" width="7" height="5" viewBox="0 0 7 5"><path d="M0.8 1 L3.5 3.9 L6.2 1" fill="none" stroke="#d8d8d8" stroke-width="1.3"/></svg>
<span class="t" style="left:83.8px;top:575px;font-size:8.4px;line-height:10.92px;color:#dcdcdc;transform:scaleX(0.872);transform-origin:0 50%;">Waveform</span>
<span class="t" style="left:94.8px;top:603px;font-size:8.4px;line-height:10.92px;color:#dcdcdc;transform:scaleX(0.872);transform-origin:0 50%;">Waveform</span>
<div style="left:2px;top:630.5px;width:466px;height:10.6px;background:#2d2d2d;"></div>
<div style="left:3.8px;top:630.5px;width:9.4px;height:10.6px;background:#0d0d0d;"></div>
<div style="left:14.2px;top:630.5px;width:9.2px;height:10.6px;background:#363636;"></div>
<div style="left:24.3px;top:630.5px;width:8.6px;height:10.6px;background:#0d0d0d;"></div>
<div style="left:33.9px;top:630.5px;width:8.6px;height:10.6px;background:#0d0d0d;"></div>
<svg style="left:4.2px;top:632.8px;" width="8.6" height="6" viewBox="0 0 10 7"><path d="M0.5 3.5 Q5 -1 9.5 3.5 Q5 8 0.5 3.5Z" fill="#e6e6e6"/><circle cx="5" cy="3.5" r="1.7" fill="#1a1a1a"/><circle cx="5" cy="3.5" r="0.7" fill="#e6e6e6"/></svg>
<svg style="left:13.5px;top:631.8px;" width="10" height="8" viewBox="0 0 10 8"><path d="M0.5 2.8 H2.4 L5 0.6 V7.4 L2.4 5.2 H0.5Z" fill="#e6e6e6"/><path d="M6.3 2 Q7.6 4 6.3 6 M7.8 0.8 Q9.8 4 7.8 7.2" fill="none" stroke="#e6e6e6" stroke-width="0.8"/></svg>
<svg style="left:48.5px;top:633.5px;" width="7" height="5" viewBox="0 0 7 5"><path d="M0.8 1 L3.5 3.9 L6.2 1" fill="none" stroke="#d8d8d8" stroke-width="1.3"/></svg>
<div style="left:57.8px;top:631.8px;width:8.2px;height:8.2px;background:#cfddd5;"></div>
<span class="t" style="left:72.3px;top:631px;font-size:8.3px;line-height:10.79px;color:#a8a8a8;transform:scaleX(0.866);transform-origin:0 50%;">60</span>
<svg style="left:92.3px;top:631.1px;" width="8" height="9.8" viewBox="0 0 8 9.8"><path d="M0.4 0.4 H5.6 L7.6 2.4 V9.4 H0.4Z" fill="#e8f4f0"/><rect x="1.6" y="3.6" width="4.6" height="4.2" rx="0.6" fill="#2aa889"/><rect x="2.8" y="4.8" width="2.2" height="1.8" fill="#e8f4f0"/></svg>
<span class="t" style="left:104px;top:631px;font-size:8.4px;line-height:10.92px;color:#e6e6e6;transform:scaleX(0.895);transform-origin:0 50%;">Timeline 1.mp4</span>
<svg style="left:179.2px;top:631.0px;" width="9" height="9" viewBox="0 0 9 9"><path d="M1 4.6 Q4.5 -1.5 8 4.6 Z" fill="#dcdcdc"/><path d="M0.3 5.6 H8.7 M4.5 0.8 V8 M2.6 6.5 V8 M6.4 6.5 V8" stroke="#dcdcdc" stroke-width="0.9" fill="none"/></svg>
<svg style="left:199.5px;top:631.5px;" width="8.6" height="8.6" viewBox="0 0 8.6 8.6"><path d="M1.2 7.4 L7.4 1.2" stroke="#e0e0e0" stroke-width="1.1"/></svg>
<div style="left:220.3px;top:630.5px;width:7.6px;height:10.6px;background:#0d0d0d;"></div>
<div style="left:230.4px;top:630.5px;width:7.6px;height:10.6px;background:#0d0d0d;"></div>
<div style="left:240.2px;top:630.5px;width:7.6px;height:10.6px;background:#0d0d0d;"></div>
<div style="left:250.0px;top:630.5px;width:7.6px;height:10.6px;background:#0d0d0d;"></div>
<div style="left:230.4px;top:630.5px;width:7.6px;height:10.6px;background:#2d2d2d;"></div>
<svg style="left:228.70000000000002px;top:630.6999999999999px;" width="10.2" height="10.2" viewBox="0 0 12 12"><g transform="rotate(40 6 6)" fill="none" stroke="#8e8e8e" stroke-width="1.1"><rect x="3.2" y="0.8" width="5.6" height="8" rx="2.8"/><path d="M4.5 2.5 V7 M6 2 V7.5 M7.5 2.5 V7"/><path d="M2.5 8 Q6 12 9.5 8"/></g></svg>
<div style="left:258.5px;top:630.5px;width:13px;height:10.6px;background:#393939;"></div>
<div style="left:272.5px;top:630.5px;width:28.7px;height:10.6px;background:#0d0d0d;"></div>
<span class="t" style="left:277.5px;top:631px;font-size:8.4px;line-height:10.92px;color:#ececec;transform:scaleX(0.829);transform-origin:0 50%;">Nc</span>
<svg style="left:289.5px;top:633.0749999999999px;" width="7.6" height="4.75" viewBox="0 0 8 5"><path d="M1 0.8 L4 3.8 L7 0.8" fill="none" stroke="#ececec" stroke-width="1.5"/></svg>
<div style="left:301.2px;top:630.5px;width:4.2px;height:10.6px;background:#393939;"></div>
<div style="left:305.4px;top:630.5px;width:8.6px;height:10.6px;background:#0d0d0d;"></div>
<svg style="left:317.5px;top:631.3px;" width="9" height="9" viewBox="0 0 9 9"><path d="M4.5 4.5 m-1.2 0 a1.2 1.2 0 1 1 1.4 1.2 a2.6 2.6 0 1 1 2.4 -3 a3.8 3.8 0 1 0 -1 4.6" fill="none" stroke="#9a9a9a" stroke-width="0.9"/></svg>
<div style="left:327.5px;top:630.5px;width:30px;height:10.6px;background:#0d0d0d;"></div>
<span class="t" style="left:333.5px;top:631px;font-size:8.4px;line-height:10.92px;color:#ececec;transform:scaleX(0.829);transform-origin:0 50%;">Nc</span>
<svg style="left:345.5px;top:633.0749999999999px;" width="7.6" height="4.75" viewBox="0 0 8 5"><path d="M1 0.8 L4 3.8 L7 0.8" fill="none" stroke="#ececec" stroke-width="1.5"/></svg>
<div style="left:359.5px;top:630.5px;width:36px;height:10.6px;background:#393939;"></div>
<svg style="left:383.2px;top:631.3px;" width="9" height="9" viewBox="0 0 9 9"><path d="M4.5 4.5 m-1.2 0 a1.2 1.2 0 1 1 1.4 1.2 a2.6 2.6 0 1 1 2.4 -3 a3.8 3.8 0 1 0 -1 4.6" fill="none" stroke="#7c7c7c" stroke-width="0.9"/></svg>
<div style="left:396px;top:630.5px;width:59px;height:10.6px;background:#0d0d0d;"></div>
<span class="t" style="left:401.5px;top:631px;font-size:8.4px;line-height:10.92px;color:#ececec;transform:scaleX(0.824);transform-origin:0 50%;">None</span>
<svg style="left:442.9px;top:633.0749999999999px;" width="7.6" height="4.75" viewBox="0 0 8 5"><path d="M1 0.8 L4 3.8 L7 0.8" fill="none" stroke="#ececec" stroke-width="1.5"/></svg>
<svg style="left:60.3px;top:644.3000000000001px;" width="5" height="7" viewBox="0 0 5 7"><path d="M1 0.8 L3.9 3.5 L1 6.2" fill="none" stroke="#d8d8d8" stroke-width="1.3"/></svg>
<span class="t" style="left:72.2px;top:643px;font-size:8.4px;line-height:10.92px;color:#dcdcdc;transform:scaleX(0.872);transform-origin:0 50%;">Transform</span>
<span class="t" style="left:179.6px;top:643px;font-size:8.4px;line-height:10.92px;color:#3f8fe8;transform:scaleX(0.799);transform-origin:0 50%;">Reset</span>
<svg style="left:60.3px;top:656.6300000000001px;" width="7" height="5" viewBox="0 0 7 5"><path d="M0.8 1 L3.5 3.9 L6.2 1" fill="none" stroke="#d8d8d8" stroke-width="1.3"/></svg>
<span class="t" style="left:72.2px;top:655px;font-size:8.4px;line-height:10.92px;color:#dcdcdc;transform:scaleX(0.864);transform-origin:0 50%;">Audio</span>
<svg style="left:80.9px;top:665.26px;" width="9" height="10" viewBox="0 0 9 10"><path d="M4.5 2.6 L7.6 4.4 V7.2 L6 9 H3 L1.4 7.2 V4.4 Z" fill="none" stroke="#cfcfcf" stroke-width="0.9"/><path d="M3.2 0.9 H5.8 M4.5 0.9 V2.4" stroke="#cfcfcf" stroke-width="0.9"/></svg>
<span class="t" style="left:94.2px;top:666px;font-size:8.4px;line-height:10.92px;color:#dcdcdc;transform:scaleX(0.855);transform-origin:0 50%;">Audio Levels</span>
<span class="t" style="left:180.8px;top:666px;font-size:8.4px;line-height:10.92px;color:#3f8fe8;transform:scaleX(0.802);transform-origin:0 50%;">+0.00</span>
<span class="t" style="left:198px;top:666px;font-size:8.4px;line-height:10.92px;color:#c8c8c8;transform:scaleX(0.849);transform-origin:0 50%;">dB</span>
<svg style="left:392.0px;top:665.76px;" width="9" height="9" viewBox="0 0 9 9"><path d="M4.5 4.5 m-1.2 0 a1.2 1.2 0 1 1 1.4 1.2 a2.6 2.6 0 1 1 2.4 -3 a3.8 3.8 0 1 0 -1 4.6" fill="none" stroke="#727272" stroke-width="0.9"/></svg>
<div style="left:2px;top:392.6px;width:466px;height:0.7px;background:#191919;"></div>
<div style="left:2px;top:415.3px;width:466px;height:0.7px;background:#191919;"></div>
<div style="left:2px;top:460.6px;width:466px;height:0.7px;background:#191919;"></div>
<div style="left:2px;top:551.2px;width:466px;height:0.7px;background:#191919;"></div>
<div style="left:2px;top:562.5px;width:466px;height:0.7px;background:#191919;"></div>
<div style="left:2px;top:573.9px;width:466px;height:0.7px;background:#191919;"></div>
<div style="left:2px;top:585.2px;width:466px;height:0.7px;background:#191919;"></div>
<div style="left:2px;top:653.3px;width:466px;height:0.7px;background:#191919;"></div>
<div style="left:2px;top:664.6px;width:466px;height:0.7px;background:#191919;"></div>
<div style="left:2px;top:676px;width:1276.2px;height:10.5px;background:#1c1c1c;"></div>
<div style="left:3.5px;top:676.5px;width:11.5px;height:11px;background:#383838;border-radius:1.5px;"></div>
<div style="left:16.5px;top:676.5px;width:11.5px;height:11px;background:#383838;border-radius:1.5px;"></div>
<svg style="left:5px;top:678px;" width="9" height="8" viewBox="0 0 9 8"><rect x="0.5" y="0.5" width="5" height="4.5" fill="none" stroke="#bdbdbd" stroke-width="0.9"/><rect x="3" y="3" width="5" height="4.5" fill="#8a8a8a" stroke="#bdbdbd" stroke-width="0.7"/></svg>
<svg style="left:18px;top:678px;" width="9" height="8" viewBox="0 0 9 8"><rect x="0.5" y="0.5" width="5" height="4.5" fill="none" stroke="#bdbdbd" stroke-width="0.9"/><circle cx="5.5" cy="5" r="2.5" fill="none" stroke="#bdbdbd" stroke-width="0.9"/></svg>
<span class="t" style="left:32.63px;top:678px;font-size:8px;line-height:10.4px;color:#bdbdbd;">{}</span>
<svg style="left:43px;top:678px;" width="10" height="8" viewBox="0 0 10 8"><path d="M0.5 1 H3.5 L4.5 2 H8 V7.5 H0.5Z" fill="#bdbdbd"/><path d="M6 4.5 H9.5 M8 3 V6" stroke="#777" stroke-width="0.8"/></svg>
<span class="t" style="left:70.4px;top:677px;font-size:8.4px;line-height:10.92px;color:#c6c6c6;transform:scaleX(0.859);transform-origin:0 50%;">Frame Render Time:</span>
<span class="t" style="left:139.2px;top:677px;font-size:8.4px;line-height:10.92px;color:#4d7a64;transform:scaleX(0.885);transform-origin:0 50%;">1ms</span>
<div style="left:468px;top:343px;width:802px;height:333px;background:#1f1f1f;"></div>
<div style="left:468.6px;top:343px;width:1px;height:333px;background:#0f0f0f;"></div>
<div style="left:473.5px;top:345.6px;width:352px;height:6.6px;background:linear-gradient(90deg,#3c3c3c,#505050 40%,#666 100%);border-radius:2px;"></div>
<div style="left:825px;top:345.8px;width:3px;height:6.6px;background:#3b8eea;border-radius:0 2px 2px 0;"></div>
<span class="t" style="left:498.15px;top:353px;font-size:7px;line-height:9.1px;color:#b8b8b8;">30s</span>
<div style="left:503.4px;top:362.5px;width:0.9px;height:2px;background:#9a9a9a;"></div>
<span class="t" style="left:550.55px;top:353px;font-size:7px;line-height:9.1px;color:#b8b8b8;">32s</span>
<div style="left:555.8px;top:362.5px;width:0.9px;height:2px;background:#9a9a9a;"></div>
<span class="t" style="left:603.05px;top:353px;font-size:7px;line-height:9.1px;color:#b8b8b8;">34s</span>
<div style="left:608.3px;top:362.5px;width:0.9px;height:2px;background:#9a9a9a;"></div>
<span class="t" style="left:655.45px;top:353px;font-size:7px;line-height:9.1px;color:#b8b8b8;">36s</span>
<div style="left:660.7px;top:362.5px;width:0.9px;height:2px;background:#9a9a9a;"></div>
<span class="t" style="left:707.95px;top:353px;font-size:7px;line-height:9.1px;color:#b8b8b8;">38s</span>
<div style="left:713.2px;top:362.5px;width:0.9px;height:2px;background:#9a9a9a;"></div>
<span class="t" style="left:760.35px;top:353px;font-size:7px;line-height:9.1px;color:#b8b8b8;">40s</span>
<div style="left:765.6px;top:362.5px;width:0.9px;height:2px;background:#9a9a9a;"></div>
<span class="t" style="left:812.75px;top:353px;font-size:7px;line-height:9.1px;color:#b8b8b8;">42s</span>
<div style="left:818.0px;top:362px;width:0.9px;height:6.5px;background:#8a8a8a;"></div>
<span class="t" style="left:865.25px;top:353px;font-size:7px;line-height:9.1px;color:#b8b8b8;">44s</span>
<div style="left:870.5px;top:362px;width:0.9px;height:6.5px;background:#8a8a8a;"></div>
<span class="t" style="left:917.65px;top:353px;font-size:7px;line-height:9.1px;color:#b8b8b8;">46s</span>
<div style="left:922.9px;top:362px;width:0.9px;height:6.5px;background:#8a8a8a;"></div>
<span class="t" style="left:970.15px;top:353px;font-size:7px;line-height:9.1px;color:#b8b8b8;">48s</span>
<div style="left:975.4px;top:362px;width:0.9px;height:6.5px;background:#8a8a8a;"></div>
<span class="t" style="left:1022.55px;top:353px;font-size:7px;line-height:9.1px;color:#b8b8b8;">50s</span>
<div style="left:1027.8px;top:362px;width:0.9px;height:6.5px;background:#8a8a8a;"></div>
<span class="t" style="left:1074.95px;top:353px;font-size:7px;line-height:9.1px;color:#b8b8b8;">52s</span>
<div style="left:1080.2px;top:362px;width:0.9px;height:6.5px;background:#8a8a8a;"></div>
<span class="t" style="left:1127.45px;top:353px;font-size:7px;line-height:9.1px;color:#b8b8b8;">54s</span>
<div style="left:1132.7px;top:362px;width:0.9px;height:6.5px;background:#8a8a8a;"></div>
<span class="t" style="left:1179.85px;top:353px;font-size:7px;line-height:9.1px;color:#b8b8b8;">56s</span>
<div style="left:1185.1px;top:362px;width:0.9px;height:6.5px;background:#8a8a8a;"></div>
<span class="t" style="left:1232.35px;top:353px;font-size:7px;line-height:9.1px;color:#b8b8b8;">58s</span>
<div style="left:1237.6px;top:362px;width:0.9px;height:6.5px;background:#8a8a8a;"></div>
<div style="left:469.5px;top:365.3px;width:327px;height:10px;background:#6c6c6c;"></div>
<div style="left:796px;top:365.3px;width:2.6px;height:10px;background:#4a8fe0;"></div>
<svg style="left:538.5px;top:369.5px;" width="7" height="6" viewBox="0 0 7 6"><path d="M3.5 0.3 L6.7 5.7 H0.3Z" fill="#e8e8e8"/></svg>
<div style="left:543px;top:366px;width:15px;height:7.3px;background:#dedede;border-radius:1px;"></div>
<span class="t" style="left:547.05px;top:366px;font-size:6.2px;line-height:8.06px;color:#2a2a2a;">18</span>
<div style="left:470px;top:379.3px;width:797px;height:0.9px;background:#454545;"></div>
<div style="left:470px;top:376px;width:797px;height:3px;background:#161616;"></div>
<div style="left:470px;top:392.0px;width:797px;height:1.2px;background:#161616;"></div>
<div style="left:470px;top:414.7px;width:797px;height:1.2px;background:#161616;"></div>
<div style="left:470px;top:426.0px;width:797px;height:1.2px;background:#161616;"></div>
<div style="left:470px;top:460.0px;width:797px;height:1.2px;background:#161616;"></div>
<div style="left:470px;top:471.3px;width:797px;height:1.2px;background:#161616;"></div>
<div style="left:470px;top:550.6px;width:797px;height:1.2px;background:#161616;"></div>
<div style="left:470px;top:561.9px;width:797px;height:1.2px;background:#161616;"></div>
<div style="left:470px;top:573.3px;width:797px;height:1.2px;background:#161616;"></div>
<div style="left:470px;top:584.6px;width:797px;height:1.2px;background:#161616;"></div>
<div style="left:470px;top:652.9px;width:797px;height:1.2px;background:#161616;"></div>
<div style="left:470px;top:664.2px;width:797px;height:1.2px;background:#161616;"></div>
<div style="left:470px;top:630.2px;width:797px;height:0.6px;background:#141414;"></div>
<div style="left:460px;top:393.13px;width:10px;height:10.2px;background:#363636;"></div>
<div style="left:470px;top:393.13px;width:55.5px;height:10.2px;background:#8b3847;"></div>
<div style="left:525.5px;top:393.13px;width:742.5px;height:10.2px;background:#313131;"></div>
<div style="left:460px;top:427.12px;width:10px;height:10.2px;background:#444;"></div>
<div style="left:470px;top:427.12px;width:55.5px;height:10.2px;background:#9c9486;"></div>
<div style="left:525.5px;top:427.12px;width:742.5px;height:10.2px;background:#4f4d48;"></div>
<div style="left:460px;top:438.45px;width:10px;height:10.2px;background:#363636;"></div>
<div style="left:470px;top:438.45px;width:61.5px;height:10.2px;background:#373533;"></div>
<div style="left:531.5px;top:438.45px;width:26.0px;height:10.2px;background:#8b3847;"></div>
<div style="left:557.5px;top:438.45px;width:710.5px;height:10.2px;background:#373533;"></div>
<div style="left:460px;top:472.44px;width:10px;height:10.2px;background:#4a4a4a;"></div>
<div style="left:470px;top:472.44px;width:60px;height:10.2px;background:#484848;"></div>
<div style="left:530px;top:472.44px;width:60px;height:10.2px;background:#b7ac9a;"></div>
<div style="left:590px;top:472.44px;width:678px;height:10.2px;background:#7b7a73;"></div>
<div style="left:460px;top:483.77px;width:10px;height:10.2px;background:#363636;"></div>
<div style="left:470px;top:483.77px;width:114.5px;height:10.2px;background:#313131;"></div>
<div style="left:584.5px;top:483.77px;width:5.5px;height:10.2px;background:#5f6b67;"></div>
<div style="left:590px;top:483.77px;width:87.7px;height:10.2px;background:#919d99;"></div>
<div style="left:677.7px;top:483.77px;width:252.8px;height:10.2px;background:#4c524a;"></div>
<div style="left:930.5px;top:483.77px;width:337.5px;height:10.2px;background:#343930;"></div>
<div style="left:460px;top:495.1px;width:10px;height:10.2px;background:#363636;"></div>
<div style="left:470px;top:495.1px;width:207.7px;height:10.2px;background:#313131;"></div>
<div style="left:677.7px;top:495.1px;width:590.3px;height:10.2px;background:#515992;"></div>
<div style="left:460px;top:506.43px;width:10px;height:10.2px;background:#363636;"></div>
<div style="left:470px;top:506.43px;width:120px;height:10.2px;background:#313131;"></div>
<div style="left:590px;top:506.43px;width:87.7px;height:10.2px;background:#515992;"></div>
<div style="left:677.7px;top:506.43px;width:590.3px;height:10.2px;background:#31362f;"></div>
<div style="left:460px;top:517.76px;width:10px;height:10.2px;background:#55303a;"></div>
<div style="left:470px;top:517.76px;width:798px;height:10.2px;background:#772a38;"></div>
<div style="left:460px;top:529.09px;width:10px;height:10.2px;background:#4a4a4a;"></div>
<div style="left:470px;top:529.09px;width:335.5px;height:10.2px;background:#8a9492;"></div>
<div style="left:805.5px;top:529.09px;width:462.5px;height:10.2px;background:#313131;"></div>
<div style="left:460px;top:630.7px;width:10px;height:10.2px;background:#3f3f3f;"></div>
<div style="left:470px;top:630.7px;width:585px;height:10.2px;background:#4d5050;"></div>
<div style="left:1055px;top:630.7px;width:213px;height:10.2px;background:#333333;"></div>
<div style="left:470px;top:380.2px;width:327px;height:295.8px;background:rgba(255,255,255,0.042);"></div>
<svg style="left:497px;top:405.56px;" width="6" height="8" viewBox="0 0 6 8"><path d="M0.3 0.3 H5.7 L3.9 4 L5.7 7.7 H0.3 L2.1 4Z" fill="#d6d6d6"/></svg>
<svg style="left:520.5px;top:405.56px;" width="6" height="8" viewBox="0 0 6 8"><path d="M0.3 0.3 H5.7 L3.9 4 L5.7 7.7 H0.3 L2.1 4Z" fill="#d6d6d6"/></svg>
<svg style="left:529px;top:450.88px;" width="6" height="8" viewBox="0 0 6 8"><path d="M0.3 0.3 H5.7 L3.9 4 L5.7 7.7 H0.3 L2.1 4Z" fill="#d6d6d6"/></svg>
<svg style="left:529px;top:462.21px;" width="6" height="8" viewBox="0 0 6 8"><path d="M0.3 0.3 H5.7 L3.9 4 L5.7 7.7 H0.3 L2.1 4Z" fill="#d6d6d6"/></svg>
<svg style="left:548.3px;top:450.88px;" width="6" height="8" viewBox="0 0 6 8"><path d="M0.3 0.3 H5.7 L3.9 4 L5.7 7.7 H0.3 L2.1 4Z" fill="#d6d6d6"/></svg>
<svg style="left:548.3px;top:462.21px;" width="6" height="8" viewBox="0 0 6 8"><path d="M0.3 0.3 H5.7 L3.9 4 L5.7 7.7 H0.3 L2.1 4Z" fill="#d6d6d6"/></svg>
<svg style="left:597.4px;top:541.02px;" width="4" height="9" viewBox="0 0 4 9"><path d="M0.4 0.6 H3.6 M2 0.6 V8.4 M0.4 8.4 H3.6" stroke="#c2c2c2" stroke-width="1" fill="none"/></svg>
<svg style="left:597.4px;top:552.3499999999999px;" width="4" height="9" viewBox="0 0 4 9"><path d="M0.4 0.6 H3.6 M2 0.6 V8.4 M0.4 8.4 H3.6" stroke="#c2c2c2" stroke-width="1" fill="none"/></svg>
<svg style="left:597.4px;top:563.68px;" width="4" height="9" viewBox="0 0 4 9"><path d="M0.4 0.6 H3.6 M2 0.6 V8.4 M0.4 8.4 H3.6" stroke="#c2c2c2" stroke-width="1" fill="none"/></svg>
<svg style="left:597.4px;top:643.1px;" width="4" height="9" viewBox="0 0 4 9"><path d="M0.4 0.6 H3.6 M2 0.6 V8.4 M0.4 8.4 H3.6" stroke="#c2c2c2" stroke-width="1" fill="none"/></svg>
<svg style="left:597.4px;top:654.5px;" width="4" height="9" viewBox="0 0 4 9"><path d="M0.4 0.6 H3.6 M2 0.6 V8.4 M0.4 8.4 H3.6" stroke="#c2c2c2" stroke-width="1" fill="none"/></svg>
<svg style="left:597.4px;top:665.7px;" width="4" height="9" viewBox="0 0 4 9"><path d="M0.4 0.6 H3.6 M2 0.6 V8.4 M0.4 8.4 H3.6" stroke="#c2c2c2" stroke-width="1" fill="none"/></svg>
<svg style="left:0px;top:0px;pointer-events:none;" width="1280" height="720" viewBox="0 0 1280 720"><path d="M474 606.8 L474.0,605.5 L474.8,595.7 L476.2,603.5 L477.7,599.9 L479.1,603.5 L480.5,597.1 L482.6,603.5 L484.7,599.9 L491.7,598.5 L495.9,603.3 L498.7,595.7 L500.2,604.0 L501.6,601.3 L507.2,598.5 L508.6,603.0 L510.0,597.1 L512.1,602.5 L514.2,592.8 L515.6,603.0 L517.0,598.5 L519.1,603.0 L521.2,595.7 L524.6,602.7 L526.9,594.3 L528.6,603.5 L530.2,599.9 L532.5,603.3 L533.9,592.8 L536.0,602.5 L538.1,597.1 L540.2,602.5 L542.3,592.8 L544.4,602.5 L546.6,597.1 L548.0,604.0 L549.4,601.3 L550.8,604.0 L552.2,597.1 L554.3,602.5 L556.4,595.7 L558.5,602.1 L560.6,592.8 L562.0,602.5 L563.4,597.1 L566.2,602.7 L569.0,597.1 L571.2,603.0 L573.3,598.5 L576.1,602.7 L578.9,597.6 L581.7,602.7 L584.5,604.1 L593.0,604.1 L595.8,597.1 L597.2,603.0 L598.6,598.5 L600.0,603.0 L601.4,592.8 L602.8,602.5 L604.2,597.1 L605.6,603.5 L607.0,599.9 L608.4,603.5 L609.8,594.3 L611.2,602.1 L612.6,595.7 L614.0,604.0 L615.4,601.3 L616.9,604.0 L618.3,594.3 L619.7,603.5 L621.1,599.9 L622.5,603.5 L623.9,598.5 L625.3,603.0 L626.7,597.1 L630.9,602.7 L633.7,598.5 L635.4,603.0 L637.1,595.7 L638.9,602.1 L640.8,592.8 L642.2,602.5 L643.6,597.1 L645.0,604.0 L646.4,601.3 L647.8,604.0 L649.2,598.5 L651.0,603.0 L652.9,595.7 L654.5,604.0 L656.2,601.3 L657.6,604.0 L659.0,595.7 L660.4,604.0 L661.9,601.3 L663.5,604.0 L665.2,597.1 L668.0,602.7 L671.7,604.1 L680.1,604.1 L682.9,590.0 L684.3,602.1 L685.8,595.7 L687.2,603.0 L688.6,598.5 L690.0,603.0 L691.4,594.3 L692.8,603.5 L694.2,599.9 L695.6,603.5 L697.0,595.7 L698.4,604.0 L699.8,601.3 L702.6,602.7 L705.4,590.0 L706.8,601.6 L708.3,594.3 L709.7,603.5 L711.1,599.9 L713.9,602.7 L716.7,597.1 L719.5,602.7 L723.7,604.1 L729.3,602.7 L732.2,598.5 L733.6,603.0 L735.0,592.8 L736.4,602.1 L737.8,595.7 L739.2,602.1 L740.6,594.3 L742.0,603.0 L743.4,598.5 L744.8,604.0 L746.2,601.3 L749.0,604.1 L754.7,602.7 L756.1,592.8 L757.5,603.0 L758.9,598.5 L760.3,603.0 L761.7,594.3 L763.1,603.0 L764.5,598.5 L765.9,603.0 L767.3,594.3 L768.7,603.5 L770.1,599.9 L771.5,603.5 L772.9,595.7 L774.3,603.0 L775.7,598.5 L777.1,603.0 L778.6,595.7 L780.0,603.0 L781.4,598.5 L784.2,602.7 L788.4,604.1 L805.3,604.4 L805.3 606.8 Z" fill="#d2e2dc"/><path d="M474 628.8 L474.0,627.5 L474.8,617.7 L476.2,625.5 L477.7,621.9 L479.1,625.5 L480.5,619.1 L482.6,625.5 L484.7,621.9 L491.7,620.5 L495.9,625.3 L498.7,617.7 L500.2,626.0 L501.6,623.3 L507.2,620.5 L508.6,625.0 L510.0,619.1 L512.1,624.5 L514.2,614.8 L515.6,625.0 L517.0,620.5 L519.1,625.0 L521.2,617.7 L524.6,624.7 L526.9,616.3 L528.6,625.5 L530.2,621.9 L532.5,625.3 L533.9,614.8 L536.0,624.5 L538.1,619.1 L540.2,624.5 L542.3,614.8 L544.4,624.5 L546.6,619.1 L548.0,626.0 L549.4,623.3 L550.8,626.0 L552.2,619.1 L554.3,624.5 L556.4,617.7 L558.5,624.1 L560.6,614.8 L562.0,624.5 L563.4,619.1 L566.2,624.7 L569.0,619.1 L571.2,625.0 L573.3,620.5 L576.1,624.7 L578.9,619.6 L581.7,624.7 L584.5,626.1 L593.0,626.1 L595.8,619.1 L597.2,625.0 L598.6,620.5 L600.0,625.0 L601.4,614.8 L602.8,624.5 L604.2,619.1 L605.6,625.5 L607.0,621.9 L608.4,625.5 L609.8,616.3 L611.2,624.1 L612.6,617.7 L614.0,626.0 L615.4,623.3 L616.9,626.0 L618.3,616.3 L619.7,625.5 L621.1,621.9 L622.5,625.5 L623.9,620.5 L625.3,625.0 L626.7,619.1 L630.9,624.7 L633.7,620.5 L635.4,625.0 L637.1,617.7 L638.9,624.1 L640.8,614.8 L642.2,624.5 L643.6,619.1 L645.0,626.0 L646.4,623.3 L647.8,626.0 L649.2,620.5 L651.0,625.0 L652.9,617.7 L654.5,626.0 L656.2,623.3 L657.6,626.0 L659.0,617.7 L660.4,626.0 L661.9,623.3 L663.5,626.0 L665.2,619.1 L668.0,624.7 L671.7,626.1 L680.1,626.1 L682.9,612.0 L684.3,624.1 L685.8,617.7 L687.2,625.0 L688.6,620.5 L690.0,625.0 L691.4,616.3 L692.8,625.5 L694.2,621.9 L695.6,625.5 L697.0,617.7 L698.4,626.0 L699.8,623.3 L702.6,624.7 L705.4,612.0 L706.8,623.6 L708.3,616.3 L709.7,625.5 L711.1,621.9 L713.9,624.7 L716.7,619.1 L719.5,624.7 L723.7,626.1 L729.3,624.7 L732.2,620.5 L733.6,625.0 L735.0,614.8 L736.4,624.1 L737.8,617.7 L739.2,624.1 L740.6,616.3 L742.0,625.0 L743.4,620.5 L744.8,626.0 L746.2,623.3 L749.0,626.1 L754.7,624.7 L756.1,614.8 L757.5,625.0 L758.9,620.5 L760.3,625.0 L761.7,616.3 L763.1,625.0 L764.5,620.5 L765.9,625.0 L767.3,616.3 L768.7,625.5 L770.1,621.9 L771.5,625.5 L772.9,617.7 L774.3,625.0 L775.7,620.5 L777.1,625.0 L778.6,617.7 L780.0,625.0 L781.4,620.5 L784.2,624.7 L788.4,626.1 L805.3,626.4 L805.3 628.8 Z" fill="#d2e2dc"/></svg>
<div style="left:599.1px;top:376px;width:0.9px;height:300px;background:#8f8f8f;"></div>
<div style="left:604.6px;top:376px;width:5.8px;height:300px;background:linear-gradient(90deg,#5a1522,#9c1c34 25%,#b01c38 50%,#9c1c34 75%,#5a1522);mix-blend-mode:lighten;"></div>
<div style="left:1268px;top:343px;width:10.2px;height:333px;background:#1f1f1f;"></div>
<svg style="left:1269px;top:366px;" width="9" height="10" viewBox="0 0 9 10"><path d="M0.5 0.5 H8.5 V6 L4.5 9.5 L0.5 6Z" fill="#c9c9c9"/></svg>
<svg style="left:1268px;top:380px;" width="11" height="9" viewBox="0 0 11 9"><path d="M5.5 0.5 L10 4.5 L5.5 8.5 L1 4.5Z" fill="none" stroke="#bdbdbd" stroke-width="1"/><path d="M5 3 H10 V7 H5Z" fill="#bdbdbd"/></svg>
<div style="left:1267.8px;top:610px;width:10.2px;height:55px;background:#4a4a4a;"></div>
<svg style="left:472px;top:679px;" width="8" height="5" viewBox="0 0 8 5"><path d="M0.5 4.5 L2.5 1.5 L4 3 L5 2 L7.5 4.5Z" fill="#9a9a9a"/></svg>
<div style="left:485.5px;top:681px;width:27px;height:0.9px;background:#6a6a6a;"></div>
<svg style="left:513.5px;top:677px;" width="9" height="9" viewBox="0 0 9 9"><circle cx="4.5" cy="4.5" r="3" fill="#1c1c1c" stroke="#d0d0d0" stroke-width="1.2"/></svg>
<svg style="left:526.5px;top:677.5px;" width="12" height="7" viewBox="0 0 12 7"><path d="M0.5 6.5 L4 1 L6.5 4 L8 2.5 L11.5 6.5Z" fill="#c6c6c6"/></svg>
<div style="left:698px;top:676.3px;width:164.5px;height:11px;background:#4c4c4c;"></div>
<div style="left:0px;top:686.1px;width:1280px;height:33.9px;background:linear-gradient(90deg,#1c2029 0%,#1b1f2d 9%,#181c36 18%,#131842 26%,#0f164a 34%,#10174a 55%,#141a40 68%,#191c32 76%,#1c1f29 86%,#1d2028 100%);"></div>
<div style="left:0px;top:686.1px;width:1280px;height:5px;background:linear-gradient(rgba(170,180,200,0.2),rgba(170,180,200,0.06) 40%,rgba(170,180,200,0));"></div>
<div style="left:14px;top:696.5px;width:7.3px;height:7.3px;background:#66cdf5;border-radius:0.8px;"></div>
<div style="left:22px;top:696.5px;width:7.3px;height:7.3px;background:#58c3f0;border-radius:0.8px;"></div>
<div style="left:14px;top:704.5px;width:7.3px;height:7.3px;background:#4cb6ea;border-radius:0.8px;"></div>
<div style="left:22px;top:704.5px;width:7.3px;height:7.3px;background:#3fa9e3;border-radius:0.8px;"></div>
<div style="left:38px;top:693px;width:146.5px;height:22.5px;background:#2f3443;border-radius:11.5px;border:0.8px solid #3c4152;"></div>
<svg style="left:44px;top:698px;" width="12" height="12" viewBox="0 0 12 12"><circle cx="5" cy="5" r="3.6" fill="none" stroke="#f0f0f0" stroke-width="1.2"/><path d="M7.7 7.7 L10.8 10.8" stroke="#f0f0f0" stroke-width="1.4"/></svg>
<span class="t" style="left:62px;top:698px;font-size:9.4px;line-height:12.22px;color:#e8e8e8;transform:scaleX(0.942);transform-origin:0 50%;">Search</span>
<svg style="left:151px;top:695px;" width="26" height="18" viewBox="0 0 26 18"><ellipse cx="15" cy="13" rx="8" ry="3.4" fill="#e8e3c8"/><ellipse cx="15.5" cy="9.5" rx="6" ry="3" fill="#f0d070"/><ellipse cx="16" cy="6.5" rx="4" ry="2.4" fill="#f5c84a"/><circle cx="17" cy="3.6" r="1.8" fill="#e8684a"/><path d="M2 15 L6 9 L9 15Z" fill="#cfd3da"/><ellipse cx="11" cy="15" rx="9" ry="1.6" fill="#8d97a8"/></svg>
<svg style="left:192px;top:695px;" width="18" height="18" viewBox="0 0 18 18"><defs><linearGradient id="cp1" x1="0" y1="0" x2="1" y2="1"><stop offset="0" stop-color="#2a8af0"/><stop offset="0.45" stop-color="#8a6af0"/><stop offset="1" stop-color="#f2803c"/></linearGradient></defs><path d="M5.5 2.2 H10.5 Q12 2.2 12.6 3.8 L15.6 11.8 Q16.2 14.2 14 14.6 H8.6 Q7 14.6 6.4 13 L3.2 4.6 Q2.8 2.2 5.5 2.2Z" fill="url(#cp1)"/><path d="M3 7 L6.5 7 L9 14.6 H5 Q2.2 14.6 2.2 12 Z" fill="#f0a040" opacity="0.9"/><path d="M9 2.2 H13.4 Q15.8 2.2 15.8 4.8 V9.8 L13 9.8 Z" fill="#c060e0" opacity="0.9"/><path d="M7.2 6 L9.6 6 L11 11 L8.6 11Z" fill="#1a1d38"/></svg>
<svg style="left:221px;top:695px;" width="18" height="18" viewBox="0 0 18 18"><circle cx="12.5" cy="4.5" r="2.4" fill="#7b83eb"/><circle cx="6.8" cy="4" r="2.8" fill="#5059c9"/><rect x="9.5" y="7.5" width="7" height="7.5" rx="2" fill="#7b83eb"/><rect x="2" y="7.2" width="10" height="9" rx="1.6" fill="#4b53bc"/><path d="M4.6 9.3 H9.4 M7 9.3 V14.4" stroke="#fff" stroke-width="1.4"/></svg>
<svg style="left:250px;top:695px;" width="18" height="18" viewBox="0 0 18 18"><circle cx="9" cy="9" r="7.8" fill="#101014"/><path d="M9 1.2 A7.8 7.8 0 0 1 16.8 9 H12.5 A3.5 3.5 0 0 0 9 5.5Z" fill="#e8304a"/><path d="M16.8 9 A7.8 7.8 0 0 1 9 16.8 V12.5 A3.5 3.5 0 0 0 12.5 9Z" fill="#b01838"/><path d="M9 16.8 A7.8 7.8 0 0 1 1.2 9 H5.5 A3.5 3.5 0 0 0 9 12.5Z" fill="#1898c0"/><path d="M1.2 9 A7.8 7.8 0 0 1 9 1.2 V5.5 A3.5 3.5 0 0 0 5.5 9Z" fill="#28b8a8"/><path d="M9 1.2 A7.8 7.8 0 0 1 13 2.3 L10.6 5.9 A3.5 3.5 0 0 0 9 5.5Z" fill="#5ac85a"/></svg>
<svg style="left:279px;top:695px;" width="20" height="20" viewBox="0 0 20 20"><rect x="2.5" y="1.5" width="10.5" height="12" rx="1" fill="#f2f2f2"/><rect x="4" y="3.5" width="1.6" height="1.6" fill="#555"/><rect x="4" y="6.3" width="1.6" height="1.6" fill="#555"/><rect x="4" y="9.1" width="1.6" height="1.6" fill="#555"/><rect x="6.3" y="2.8" width="5.4" height="8.4" fill="#e2dcc8"/><path d="M10 16 L15.5 8.5 M12.5 16.5 L14 9" stroke="#4aa0e8" stroke-width="1.3"/><circle cx="15.5" cy="10" r="1.4" fill="none" stroke="#4aa0e8" stroke-width="1"/></svg>
<div style="left:287.75px;top:715.3px;width:2.5px;height:1.3px;background:#9aa0b4;border-radius:1px;"></div>
<svg style="left:308.5px;top:695px;" width="18" height="18" viewBox="0 0 18 18"><defs><linearGradient id="eg" x1="0" y1="0" x2="1" y2="1"><stop offset="0" stop-color="#35c1f1"/><stop offset="0.55" stop-color="#1e8fd8"/><stop offset="1" stop-color="#4fd07a"/></linearGradient></defs><circle cx="9" cy="9" r="7.8" fill="url(#eg)"/><path d="M3.5 10.5 Q3.5 5.5 9 5.5 Q13.5 5.5 14 9 Q14 11 11.5 11 H8.5 Q8.5 14 12.5 14.5 Q9 17 5.5 14.5 Q3.5 12.8 3.5 10.5Z" fill="#0f5fa8" opacity="0.85"/><path d="M1.3 9 Q2 2 9 1.3 Q16 2 16.7 8 Q15 4.6 9.5 4.6 Q3.5 4.6 1.3 9Z" fill="#49d6c0" opacity="0.8"/></svg>
<svg style="left:338.5px;top:695px;" width="18" height="18" viewBox="0 0 18 18"><circle cx="9" cy="9" r="7.5" fill="#1a1a22" stroke="#d8d8d8" stroke-width="1.1"/><path d="M9 3.5 A3 3 0 0 1 11.5 8.2 M13.8 11.5 A3 3 0 0 1 8.8 12.4 M4.3 11 A3 3 0 0 1 7 6.2" fill="none" stroke="#d8d8d8" stroke-width="1.5"/></svg>
<svg style="left:367px;top:694.5px;" width="18" height="19" viewBox="0 0 18 19"><path d="M6 4.5 V3.5 Q6 1.8 9 1.8 Q12 1.8 12 3.5 V4.5" fill="none" stroke="#e8e8ee" stroke-width="1.1"/><rect x="1.8" y="4.5" width="14.4" height="12.5" rx="1.8" fill="#eef0f8"/><rect x="5.5" y="7.3" width="3" height="3" fill="#f25022"/><rect x="9.3" y="7.3" width="3" height="3" fill="#7fba00"/><rect x="5.5" y="11" width="3" height="3" fill="#00a4ef"/><rect x="9.3" y="11" width="3" height="3" fill="#ffb900"/></svg>
<svg style="left:396px;top:695px;" width="20" height="18" viewBox="0 0 20 18"><path d="M1.5 11 L9 4.5 H5 M9 4.5 L11.5 2" fill="none" stroke="#e87d0d" stroke-width="1.7" stroke-linecap="round"/><ellipse cx="11.5" cy="10.5" rx="6" ry="5" fill="#e87d0d"/><circle cx="11.8" cy="10.5" r="3.1" fill="#fff"/><circle cx="11.8" cy="10.5" r="1.9" fill="#265787"/></svg>
<div style="left:426.75px;top:695.75px;width:16.5px;height:16.5px;background:#330000;border-radius:2.2px;"></div>
<span class="t" style="left:430.91px;top:700px;font-size:8.2px;line-height:10.66px;color:#ff9a00;font-weight:700;">Ai</span>
<div style="left:456.25px;top:695.75px;width:16.5px;height:16.5px;background:#00005b;border-radius:2.2px;"></div>
<span class="t" style="left:459.08px;top:700px;font-size:7.8px;line-height:10.14px;color:#9999ff;font-weight:700;">Me</span>
<div style="left:463.25px;top:715.3px;width:2.5px;height:1.3px;background:#9aa0b4;border-radius:1px;"></div>
<div style="left:486px;top:695.5px;width:17px;height:17px;background:#e11d3a;border-radius:1.5px;"></div>
<span class="t" style="left:490.02px;top:698px;font-size:9.5px;line-height:12.35px;color:#ffffff;font-weight:700;">W</span>
<div style="left:514.75px;top:695.75px;width:16.5px;height:16.5px;background:#0a1a3c;border-radius:2.2px;"></div>
<span class="t" style="left:517.99px;top:700px;font-size:8.2px;line-height:10.66px;color:#31a8ff;font-weight:700;">Ps</span>
<div style="left:544.25px;top:695.75px;width:16.5px;height:16.5px;background:#0d0850;border-radius:2.2px;"></div>
<span class="t" style="left:548.17px;top:700px;font-size:8.2px;line-height:10.66px;color:#9999ff;font-weight:700;">Pr</span>
<div style="left:574.5px;top:696px;width:16.5px;height:16.5px;background:#1a2bb5;border-radius:2px;"></div>
<svg style="left:575.5px;top:697px;" width="14" height="14" viewBox="0 0 14 14"><path d="M10.5 3 Q4 2 3.5 7.5 Q4 12.5 10 11.2 L9.4 9 Q6 9.8 6 7.2 Q6.4 4.6 10 5.4Z" fill="#ffffff"/><path d="M10.5 3 L12.5 2.2 L11.5 5.2 L10 5.4Z" fill="#f5d23a"/></svg>
<svg style="left:602px;top:695px;" width="20" height="19" viewBox="0 0 20 19"><rect x="1" y="1.5" width="15.5" height="16" rx="3.5" fill="#f4f6fb"/><path d="M4 8 Q8 3 13 7 L10.5 8.5 Q8 6.5 6 9Z" fill="#e8384a"/><path d="M4 11 Q8.5 15.5 13.5 11 V13.5 Q8.5 16.5 4 13.5Z" fill="#7fb4ea"/><rect x="11" y="0" width="9" height="6.5" rx="3.2" fill="#15171f"/></svg>
<span class="t" style="left:614.38px;top:696px;font-size:5.6px;line-height:7.28px;color:#ffffff;font-weight:700;">66</span>
<div style="left:609.75px;top:715.3px;width:2.5px;height:1.3px;background:#9aa0b4;border-radius:1px;"></div>
<svg style="left:631px;top:695.5px;" width="19" height="17" viewBox="0 0 19 17"><path d="M1 2.5 Q1 1.5 2 1.5 H6.5 L8.5 3.5 H17 Q18 3.5 18 4.5 V7 H1Z" fill="#e8a820"/><rect x="1" y="5" width="17" height="10.5" rx="1" fill="#f8d048"/><rect x="1" y="11.5" width="17" height="4" fill="#e8b83a"/><rect x="5.5" y="13" width="8" height="2.5" fill="#3a8ad8"/></svg>
<div style="left:639.25px;top:715.3px;width:2.5px;height:1.3px;background:#9aa0b4;border-radius:1px;"></div>
<svg style="left:660px;top:694.5px;" width="21" height="19" viewBox="0 0 21 19"><circle cx="9" cy="10" r="7.8" fill="#f6f6f8"/><rect x="5" y="8.6" width="4" height="1.9" rx="0.9" fill="#36c5f0"/><rect x="9.3" y="5.4" width="1.9" height="4" rx="0.9" fill="#2eb67d"/><rect x="9.6" y="10.7" width="4" height="1.9" rx="0.9" fill="#ecb22e"/><rect x="7.2" y="11.2" width="1.9" height="4" rx="0.9" fill="#e01e5a"/><circle cx="16" cy="4.3" r="4.2" fill="#e03a4e"/></svg>
<span class="t" style="left:673.0px;top:696px;font-size:5.4px;line-height:7.02px;color:#ffffff;font-weight:700;">86</span>
<div style="left:668.25px;top:715.3px;width:2.5px;height:1.3px;background:#9aa0b4;border-radius:1px;"></div>
<svg style="left:690px;top:695px;" width="18" height="18" viewBox="0 0 18 18"><defs><linearGradient id="cv" x1="0" y1="1" x2="1" y2="0"><stop offset="0" stop-color="#7d2ae8"/><stop offset="0.55" stop-color="#19b4c8"/><stop offset="1" stop-color="#2cd6c4"/></linearGradient></defs><circle cx="9" cy="9" r="8" fill="url(#cv)"/><path d="M11.8 6.2 Q9.6 3.6 7.4 6.6 Q5.6 10 7.4 12.2 Q9.6 13.8 11.8 11.2" fill="none" stroke="#fff" stroke-width="1.3" stroke-linecap="round"/></svg>
<div style="left:697.75px;top:715.3px;width:2.5px;height:1.3px;background:#9aa0b4;border-radius:1px;"></div>
<div style="left:715.5px;top:690.5px;width:26.5px;height:27px;background:#262b45;border-radius:3px;"></div>
<div style="left:720.25px;top:695.75px;width:16.5px;height:16.5px;background:#00005b;border-radius:2.2px;"></div>
<span class="t" style="left:723.27px;top:700px;font-size:8.2px;line-height:10.66px;color:#9999ff;font-weight:700;">Ae</span>
<div style="left:723.5px;top:715.3px;width:10px;height:1.3px;background:#8fb4ee;border-radius:1px;"></div>
<svg style="left:749.0px;top:695.5px;" width="17" height="17" viewBox="0 0 17 17"><circle cx="8.5" cy="8.5" r="8" fill="#fff"/><path d="M8.5 0.5 A8 8 0 0 1 15.4 4.5 H8.5 A4 4 0 0 0 5 6.5 L1.6 4.5 A8 8 0 0 1 8.5 0.5Z" fill="#e53e30"/><path d="M15.4 4.5 A8 8 0 0 1 8.5 16.5 L12 10.5 A4 4 0 0 0 12 6.5 Z" fill="#f7c21a" transform="rotate(0)"/><path d="M1.6 4.5 L5 10.5 A4 4 0 0 0 8.5 12.5 L8.5 16.5 A8 8 0 0 1 1.6 4.5Z" fill="#2da94f"/><path d="M15.4 4.5 H8.5 A4 4 0 0 1 12 10.5 L8.5 16.5 A8 8 0 0 0 15.4 4.5Z" fill="#f7c21a"/><circle cx="8.5" cy="8.5" r="3.3" fill="#3c7de8" stroke="#fff" stroke-width="0.9"/></svg>
<svg style="left:762.5px;top:692.5px;" width="7" height="7" viewBox="0 0 7 7"><circle cx="3.5" cy="3.5" r="3" fill="#4a4f66"/><path d="M2 5 L5 2" stroke="#cfd4e8" stroke-width="0.9"/></svg>
<div style="left:756.25px;top:715.3px;width:2.5px;height:1.3px;background:#9aa0b4;border-radius:1px;"></div>
<svg style="left:778.0px;top:695.5px;" width="17" height="17" viewBox="0 0 17 17"><circle cx="8.5" cy="8.5" r="8" fill="#fff"/><path d="M8.5 0.5 A8 8 0 0 1 15.4 4.5 H8.5 A4 4 0 0 0 5 6.5 L1.6 4.5 A8 8 0 0 1 8.5 0.5Z" fill="#e53e30"/><path d="M15.4 4.5 A8 8 0 0 1 8.5 16.5 L12 10.5 A4 4 0 0 0 12 6.5 Z" fill="#f7c21a" transform="rotate(0)"/><path d="M1.6 4.5 L5 10.5 A4 4 0 0 0 8.5 12.5 L8.5 16.5 A8 8 0 0 1 1.6 4.5Z" fill="#2da94f"/><path d="M15.4 4.5 H8.5 A4 4 0 0 1 12 10.5 L8.5 16.5 A8 8 0 0 0 15.4 4.5Z" fill="#f7c21a"/><circle cx="8.5" cy="8.5" r="3.3" fill="#3c7de8" stroke="#fff" stroke-width="0.9"/></svg>
<div style="left:788.5px;top:692.5px;width:8.5px;height:8.5px;background:#e03a2e;border-radius:50%;"></div>
<span class="t" style="left:791.24px;top:694px;font-size:5.6px;line-height:7.28px;color:#ffffff;font-weight:700;">1</span>
<div style="left:785.25px;top:715.3px;width:2.5px;height:1.3px;background:#9aa0b4;border-radius:1px;"></div>
<svg style="left:808px;top:695.5px;" width="17" height="17" viewBox="0 0 17 17"><rect x="0.5" y="0.5" width="16" height="16" rx="2.5" fill="#23272e" stroke="#7a8088" stroke-width="0.9"/><circle cx="8.5" cy="5.6" r="2.3" fill="#e8c83c"/><circle cx="5.4" cy="10.8" r="2.3" fill="#3cc8c0"/><circle cx="11.6" cy="10.8" r="2.3" fill="#e8566a"/></svg>
<svg style="left:1054.5px;top:698.5px;" width="12" height="11" viewBox="0 0 12 11"><rect x="0.3" y="0.3" width="11.4" height="10.4" rx="2" fill="#f4f4f6"/><path d="M3 7.8 Q1.8 6.2 3.6 5.4 Q4 3.2 6.2 3.4 Q8 3.2 8.4 5.2 Q10.2 5.6 9.4 7.8Z" fill="none" stroke="#333" stroke-width="0.9"/></svg>
<svg style="left:1077px;top:698px;" width="10" height="13" viewBox="0 0 10 13"><rect x="2" y="0.8" width="4.4" height="3" fill="none" stroke="#d8d8d8" stroke-width="0.9"/><rect x="1" y="3.6" width="6.4" height="7.6" rx="1.2" fill="none" stroke="#d8d8d8" stroke-width="1"/><path d="M6.5 11.5 Q9 11 9 8" fill="none" stroke="#d8d8d8" stroke-width="0.9"/></svg>
<svg style="left:1096.5px;top:697.5px;" width="13" height="13" viewBox="0 0 13 13"><path d="M2 6 A4.5 4.5 0 0 1 10 3.6 M11 7 A4.5 4.5 0 0 1 3 9.6" fill="none" stroke="#e8e8e8" stroke-width="1.2"/><path d="M10.8 1 V4.4 H7.4Z M2.2 12 V8.6 H5.6Z" fill="#e8e8e8"/><circle cx="9.8" cy="9.8" r="2.5" fill="#f08a28"/></svg>
<svg style="left:1119.5px;top:698px;" width="9" height="12.5" viewBox="0 0 9 12.5"><rect x="0.3" y="0.3" width="8.4" height="11.9" rx="3.6" fill="#2a7de0"/><path d="M2.6 4 L6.2 8 L4.4 9.8 V2.6 L6.2 4.4 L2.6 8.4" fill="none" stroke="#fff" stroke-width="0.8"/></svg>
<span class="t" style="left:1141.77px;top:695px;font-size:7.6px;line-height:9.88px;color:#f0f0f0;">ENG</span>
<span class="t" style="left:1146.2px;top:706px;font-size:7.6px;line-height:9.88px;color:#f0f0f0;">IN</span>
<svg style="left:1169px;top:698px;" width="13" height="12" viewBox="0 0 13 12"><rect x="0.8" y="1.2" width="9" height="7.2" fill="none" stroke="#e0e0e0" stroke-width="1"/><path d="M3 10.5 H8 M5.5 8.5 V10.5" stroke="#e0e0e0" stroke-width="1"/><rect x="8.4" y="0.3" width="3.4" height="4.6" fill="#1d2028" stroke="#e0e0e0" stroke-width="0.8"/></svg>
<svg style="left:1184.5px;top:699px;" width="12" height="10" viewBox="0 0 12 10"><path d="M0.6 3.4 H2.6 L5.2 1 V9 L2.6 6.6 H0.6Z" fill="none" stroke="#e8e8e8" stroke-width="0.9"/><path d="M6.8 3.2 Q8 5 6.8 6.8" fill="none" stroke="#e8e8e8" stroke-width="0.9"/><path d="M8.6 1.8 Q10.6 5 8.6 8.2" fill="none" stroke="#6a6e78" stroke-width="0.9"/></svg>
<span class="t" style="left:1206.78px;top:695px;font-size:7.8px;line-height:10.14px;color:#f0f0f0;transform:scaleX(0.984);transform-origin:100% 50%;">06:38:03 PM</span>
<span class="t" style="left:1211.11px;top:706px;font-size:7.8px;line-height:10.14px;color:#f0f0f0;transform:scaleX(1.028);transform-origin:100% 50%;">07-01-2026</span>
<svg style="left:1255.5px;top:698.5px;" width="12" height="12" viewBox="0 0 12 12"><path d="M2 8.5 Q3 7.5 3 5 Q3 1.8 6 1.8 Q9 1.8 9 5 Q9 7.5 10 8.5Z" fill="#f0f0f0"/><path d="M4.8 9.6 Q6 11 7.2 9.6Z" fill="#f0f0f0"/><text x="7.2" y="7" font-size="4.5" fill="#1d2028" font-family="Liberation Sans, sans-serif" font-weight="700">z</text></svg>
<svg style="left:595px;top:222px;" width="135" height="70" viewBox="0 0 1280 664">
<defs>
<clipPath id="cvclip"><rect x="60" y="0" width="1137" height="664"/></clipPath>
<radialGradient id="bb1" cx="0.35" cy="0.6" r="0.75"><stop offset="0" stop-color="#a8d4e8"/><stop offset="0.45" stop-color="#b8dc90"/><stop offset="0.8" stop-color="#e2e04a"/><stop offset="1" stop-color="#e8e860" stop-opacity="0"/></radialGradient>
<filter id="bl" x="-20%" y="-20%" width="140%" height="140%"><feGaussianBlur stdDeviation="9"/></filter>
<filter id="bl2" x="-20%" y="-50%" width="140%" height="200%"><feGaussianBlur stdDeviation="5"/></filter>
</defs>
<g clip-path="url(#cvclip)">
<ellipse cx="445" cy="425" rx="118" ry="23" fill="#b9bcc4" filter="url(#bl2)"/>
<ellipse cx="850" cy="425" rx="115" ry="23" fill="#b9bcc4" filter="url(#bl2)"/>
<path d="M60 250 Q200 200 300 300 Q360 360 330 420 Q200 470 60 440Z" fill="url(#bb1)" filter="url(#bl)"/>
<path d="M62 385 Q130 370 200 395 L200 440 Q120 450 62 435Z" fill="#e0e03c" filter="url(#bl2)"/>
<circle cx="122" cy="138" r="27" fill="#263a52"/><circle cx="98" cy="128" r="14" fill="#263a52"/>
<path d="M66 205 Q120 180 185 205 L195 250 L160 300 L100 305 L70 270Z" fill="#2a4048"/>
<path d="M66 270 Q80 260 96 300 L80 320 L66 310Z" fill="#f0a888"/>
<path d="M96 305 L190 300 L345 385 L330 410 L235 365 L250 495 L215 495 L196 370 L100 350Z" fill="#90c4dc"/>
<path d="M330 388 L378 368 L372 392 L342 420Z" fill="#2a3a8a"/>
<path d="M218 492 H275 V510 H218Z" fill="#1c2f52"/>
<path d="M1197 300 Q1050 260 960 320 Q900 380 960 420 Q1050 445 1197 435Z" fill="#c43444"/>
<path d="M1197 160 Q1100 170 1030 250 Q960 300 925 350 L945 385 Q1000 330 1060 300 L1197 300Z" fill="#1f4a60"/>
<path d="M1197 175 Q1110 180 1045 260 L1040 295 L1197 300Z" fill="#f2f0ee"/>
<path d="M1197 190 L1150 200 L1125 290 L1197 295Z" fill="#f6e8e8"/>
<circle cx="1152" cy="122" r="24" fill="#3a3040"/>
<path d="M1135 135 Q1152 165 1175 140 L1172 170 L1140 170Z" fill="#e0a090"/>
<path d="M1040 298 L1197 310 V360 L1078 352 L1070 492 L1030 492 L1028 360 L940 392 L925 362Z" fill="#1a7a90"/>
<path d="M884 360 L930 372 L940 396 L905 392Z" fill="#1c2f52"/>
<path d="M995 490 H1052 V510 H995Z" fill="#1c2f52"/>
</g>
</svg>
<svg style="left:560px;top:280px;" width="160" height="160" viewBox="0 0 160 160"><circle cx="80" cy="80" r="73.2" fill="#ffffff"/><circle cx="80" cy="80" r="63.4" fill="#4da5ea"/><path d="M63 48.7 L63 110.5 L108.3 79.6 Z" fill="#ffffff" stroke="#ffffff" stroke-width="7" stroke-linejoin="round"/></svg>
</div></body></html>
